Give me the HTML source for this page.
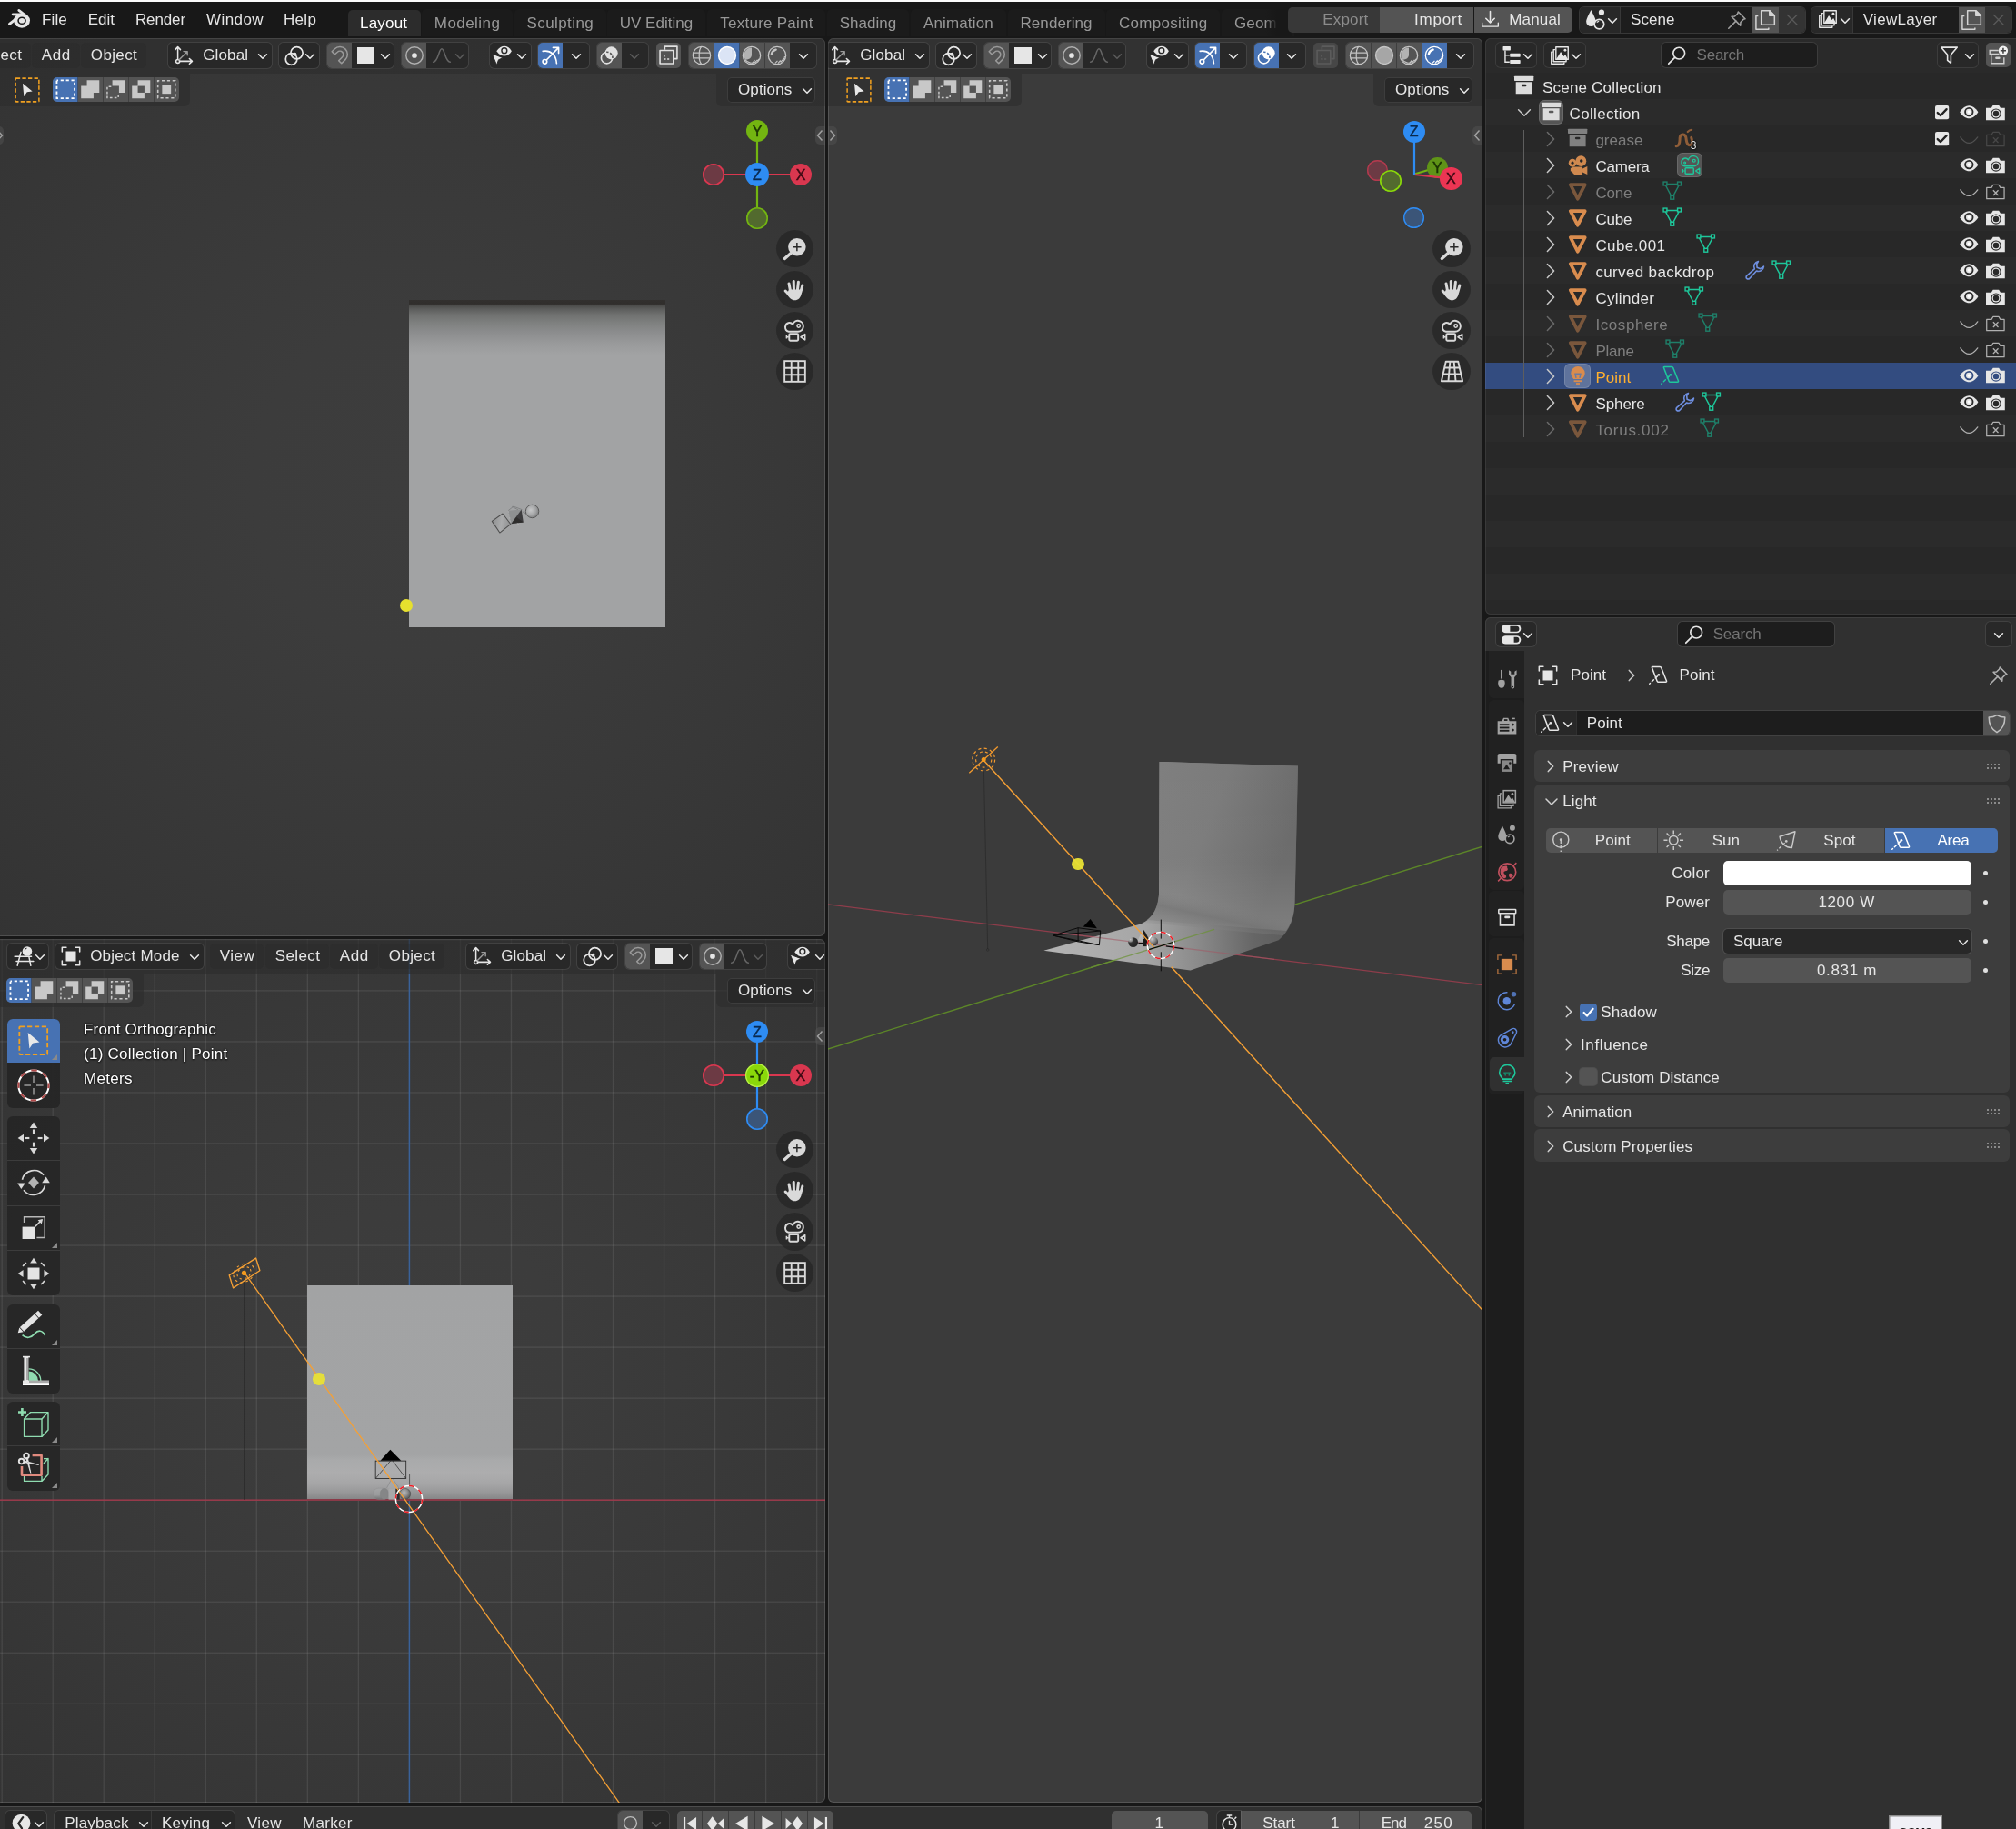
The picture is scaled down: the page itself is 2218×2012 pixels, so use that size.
<!DOCTYPE html>
<html><head><meta charset="utf-8"><title>Blender</title>
<style>
html,body{margin:0;padding:0;background:#181818;}
#root{position:relative;width:2218px;height:2012px;overflow:hidden;background:#181818;font-family:"Liberation Sans",sans-serif;}
#root div,#root svg{position:absolute;}
#root svg{overflow:visible;}
.t{white-space:nowrap;line-height:24px;height:24px;}
#root{will-change:transform;}
</style></head><body><div id="root">
<div style="left:0px;top:0px;width:2218px;height:2px;background:#fbfbfb;"></div>
<div style="left:0px;top:2px;width:2218px;height:40px;background:#181818;"></div>
<div style="left:-8px;top:42px;width:916px;height:988px;background:radial-gradient(ellipse 75% 75% at 50% 50%, #3d3d3d 0%, #3c3c3c 25%, #383838 60%, #343434 90%, #323232 100%);border-radius:6px;box-shadow:inset 0 0 0 1px rgba(255,255,255,0.07);overflow:hidden;"></div>
<div style="left:-8px;top:1033px;width:916px;height:950px;background:radial-gradient(ellipse 75% 75% at 50% 50%, #3d3d3d 0%, #3c3c3c 25%, #383838 60%, #343434 90%, #323232 100%);border-radius:6px;box-shadow:inset 0 0 0 1px rgba(255,255,255,0.07);overflow:hidden;"></div>
<div style="left:911px;top:42px;width:720px;height:1941px;background:#3b3b3b;border-radius:6px;box-shadow:inset 0 0 0 1px rgba(255,255,255,0.07);overflow:hidden;"></div>
<div style="left:1634px;top:42px;width:601px;height:633.7px;background:#282828;border-radius:6px;box-shadow:inset 0 0 0 1px rgba(255,255,255,0.07);overflow:hidden;"></div>
<div style="left:1634px;top:679.4px;width:601px;height:1350px;background:#303030;border-radius:6px;box-shadow:inset 0 0 0 1px rgba(255,255,255,0.07);overflow:hidden;"></div>
<div style="left:-8px;top:1987px;width:1639px;height:40px;background:#303030;border-radius:6px;box-shadow:inset 0 0 0 1px rgba(255,255,255,0.07);overflow:hidden;"></div>
<svg style="left:8.75px;top:9.35px;" width="24.5" height="24.5" viewBox="0 0 20 20"><g fill="none" stroke="#e6e6e6" stroke-linecap="round">
<path d="M1.2 14.2 L9.5 7.6" stroke-width="2.4"/><path d="M4.2 5.6 L11.2 5.6" stroke-width="2.2"/><path d="M9.6 1.9 L14.8 5.9" stroke-width="2.2"/>
</g><ellipse cx="12.3" cy="11.1" rx="7.3" ry="6.6" fill="#e6e6e6"/><ellipse cx="12.3" cy="11.2" rx="3.9" ry="3.5" fill="#181818"/><ellipse cx="12.3" cy="11.2" rx="2.6" ry="2.3" fill="#e6e6e6"/></svg>
<div class="t" style="left:46.1px;top:10.00px;color:#e6e6e6;font-size:17px;letter-spacing:0.070px;">File</div>
<div class="t" style="left:96.7px;top:10.00px;color:#e6e6e6;font-size:17px;letter-spacing:0.036px;">Edit</div>
<div class="t" style="left:148.9px;top:10.00px;color:#e6e6e6;font-size:17px;letter-spacing:-0.110px;">Render</div>
<div class="t" style="left:227.1px;top:10.00px;color:#e6e6e6;font-size:17px;letter-spacing:0.388px;">Window</div>
<div class="t" style="left:312.0px;top:10.00px;color:#e6e6e6;font-size:17px;letter-spacing:0.313px;">Help</div>
<div style="left:383px;top:10.8px;width:80px;height:29px;background:#2c2c2c;border-radius:5px 5px 0 0;"></div>
<div class="t" style="left:396px;top:13.70px;color:#ffffff;font-size:17px;letter-spacing:0.193px;">Layout</div>
<div style="left:463.8px;top:9.8px;width:100.09999999999997px;height:30px;background:#1b1b1b;border-radius:5px 5px 0 0;"></div>
<div class="t" style="left:477.8px;top:13.70px;color:#989898;font-size:17px;letter-spacing:0.446px;">Modeling</div>
<div style="left:565.5px;top:9.8px;width:101.20000000000005px;height:30px;background:#1b1b1b;border-radius:5px 5px 0 0;"></div>
<div class="t" style="left:579.5px;top:13.70px;color:#989898;font-size:17px;letter-spacing:0.409px;">Sculpting</div>
<div style="left:667.7px;top:9.8px;width:108.5px;height:30px;background:#1b1b1b;border-radius:5px 5px 0 0;"></div>
<div class="t" style="left:681.7px;top:13.70px;color:#989898;font-size:17px;letter-spacing:0.020px;">UV Editing</div>
<div style="left:778.3px;top:9.8px;width:130.10000000000002px;height:30px;background:#1b1b1b;border-radius:5px 5px 0 0;"></div>
<div class="t" style="left:792.3px;top:13.70px;color:#989898;font-size:17px;letter-spacing:0.241px;">Texture Paint</div>
<div style="left:909.7px;top:9.8px;width:90.59999999999991px;height:30px;background:#1b1b1b;border-radius:5px 5px 0 0;"></div>
<div class="t" style="left:923.7px;top:13.70px;color:#989898;font-size:17px;letter-spacing:0.036px;">Shading</div>
<div style="left:1001.9px;top:9.8px;width:104.80000000000007px;height:30px;background:#1b1b1b;border-radius:5px 5px 0 0;"></div>
<div class="t" style="left:1015.9px;top:13.70px;color:#989898;font-size:17px;letter-spacing:0.151px;">Animation</div>
<div style="left:1108.5px;top:9.8px;width:107px;height:30px;background:#1b1b1b;border-radius:5px 5px 0 0;"></div>
<div class="t" style="left:1122.5px;top:13.70px;color:#989898;font-size:17px;letter-spacing:0.071px;">Rendering</div>
<div style="left:1216.9px;top:9.8px;width:125.39999999999986px;height:30px;background:#1b1b1b;border-radius:5px 5px 0 0;"></div>
<div class="t" style="left:1230.9px;top:13.70px;color:#989898;font-size:17px;letter-spacing:0.292px;">Compositing</div>
<div style="left:1343.5px;top:9.8px;width:80px;height:30px;background:#1b1b1b;border-radius:5px 0 0 0;"></div>
<div class="t" style="left:1358px;top:13.70px;color:#989898;font-size:17px;letter-spacing:0.150px;">Geometry Nodes</div>
<div style="left:1392px;top:2px;width:30px;height:40px;background:linear-gradient(90deg,rgba(24,24,24,0),#181818 45%);"></div>
<div style="left:1416.5px;top:7.5px;width:101px;height:28px;background:#383838;border-radius:5px 0 0 5px;"></div>
<div style="left:1517.5px;top:7.5px;width:103.5px;height:28px;background:#545454;"></div>
<div style="left:1622px;top:7.5px;width:108px;height:28px;background:#545454;border-radius:0 5px 5px 0;"></div>
<div class="t" style="left:1455.3px;top:10.00px;color:#8c8c8c;font-size:17px;letter-spacing:0.174px;">Export</div>
<div class="t" style="left:1556px;top:10.00px;color:#e6e6e6;font-size:17px;letter-spacing:0.826px;">Import</div>
<svg style="left:1629.0px;top:10.5px;" width="21" height="21" viewBox="0 0 20 20"><g fill="none" stroke="#e6e6e6" stroke-width="1.5" stroke-linecap="round" stroke-linejoin="round"><path d="M10 1.5 V13 M5.5 8.8 L10 13.3 L14.5 8.8"/><path d="M1.6 13.5 V17.2 H18.4 V13.5" stroke-width="1.3"/></g></svg>
<div class="t" style="left:1660.3px;top:10.00px;color:#e6e6e6;font-size:17px;letter-spacing:0.150px;">Manual</div>
<div style="left:1737.5px;top:7.5px;width:248px;height:28px;background:#1d1d1d;border-radius:5px;box-shadow:0 0 0 1px #383838;"></div>
<div style="left:1737.5px;top:7.5px;width:44.5px;height:28px;background:#282828;border-radius:5px 0 0 5px;box-shadow:1px 0 0 0 #383838;"></div>
<svg style="left:1743.5px;top:10.0px;" width="23" height="23" viewBox="0 0 20 20"><path d="M5.6 0.8 C7.8 5.2 10.2 9.4 10.2 12 A4.6 4.6 0 0 1 1 12 C1 9.4 3.6 4.6 5.6 0.8Z" fill="#e6e6e6"/>
<circle cx="15.6" cy="3.2" r="2.7" fill="#e6e6e6"/><circle cx="13.4" cy="14.4" r="4.6" fill="#282828" stroke="#e6e6e6" stroke-width="1.5"/><path d="M11.2 12.8 A2.8 2.8 0 0 1 13.2 11.6" stroke="#e6e6e6" stroke-width="1" fill="none"/></svg>
<svg style="left:1765.5px;top:14.5px;" width="16" height="16" viewBox="0 0 16 16"><path d="M3.5999999999999996 5.8 L8 10.2 L12.4 5.8" fill="none" stroke="#e6e6e6" stroke-width="1.55" stroke-linecap="round" stroke-linejoin="round"/></svg>
<div class="t" style="left:1794px;top:10.00px;color:#e6e6e6;font-size:17px;letter-spacing:0.075px;">Scene</div>
<svg style="left:1900.0px;top:11.0px;" width="22" height="22" viewBox="0 0 20 20"><g fill="none" stroke="#a0a0a0" stroke-width="1.4" stroke-linejoin="round" stroke-linecap="round"><path d="M11.2 1.8 L18.2 8.8 L16.4 9.4 L13.6 12.2 L13.4 15.6 L4.6 6.6 L7.8 6.4 L10.6 3.6 Z"/><path d="M9 11 L1.6 18.4"/></g></svg>
<div style="left:1927.5px;top:7.5px;width:29px;height:28px;background:#545454;"></div>
<svg style="left:1930.0px;top:9.5px;" width="24" height="24" viewBox="0 0 20 20"><g fill="none" stroke="#d4d4d4" stroke-width="1.25" stroke-linejoin="round"><path d="M6.4 1.4 H14.2 L18.6 5.8 V14.4 H6.4 Z"/><path d="M14 1.6 V6 H18.4 Z" fill="#d4d4d4"/><path d="M3.6 6.2 H1.6 V18.6 H13.2 V17"/></g></svg>
<div style="left:1956.5px;top:7.5px;width:29px;height:28px;background:#333333;border-radius:0 5px 5px 0;"></div>
<svg style="left:1962.55px;top:13.25px;" width="17.5" height="17.5" viewBox="0 0 20 20"><path d="M4 4 L16 16 M16 4 L4 16" stroke="#595959" stroke-width="1.6" stroke-linecap="round" fill="none"/></svg>
<div style="left:1993.3px;top:7.5px;width:219.5px;height:28px;background:#1d1d1d;border-radius:5px;box-shadow:0 0 0 1px #383838;"></div>
<div style="left:1993.3px;top:7.5px;width:45px;height:28px;background:#282828;border-radius:5px 0 0 5px;box-shadow:1px 0 0 0 #383838;"></div>
<svg style="left:2000.0px;top:10.0px;" width="22" height="22" viewBox="0 0 20 20"><g fill="none" stroke="#e6e6e6" stroke-width="1.3" stroke-linejoin="round"><path d="M3.4 6.5 H1.6 V18.4 H14.4 V16.8"/><path d="M5.4 4.2 H3.8 V16.2 H16.4 V14.6"/>
<rect x="6.2" y="1.6" width="12.2" height="12.4" fill="#282828"/></g><path d="M6.6 13.6 L11 6.4 L14 11 L15.6 9.2 L18 13.6 Z" fill="#e6e6e6"/><circle cx="15.4" cy="4.8" r="1.3" fill="#e6e6e6"/></svg>
<svg style="left:2021.5px;top:14.5px;" width="16" height="16" viewBox="0 0 16 16"><path d="M3.5999999999999996 5.8 L8 10.2 L12.4 5.8" fill="none" stroke="#e6e6e6" stroke-width="1.55" stroke-linecap="round" stroke-linejoin="round"/></svg>
<div class="t" style="left:2049.8px;top:10.00px;color:#e6e6e6;font-size:17px;letter-spacing:0.280px;">ViewLayer</div>
<div style="left:2154.5px;top:7.5px;width:29px;height:28px;background:#545454;"></div>
<svg style="left:2157.0px;top:9.5px;" width="24" height="24" viewBox="0 0 20 20"><g fill="none" stroke="#d4d4d4" stroke-width="1.25" stroke-linejoin="round"><path d="M6.4 1.4 H14.2 L18.6 5.8 V14.4 H6.4 Z"/><path d="M14 1.6 V6 H18.4 Z" fill="#d4d4d4"/><path d="M3.6 6.2 H1.6 V18.6 H13.2 V17"/></g></svg>
<div style="left:2183.5px;top:7.5px;width:29.3px;height:28px;background:#333333;border-radius:0 5px 5px 0;"></div>
<svg style="left:2189.55px;top:13.25px;" width="17.5" height="17.5" viewBox="0 0 20 20"><path d="M4 4 L16 16 M16 4 L4 16" stroke="#595959" stroke-width="1.6" stroke-linecap="round" fill="none"/></svg>
<div style="left:-8px;top:42px;width:916px;height:988px;overflow:hidden;border-radius:6px;"><div style="left:8px;top:-42px;width:0;height:0;">
<div style="left:450.2px;top:329.6px;width:281.8px;height:360.2px;background:linear-gradient(180deg,#32302e 0,#302e2c 4.4px,#484846 5.4px,#5c5d5c 10px,#6e6f6e 15.5px,#7e807f 25px,#8b8c8d 35px,#999a9b 48px,#a2a3a4 61px,#a2a3a4 100%);"></div>
<svg style="left:530px;top:545px;" width="80" height="50" viewBox="0 0 2016 1260"><defs><linearGradient id="cylg" x1="300" y1="720" x2="790" y2="800" gradientUnits="userSpaceOnUse"><stop offset="0" stop-color="#8f9091"/><stop offset="0.5" stop-color="#abacad"/><stop offset="1" stop-color="#909192"/></linearGradient>
<radialGradient id="sphg" cx="1360" cy="410" r="230" gradientUnits="userSpaceOnUse"><stop offset="0" stop-color="#c6c7c8"/><stop offset="0.6" stop-color="#a4a5a6"/><stop offset="1" stop-color="#7e7f80"/></radialGradient></defs>
<path d="M285 715 L580 505 L800 795 L500 1035 Z" fill="url(#cylg)" stroke="#4c4c4c" stroke-width="26" stroke-linejoin="round"/>
<path d="M840 310 L1010 400 M735 420 L880 305 L1120 395" fill="none" stroke="#747576" stroke-width="18"/>
<path d="M735 425 L1100 392 L810 785 Z" fill="#8e9091"/><path d="M735 425 L810 785" stroke="#b4b5b6" stroke-width="16" stroke-dasharray="50 40"/>
<path d="M1100 392 L1155 745 L812 785 Z" fill="#3d3c3e"/><path d="M960 600 L1155 745 L830 772 Z" fill="#2e2d2c"/>
<path d="M980 770 L1060 830" stroke="#b4b5b6" stroke-width="22"/>
<path d="M1130 450 L1235 505" stroke="#6c6d6e" stroke-width="18"/>
<circle cx="1400" cy="440" r="182" fill="url(#sphg)" stroke="#505050" stroke-width="22"/></svg>
<div style="left:439.7px;top:659px;width:14px;height:14px;background:#e6e02e;border-radius:50%;"></div>
<svg style="left:829px;top:140px;" width="8" height="56.1" viewBox="0 0 8 56.1"><path d="M4.00 52.10 L4.00 4.00" stroke="#73b511" stroke-width="2.2" fill="none" /></svg>
<svg style="left:829px;top:188.1px;" width="8" height="55.8" viewBox="0 0 8 55.8"><path d="M4.00 4.00 L4.00 51.80" stroke="#73b511" stroke-width="2.2" fill="none" /></svg>
<svg style="left:781px;top:188.1px;" width="104" height="8.0" viewBox="0 0 104 8.0"><path d="M4.00 4.00 L100.00 4.00" stroke="#d9374f" stroke-width="2.2" fill="none" /></svg>
<div style="left:773px;top:180.1px;width:24px;height:24px;background:#6c3a44;border-radius:50%;box-shadow:inset 0 0 0 1.6px #d9374f;"></div>
<div style="left:821px;top:227.9px;width:24px;height:24px;background:#526a2e;border-radius:50%;box-shadow:inset 0 0 0 1.6px #73b511;"></div>
<div style="left:821px;top:132px;width:24px;height:24px;background:#73b511;border-radius:50%;"></div>
<div class="t" style="left:818.00px;top:132.50px;width:30px;text-align:center;color:#1b3303;font-size:16px;-webkit-text-stroke:0.45px #1b3303;">Y</div>
<div style="left:869.1px;top:180.1px;width:24px;height:24px;background:#d9374f;border-radius:50%;"></div>
<div class="t" style="left:866.10px;top:180.60px;width:30px;text-align:center;color:#3c0a14;font-size:16px;-webkit-text-stroke:0.45px #3c0a14;">X</div>
<div style="left:820px;top:179.1px;width:26px;height:26px;background:#2e8cf3;border-radius:50%;"></div>
<div class="t" style="left:818.00px;top:180.60px;width:30px;text-align:center;color:#0a2a4f;font-size:16px;-webkit-text-stroke:0.45px #0a2a4f;">Z</div>
<div style="left:853.5px;top:253.1px;width:41.2px;height:41.2px;background:rgba(38,38,38,0.75);border-radius:50%;"></div>
<svg style="left:861.1px;top:260.7px;" width="26" height="26" viewBox="0 0 20 20"><circle cx="12.2" cy="8.2" r="7.5" fill="#d9d9d9"/><path d="M6.8 13.6 L1.8 18" stroke="#d9d9d9" stroke-width="2.6" stroke-linecap="round"/><path d="M8.6 8.2 H15.8 M12.2 4.6 V11.8" stroke="#2a2a2a" stroke-width="1.15"/></svg>
<div style="left:853.5px;top:298.09999999999997px;width:41.2px;height:41.2px;background:rgba(38,38,38,0.75);border-radius:50%;"></div>
<svg style="left:861.1px;top:305.7px;" width="26" height="26" viewBox="0 0 20 20"><g stroke="#d9d9d9" stroke-width="2.3" stroke-linecap="round" fill="none"><path d="M6.6 11 L5.4 4.6"/><path d="M9.6 10 L9.4 2.6"/><path d="M12.6 10.4 L13.4 3.2"/><path d="M15.2 12 L16.8 6.2"/><path d="M6 14.4 L2.4 10.8"/></g>
<path d="M5.4 9.6 L15.8 9.6 L16 13 C15.4 16.6 13 18.6 10.4 18.6 C7.6 18.6 5.6 16.8 3.6 13.2 Z" fill="#d9d9d9"/></svg>
<div style="left:853.5px;top:343.29999999999995px;width:41.2px;height:41.2px;background:rgba(38,38,38,0.75);border-radius:50%;"></div>
<svg style="left:861.1px;top:350.9px;" width="26" height="26" viewBox="0 0 20 20"><g fill="none" stroke="#d9d9d9" stroke-width="1.5" stroke-linejoin="round"><path d="M2.4 6.4 A3.4 3.4 0 0 1 8.6 4.6 A4.6 4.6 0 1 1 13 10.6 H5.2 A3.4 3.4 0 0 1 2.4 6.4 Z"/><circle cx="13.6" cy="5.8" r="1.3" stroke-width="1.2"/><rect x="5.6" y="12.4" width="7.6" height="5.8" rx="0.8"/><path d="M19 12.8 L15.4 15.2 L19 17.6 Z" stroke-width="1.2"/><path d="M3.4 13.6 V16.6 M3.4 15.2 H5.2" stroke-width="1.2"/></g></svg>
<div style="left:853.5px;top:388.2px;width:41.2px;height:41.2px;background:rgba(38,38,38,0.75);border-radius:50%;"></div>
<svg style="left:860.6px;top:395.3px;" width="27" height="27" viewBox="0 0 20 20"><g fill="none" stroke="#d9d9d9" stroke-width="1.4"><rect x="1.6" y="1.6" width="16.8" height="16.8"/><path d="M7.2 1.6 V18.4 M12.8 1.6 V18.4 M1.6 7.2 H18.4 M1.6 12.8 H18.4"/></g></svg>
<div style="left:896.5px;top:139.3px;width:20px;height:19.6px;background:rgba(80,80,80,0.55);border-radius:5px 0 0 5px;"></div>
<svg style="left:897px;top:141px;" width="10" height="16" viewBox="0 0 10 16"><path d="M7.5 2.5 L2.5 8 L7.5 13.5" fill="none" stroke="#a0a0a0" stroke-width="1.5"/></svg>
<div style="left:-6px;top:139.3px;width:10px;height:19.6px;background:rgba(80,80,80,0.55);border-radius:0 5px 5px 0;"></div>
<svg style="left:-5px;top:141px;" width="10" height="16" viewBox="0 0 10 16"><path d="M2.5 2.5 L7.5 8 L2.5 13.5" fill="none" stroke="#a0a0a0" stroke-width="1.5"/></svg>
</div></div>
<div style="left:-8px;top:1033px;width:916px;height:950px;overflow:hidden;border-radius:6px;"><div style="left:8px;top:-1033px;width:0;height:0;">
<svg style="left:0px;top:0px;" width="910" height="2000" viewBox="0 0 910 2000"><rect x="-54.55" y="1030" width="1.36" height="960" fill="rgba(255,255,255,0.088)"/><rect x="1.48" y="1030" width="1.36" height="960" fill="rgba(255,255,255,0.088)"/><rect x="57.51" y="1030" width="1.36" height="960" fill="rgba(255,255,255,0.088)"/><rect x="113.54" y="1030" width="1.36" height="960" fill="rgba(255,255,255,0.088)"/><rect x="169.57" y="1030" width="1.36" height="960" fill="rgba(255,255,255,0.088)"/><rect x="225.60" y="1030" width="1.36" height="960" fill="rgba(255,255,255,0.088)"/><rect x="281.63" y="1030" width="1.36" height="960" fill="rgba(255,255,255,0.088)"/><rect x="337.66" y="1030" width="1.36" height="960" fill="rgba(255,255,255,0.088)"/><rect x="393.69" y="1030" width="1.36" height="960" fill="rgba(255,255,255,0.088)"/><rect x="505.75" y="1030" width="1.36" height="960" fill="rgba(255,255,255,0.088)"/><rect x="561.78" y="1030" width="1.36" height="960" fill="rgba(255,255,255,0.088)"/><rect x="617.81" y="1030" width="1.36" height="960" fill="rgba(255,255,255,0.088)"/><rect x="673.84" y="1030" width="1.36" height="960" fill="rgba(255,255,255,0.088)"/><rect x="729.87" y="1030" width="1.36" height="960" fill="rgba(255,255,255,0.088)"/><rect x="785.90" y="1030" width="1.36" height="960" fill="rgba(255,255,255,0.088)"/><rect x="841.93" y="1030" width="1.36" height="960" fill="rgba(255,255,255,0.088)"/><rect x="897.96" y="1030" width="1.36" height="960" fill="rgba(255,255,255,0.088)"/><rect x="953.99" y="1030" width="1.36" height="960" fill="rgba(255,255,255,0.088)"/><rect x="0" y="1985.70" width="910" height="1.36" fill="rgba(255,255,255,0.088)"/><rect x="0" y="1929.67" width="910" height="1.36" fill="rgba(255,255,255,0.088)"/><rect x="0" y="1873.64" width="910" height="1.36" fill="rgba(255,255,255,0.088)"/><rect x="0" y="1817.61" width="910" height="1.36" fill="rgba(255,255,255,0.088)"/><rect x="0" y="1761.58" width="910" height="1.36" fill="rgba(255,255,255,0.088)"/><rect x="0" y="1705.55" width="910" height="1.36" fill="rgba(255,255,255,0.088)"/><rect x="0" y="1593.49" width="910" height="1.36" fill="rgba(255,255,255,0.088)"/><rect x="0" y="1537.46" width="910" height="1.36" fill="rgba(255,255,255,0.088)"/><rect x="0" y="1481.43" width="910" height="1.36" fill="rgba(255,255,255,0.088)"/><rect x="0" y="1425.40" width="910" height="1.36" fill="rgba(255,255,255,0.088)"/><rect x="0" y="1369.37" width="910" height="1.36" fill="rgba(255,255,255,0.088)"/><rect x="0" y="1313.34" width="910" height="1.36" fill="rgba(255,255,255,0.088)"/><rect x="0" y="1257.31" width="910" height="1.36" fill="rgba(255,255,255,0.088)"/><rect x="0" y="1201.28" width="910" height="1.36" fill="rgba(255,255,255,0.088)"/><rect x="0" y="1145.25" width="910" height="1.36" fill="rgba(255,255,255,0.088)"/><rect x="0" y="1089.22" width="910" height="1.36" fill="rgba(255,255,255,0.088)"/><rect x="0" y="1033.19" width="910" height="1.36" fill="rgba(255,255,255,0.088)"/><rect x="0" y="1649.45" width="910" height="1.5" fill="#9c3b4c"/><rect x="449.65" y="1030" width="1.5" height="960" fill="#3a6299"/></svg>
<div style="left:337.6px;top:1414px;width:226px;height:235.6px;background:linear-gradient(180deg,#a2a3a4 0,#a3a4a5 186px,#a9aaab 192px,#adadae 206px,#a6a6a7 218px,#979798 228px,#858586 235.6px);"></div>
<div style="left:337.6px;top:1649.4px;width:226px;height:1.6px;background:#8a3a48;"></div>
<div style="left:268.3px;top:1410px;width:1px;height:240px;background:rgba(26,26,26,0.4);"></div>
<svg style="left:400px;top:1585px;" width="80" height="85" viewBox="0 0 1721 1829"><defs><radialGradient id="sph2" cx="960" cy="1225" r="150" gradientUnits="userSpaceOnUse"><stop offset="0" stop-color="#b8b9ba"/><stop offset="0.55" stop-color="#8e8f90"/><stop offset="1" stop-color="#5e5f60"/></radialGradient>
<linearGradient id="cyl2" x1="0" y1="1120" x2="0" y2="1390" gradientUnits="userSpaceOnUse"><stop offset="0" stop-color="#a4a5a6"/><stop offset="0.6" stop-color="#9a9b9c"/><stop offset="1" stop-color="#707172"/></linearGradient></defs>
<rect x="222" y="1122" width="370" height="268" rx="134" fill="url(#cyl2)" stroke="#8a8b8c" stroke-width="8"/><ellipse cx="490" cy="1256" rx="100" ry="132" fill="#858687" stroke="#7a7b7c" stroke-width="6"/>
<path d="M660 905 L548 1122 H848 Z" fill="#a9aaab" opacity="0.6"/><path d="M660 905 L548 1122 M700 905 L845 1135" stroke="#808182" stroke-width="12" fill="none"/>
<rect x="592" y="1128" width="170" height="262" fill="#a7a8a9"/><rect x="760" y="1135" width="95" height="255" fill="#2b2b2c"/>
<circle cx="985" cy="1255" r="128" fill="url(#sph2)"/><path d="M870 1300 A128 128 0 0 0 1100 1300 L1100 1390 H870 Z" fill="#4a4a4b" opacity="0.35"/><circle cx="985" cy="1255" r="128" fill="none" stroke="#3c3c3d" stroke-width="12" opacity="0.8"/>
<g fill="none" stroke="#1c1c1c" stroke-width="17"><rect x="283" y="476" width="722" height="416"/><path d="M290 885 L636 476 M690 476 L1000 885" stroke-width="14"/></g><path d="M632 212 L398 466 H888 Z" fill="#000"/>
<path d="M1088 775 V1060" stroke="#2c2c2c" stroke-width="14"/></svg>
<svg style="left:264.8px;top:1396px;" width="428.1" height="602.32" viewBox="0 0 428.1 602.32"><path d="M4.00 4.00 L424.10 598.32" stroke="#f5a035" stroke-width="1.3" fill="none" /></svg>
<svg style="left:235px;top:1370px;" width="70" height="60" viewBox="0 0 70 60"><g fill="none" stroke="#f5a035"><path d="M46.53 14.06 L50.87 27.78 L21.53 46.88 L17.19 32.81 Z" stroke-width="1.35" stroke-linejoin="round"/><ellipse cx="33.5" cy="30.4" rx="12.2" ry="9.6" stroke-width="1.1" stroke-dasharray="2.6 3.4" transform="rotate(-32 33.5 30.4)"/><ellipse cx="33.5" cy="30.4" rx="8" ry="6" stroke-width="1.1" stroke-dasharray="2.4 3.2" transform="rotate(-32 33.5 30.4)"/></g><circle cx="33.5" cy="30.4" r="2.6" fill="#f39a1e"/></svg>
<div style="left:344.2px;top:1510.2px;width:13.6px;height:13.6px;background:rgba(232,226,52,0.93);border-radius:50%;"></div>
<svg style="left:430.4px;top:1629.4px;" width="40" height="40" viewBox="0 0 40 40"><circle cx="20" cy="20" r="14.6" fill="none" stroke="#ffffff" stroke-width="1.5"/><circle cx="20" cy="20" r="14.6" fill="none" stroke="#ee1c24" stroke-width="1.5" stroke-dasharray="5.733 5.733" transform="rotate(-90 20 20)"/></svg>
<div class="t" style="left:92px;top:1121.30px;color:#ffffff;font-size:17px;letter-spacing:0.185px;text-shadow:0 0 2px rgba(0,0,0,0.9),0 1px 2px rgba(0,0,0,0.7);">Front Orthographic</div>
<div class="t" style="left:92px;top:1148.20px;color:#ffffff;font-size:17px;letter-spacing:0.264px;text-shadow:0 0 2px rgba(0,0,0,0.9),0 1px 2px rgba(0,0,0,0.7);">(1) Collection | Point</div>
<div class="t" style="left:92px;top:1175.00px;color:#ffffff;font-size:17px;letter-spacing:0.310px;text-shadow:0 0 2px rgba(0,0,0,0.9),0 1px 2px rgba(0,0,0,0.7);">Meters</div>
<svg style="left:828.8px;top:1131px;" width="8.0" height="104" viewBox="0 0 8.0 104"><path d="M4.00 4.00 L4.00 100.00" stroke="#2e8cf3" stroke-width="2.2" fill="none" /></svg>
<svg style="left:781px;top:1179px;" width="104" height="8" viewBox="0 0 104 8"><path d="M4.00 4.00 L100.00 4.00" stroke="#d9374f" stroke-width="2.2" fill="none" /></svg>
<div style="left:772.8px;top:1171px;width:24px;height:24px;background:#6c3a44;border-radius:50%;box-shadow:inset 0 0 0 1.6px #d9374f;"></div>
<div style="left:820.8px;top:1219px;width:24px;height:24px;background:#3b5578;border-radius:50%;box-shadow:inset 0 0 0 1.6px #2e8cf3;"></div>
<div style="left:820.8px;top:1123px;width:24px;height:24px;background:#2e8cf3;border-radius:50%;"></div>
<div class="t" style="left:817.80px;top:1123.50px;width:30px;text-align:center;color:#0a2a4f;font-size:16px;-webkit-text-stroke:0.45px #0a2a4f;">Z</div>
<div style="left:868.9px;top:1171px;width:24px;height:24px;background:#d9374f;border-radius:50%;"></div>
<div class="t" style="left:865.90px;top:1171.50px;width:30px;text-align:center;color:#3c0a14;font-size:16px;-webkit-text-stroke:0.45px #3c0a14;">X</div>
<div style="left:819.8px;top:1170px;width:26px;height:26px;background:#8ad80a;border-radius:50%;box-shadow:inset 0 0 0 1.2px #b9ef4a;"></div>
<div class="t" style="left:817.80px;top:1171.50px;width:30px;text-align:center;color:#1e3a02;font-size:16px;-webkit-text-stroke:0.45px #1e3a02;">-Y</div>
<div style="left:853.5px;top:1244.1000000000001px;width:41.2px;height:41.2px;background:rgba(38,38,38,0.75);border-radius:50%;"></div>
<svg style="left:861.1px;top:1251.7px;" width="26" height="26" viewBox="0 0 20 20"><circle cx="12.2" cy="8.2" r="7.5" fill="#d9d9d9"/><path d="M6.8 13.6 L1.8 18" stroke="#d9d9d9" stroke-width="2.6" stroke-linecap="round"/><path d="M8.6 8.2 H15.8 M12.2 4.6 V11.8" stroke="#2a2a2a" stroke-width="1.15"/></svg>
<div style="left:853.5px;top:1289.1000000000001px;width:41.2px;height:41.2px;background:rgba(38,38,38,0.75);border-radius:50%;"></div>
<svg style="left:861.1px;top:1296.7px;" width="26" height="26" viewBox="0 0 20 20"><g stroke="#d9d9d9" stroke-width="2.3" stroke-linecap="round" fill="none"><path d="M6.6 11 L5.4 4.6"/><path d="M9.6 10 L9.4 2.6"/><path d="M12.6 10.4 L13.4 3.2"/><path d="M15.2 12 L16.8 6.2"/><path d="M6 14.4 L2.4 10.8"/></g>
<path d="M5.4 9.6 L15.8 9.6 L16 13 C15.4 16.6 13 18.6 10.4 18.6 C7.6 18.6 5.6 16.8 3.6 13.2 Z" fill="#d9d9d9"/></svg>
<div style="left:853.5px;top:1334.4px;width:41.2px;height:41.2px;background:rgba(38,38,38,0.75);border-radius:50%;"></div>
<svg style="left:861.1px;top:1342.0px;" width="26" height="26" viewBox="0 0 20 20"><g fill="none" stroke="#d9d9d9" stroke-width="1.5" stroke-linejoin="round"><path d="M2.4 6.4 A3.4 3.4 0 0 1 8.6 4.6 A4.6 4.6 0 1 1 13 10.6 H5.2 A3.4 3.4 0 0 1 2.4 6.4 Z"/><circle cx="13.6" cy="5.8" r="1.3" stroke-width="1.2"/><rect x="5.6" y="12.4" width="7.6" height="5.8" rx="0.8"/><path d="M19 12.8 L15.4 15.2 L19 17.6 Z" stroke-width="1.2"/><path d="M3.4 13.6 V16.6 M3.4 15.2 H5.2" stroke-width="1.2"/></g></svg>
<div style="left:853.5px;top:1379.4px;width:41.2px;height:41.2px;background:rgba(38,38,38,0.75);border-radius:50%;"></div>
<svg style="left:860.6px;top:1386.5px;" width="27" height="27" viewBox="0 0 20 20"><g fill="none" stroke="#d9d9d9" stroke-width="1.4"><rect x="1.6" y="1.6" width="16.8" height="16.8"/><path d="M7.2 1.6 V18.4 M12.8 1.6 V18.4 M1.6 7.2 H18.4 M1.6 12.8 H18.4"/></g></svg>
<div style="left:896.5px;top:1130.3px;width:12px;height:19.6px;background:rgba(80,80,80,0.55);border-radius:5px 0 0 5px;"></div>
<svg style="left:897px;top:1132px;" width="10" height="16" viewBox="0 0 10 16"><path d="M7.5 2.5 L2.5 8 L7.5 13.5" fill="none" stroke="#a0a0a0" stroke-width="1.5"/></svg>
</div></div>
<div style="left:-8px;top:1033px;width:916px;height:950px;overflow:hidden;border-radius:6px;"><div style="left:8px;top:-1033px;width:0;height:0;">
<div style="left:8.1px;top:1120.8px;width:58px;height:98.3px;background:rgba(38,38,38,0.95);border-radius:6px;"></div>
<div style="left:8.1px;top:1120.8px;width:58px;height:48.3px;background:#4772b3;border-radius:6px 6px 0 0;"></div>
<svg style="left:20.25px;top:1128.25px;" width="33.5" height="33.5" viewBox="0 0 20 20"><rect x="0.8" y="0.8" width="18.4" height="18.4" fill="none" stroke="#f0a020" stroke-width="1.1" stroke-dasharray="3.1 1.6" rx="0.5"/>
<path d="M6.4 4.8 L14 11 L9.8 11.6 L7.4 15.2 Z" fill="#e8e8e8"/></svg>
<svg style="left:56.599999999999994px;top:1159.6px;" width="6" height="6" viewBox="0 0 6 6"><path d="M6 0 V6 H0 Z" fill="#8a8a8a"/></svg>
<svg style="left:20px;top:1177px;" width="34" height="34" viewBox="0 0 34 34"><circle cx="17" cy="17" r="16.6" fill="none" stroke="#ffffff" stroke-width="2"/><circle cx="17" cy="17" r="16.6" fill="none" stroke="#b04848" stroke-width="2" stroke-dasharray="6.52 6.52" stroke-dashoffset="3.26"/>
<path d="M17 6.4 V14 M17 20 V27.6 M6.4 17 H14 M20 17 H27.6" stroke="#9a9a9a" stroke-width="1.5"/></svg>
<div style="left:8.1px;top:1228.1px;width:58px;height:197.4px;background:rgba(38,38,38,0.95);border-radius:6px;"></div>
<div style="left:8.1px;top:1276.2px;width:58px;height:1px;background:rgba(70,70,70,0.7);"></div>
<div style="left:8.1px;top:1325.5px;width:58px;height:1px;background:rgba(70,70,70,0.7);"></div>
<div style="left:8.1px;top:1375.2px;width:58px;height:1px;background:rgba(70,70,70,0.7);"></div>
<svg style="left:20px;top:1235.2px;" width="34" height="34" viewBox="0 0 34 34"><g transform="translate(17 17) scale(1.06) translate(-17 -17)"><g fill="#d9d9d9"><path d="M17 0.6 L21 6.6 H13 Z"/><path d="M17 33.4 L21 27.4 H13 Z"/><path d="M0.6 17 L6.6 13 V21 Z"/><path d="M33.4 17 L27.4 13 V21 Z"/><rect x="16" y="8" width="2" height="4.6"/><rect x="16" y="21.4" width="2" height="4.6"/><rect x="8" y="16" width="4.6" height="2"/><rect x="21.4" y="16" width="4.6" height="2"/></g></g></svg>
<svg style="left:20px;top:1284.4px;" width="34" height="34" viewBox="0 0 34 34"><g transform="translate(17 17) scale(1.1) translate(-17 -17)"><g fill="none" stroke="#d9d9d9" stroke-width="1.5"><path d="M5.6 14 A12.2 12.2 0 0 1 27 9.4"/><path d="M28.4 20 A12.2 12.2 0 0 1 7 24.6"/></g><path d="M17 11 L22.4 17 L17 23 L11.6 17 Z" fill="#b4b4b4"/><path d="M0.8 17.4 H8.6 L4.6 23.4 Z" fill="#d9d9d9"/><path d="M33.2 17.2 H25.4 L29.4 11.2 Z" fill="#d9d9d9"/></g></svg>
<svg style="left:20px;top:1334px;" width="34" height="34" viewBox="0 0 34 34"><path d="M6.6 11 V4.8 H29.2 V27.4 H20.4" fill="none" stroke="#b8b8b8" stroke-width="1.5"/><rect x="4.6" y="15.6" width="13.4" height="13.4" fill="#e4e4e4"/><path d="M18.8 15.2 L26 8" stroke="#d9d9d9" stroke-width="1.6"/><path d="M27 7 L21.6 8.2 L25.8 12.4 Z" fill="#d9d9d9"/></svg>
<svg style="left:56.599999999999994px;top:1366.5px;" width="6" height="6" viewBox="0 0 6 6"><path d="M6 0 V6 H0 Z" fill="#8a8a8a"/></svg>
<svg style="left:20px;top:1383.6px;" width="34" height="34" viewBox="0 0 34 34"><g transform="translate(17 17) scale(1.08) translate(-17 -17)"><g fill="none" stroke="#d9d9d9" stroke-width="1.4"><path d="M9.6 6 A13.6 13.6 0 0 0 6 9.6 M24.4 6 A13.6 13.6 0 0 1 28 9.6 M28 24.4 A13.6 13.6 0 0 1 24.4 28 M9.6 28 A13.6 13.6 0 0 1 6 24.4"/></g><rect x="11" y="11" width="12" height="12" fill="#e4e4e4"/>
<g fill="#d9d9d9"><path d="M17 1 L20.6 6.4 H13.4 Z"/><path d="M17 33 L20.6 27.6 H13.4 Z"/><path d="M1 17 L6.4 13.4 V20.6 Z"/><path d="M33 17 L27.6 13.4 V20.6 Z"/></g></g></svg>
<div style="left:8.1px;top:1434.8px;width:58px;height:98px;background:rgba(38,38,38,0.95);border-radius:6px;"></div>
<div style="left:8.1px;top:1482.9px;width:58px;height:1px;background:rgba(70,70,70,0.7);"></div>
<svg style="left:20px;top:1442px;" width="34" height="34" viewBox="0 0 34 34"><path d="M4.6 26.6 C9 31 14.4 29.6 18 25.4 C21.6 21.2 26.6 20.6 29.4 27" fill="none" stroke="#8fdcb0" stroke-width="1.7"/>
<g transform="rotate(-42 17 17)"><rect x="3.2" y="9.6" width="21.6" height="6.4" fill="#e4e4e4" transform="translate(2 -2)"/><rect x="27.6" y="7.6" width="4.6" height="6.4" fill="#e4e4e4"/><path d="M4.4 7.6 L-0.6 10.8 L4.4 14 Z" fill="#e4e4e4"/></g></svg>
<svg style="left:56.599999999999994px;top:1473.9px;" width="6" height="6" viewBox="0 0 6 6"><path d="M6 0 V6 H0 Z" fill="#8a8a8a"/></svg>
<svg style="left:20px;top:1491px;" width="34" height="34" viewBox="0 0 34 34"><path d="M11.6 28 V17.6 A10.4 10.4 0 0 1 22 28 Z" fill="#8fdcb0"/><path d="M11.6 14.8 A13.2 13.2 0 0 1 24.8 28" fill="none" stroke="#8fdcb0" stroke-width="1.3"/>
<rect x="6.4" y="1.4" width="5" height="30.6" fill="#e8e8e8"/><rect x="5" y="0.8" width="8" height="1.6" fill="#e8e8e8"/><rect x="5" y="27.6" width="29" height="5" fill="#e8e8e8"/><rect x="5" y="31.2" width="29" height="1.8" fill="#ffffff"/>
<path d="M9 4 H11.4 M9 6 H11.4 M9 8 H11.4 M9 10 H11.4 M9 12 H11.4 M9 14 H11.4 M9 16 H11.4 M9 18 H11.4 M9 20 H11.4 M9 22 H11.4 M9 24 H11.4 M9 26 H11.4" stroke="#333" stroke-width="0.7"/>
<path d="M13 27.6 V30 M15 27.6 V30 M17 27.6 V30 M19 27.6 V30 M21 27.6 V30 M23 27.6 V30 M25 27.6 V30 M27 27.6 V30 M29 27.6 V30 M31 27.6 V30 M33 27.6 V30" stroke="#333" stroke-width="0.7"/></svg>
<div style="left:8.1px;top:1542px;width:58px;height:98.4px;background:rgba(38,38,38,0.95);border-radius:6px;"></div>
<div style="left:8.1px;top:1589.8px;width:58px;height:1px;background:rgba(70,70,70,0.7);"></div>
<svg style="left:20px;top:1549px;" width="34" height="34" viewBox="0 0 34 34"><g fill="none" stroke="#8fdcb0" stroke-width="1.4" stroke-linejoin="round"><rect x="6.6" y="12" width="19.4" height="19.4"/><path d="M6.6 12 L13.6 4.6 H33 L26 12 M33 4.6 V24 L26 31.4"/></g><path d="M4.4 0 V9 M0 4.5 H9" stroke="#8fdcb0" stroke-width="2.6"/></svg>
<svg style="left:56.599999999999994px;top:1580.8px;" width="6" height="6" viewBox="0 0 6 6"><path d="M6 0 V6 H0 Z" fill="#8a8a8a"/></svg>
<svg style="left:20px;top:1598px;" width="34" height="34" viewBox="0 0 34 34"><g fill="none" stroke="#8fdcb0" stroke-width="1.4" stroke-linejoin="round"><path d="M6.6 26 V31.4 H26 V26 M28 12 L33 6.6 V24 L26 31.4 M28 6.6 H33"/></g>
<path d="M15.6 3 H25.6 V24.6 H4 V15" fill="none" stroke="#e08a7e" stroke-width="2.6" stroke-linejoin="round"/>
<g fill="none" stroke="#e4e4e4" stroke-width="1.9"><circle cx="9" cy="3.4" r="2.8"/><circle cx="3.6" cy="9.6" r="2.8"/></g><path d="M6 10.6 L22.6 13.4 L7 9 Z M10.4 5.6 L13.8 22.4 L8.8 6.4 Z" fill="#e4e4e4" stroke="#e4e4e4" stroke-width="0.8"/></svg>
<svg style="left:56.599999999999994px;top:1630.9px;" width="6" height="6" viewBox="0 0 6 6"><path d="M6 0 V6 H0 Z" fill="#8a8a8a"/></svg>
</div></div>
<div style="left:911px;top:42px;width:720px;height:1941px;overflow:hidden;border-radius:6px;"><div style="left:-911px;top:-42px;width:0;height:0;">
<svg style="left:0px;top:0px;" width="1700" height="2000" viewBox="0 0 1700 2000"><defs>
<linearGradient id="wallg" x1="1276" y1="840" x2="1428" y2="900" gradientUnits="userSpaceOnUse"><stop offset="0" stop-color="#7f7f7f"/><stop offset="0.45" stop-color="#7b7b7b"/><stop offset="1" stop-color="#6a6a6a"/></linearGradient>
<linearGradient id="wallv" x1="0" y1="838" x2="0" y2="1040" gradientUnits="userSpaceOnUse"><stop offset="0" stop-color="#ffffff" stop-opacity="0"/><stop offset="0.55" stop-color="#ffffff" stop-opacity="0.02"/><stop offset="0.8" stop-color="#ffffff" stop-opacity="0.10"/><stop offset="1" stop-color="#ffffff" stop-opacity="0.16"/></linearGradient>
<linearGradient id="floorg" x1="1150" y1="1046" x2="1420" y2="1030" gradientUnits="userSpaceOnUse"><stop offset="0" stop-color="#b4b4b4"/><stop offset="0.4" stop-color="#a6a6a6"/><stop offset="0.62" stop-color="#8a8a8a"/><stop offset="0.85" stop-color="#666666"/><stop offset="1" stop-color="#5c5c5c"/></linearGradient>
<linearGradient id="curveg" x1="1300" y1="985" x2="1290" y2="1030" gradientUnits="userSpaceOnUse"><stop offset="0" stop-color="#7c7c7c" stop-opacity="0"/><stop offset="0.35" stop-color="#707070" stop-opacity="0.55"/><stop offset="0.75" stop-color="#8a8a8a" stop-opacity="0.4"/><stop offset="1" stop-color="#a0a0a0" stop-opacity="0"/></linearGradient>
</defs><path d="M905 994.1 L1640 1084.8" stroke="#8e3d4b" stroke-width="1.25" fill="none"/><path d="M905 1155.8 L1640 928.4" stroke="#5c8628" stroke-width="1.35" fill="none"/><path d="M1275.6 838 L1428 842.4 L1424.6 988.7 C1424.4 1008 1421 1022 1406.7 1034.2 L1309.7 1067.6 L1148.3 1045.7 L1255 1016.5 C1268 1011 1275 1000 1275.2 980 Z" fill="url(#floorg)"/><path d="M1275.6 838 L1428 842.4 L1424.6 988.7 C1424.4 1004 1422 1014 1415 1024 L1262 1012 C1272 1004 1275 994 1275.2 980 Z" fill="url(#wallg)"/><path d="M1275.6 838 L1428 842.4 L1424.6 988.7 C1424.4 1004 1422 1014 1415 1024 L1262 1012 C1272 1004 1275 994 1275.2 980 Z" fill="url(#wallv)"/><path d="M1275.2 975 L1424.7 981 C1424.4 1004 1422 1016 1412 1029 L1258 1015 C1270 1008 1275 996 1275.2 975 Z" fill="url(#curveg)"/><path d="M1170 1026.7 L1402 1055.3" stroke="#a05a66" stroke-width="1.2" fill="none" opacity="0.6"/><path d="M1200 1064.4 L1277 1040.6 L1336 1022.4" stroke="#6c9138" stroke-width="1.3" fill="none" opacity="0.75"/><path d="M1082.4 848 L1086.7 1044" stroke="#1e1e1e" stroke-width="1" fill="none" opacity="0.45"/><circle cx="1086.7" cy="1045" r="1.3" fill="none" stroke="#1e1e1e" stroke-width="0.7" opacity="0.5"/><g fill="none" stroke="#0a0a0a" stroke-width="1"><path d="M1158.5 1029.1 L1186.1 1020.7 L1210.7 1024 L1209.4 1039.6 L1186.1 1035.9 Z M1186.1 1020.7 V1035.9 M1158.5 1029.1 L1210.7 1024 M1158.5 1029.1 L1209.4 1039.6"/></g><path d="M1199.6 1011 L1191.7 1019.5 L1206.9 1021.2 Z" fill="#000"/><defs><radialGradient id="rs1" cx="1243.6" cy="1033.4" r="8" gradientUnits="userSpaceOnUse"><stop offset="0" stop-color="#c4c4c4"/><stop offset="0.3" stop-color="#8a8a8a"/><stop offset="0.48" stop-color="#343434"/><stop offset="1" stop-color="#262626"/></radialGradient><radialGradient id="rs2" cx="1267.4" cy="1033" r="7.5" gradientUnits="userSpaceOnUse"><stop offset="0" stop-color="#c8c8c8"/><stop offset="0.5" stop-color="#8c8c8c"/><stop offset="1" stop-color="#3a3a3a"/></radialGradient></defs><circle cx="1246.7" cy="1036.6" r="5.4" fill="url(#rs1)"/><path d="M1257.4 1021.9 L1251.6 1035.3 L1259.2 1035.9 Z" fill="#b9b9b9"/><path d="M1257.4 1021.9 L1260.4 1026.1 L1264.5 1034.4 L1259.2 1035.9 Z" fill="#1c1c1c"/><rect x="1257" y="1033" width="6.7" height="8.1" fill="#1a1a1a"/><path d="M1252.4 1037.5 H1257" stroke="#0c0c0c" stroke-width="1.1"/><circle cx="1269.5" cy="1035.7" r="4.6" fill="url(#rs2)"/><path d="M1081.7 835.7 L1269.9 1042.4" stroke="#f5a035" stroke-width="1.4" fill="none"/><path d="M1288.7 1063.8 L1640 1451.2" stroke="#f5a035" stroke-width="1.4" fill="none"/><g stroke="#0a0a0a" stroke-width="1" fill="none"><path d="M1277.3 1011.6 V1032.6 M1277.3 1047.3 V1068.3"/><path d="M1264.1 1044.6 L1292.7 1035.7" stroke-width="1.2"/><path d="M1282.9 1040.9 L1302.5 1043.8" stroke-width="1.2"/></g><g fill="none" stroke="#f39a2e"><path d="M1066.3 850.2 L1097.8 821.4" stroke-width="1.3"/><circle cx="1082.2" cy="835.5" r="12.4" stroke-width="1.2" stroke-dasharray="3.2 3.3"/><circle cx="1082.2" cy="835.5" r="8.6" stroke-width="1.2" stroke-dasharray="3 3"/></g><circle cx="1082.2" cy="835.5" r="2.5" fill="#f39a1e"/></svg>
<div style="left:1179.0px;top:943.7px;width:13.6px;height:13.6px;background:rgba(232,226,52,0.95);border-radius:50%;"></div>
<svg style="left:1257.3px;top:1020.4000000000001px;" width="40" height="40" viewBox="0 0 40 40"><circle cx="20" cy="20" r="14.6" fill="none" stroke="#ffffff" stroke-width="1.5"/><circle cx="20" cy="20" r="14.6" fill="none" stroke="#ee1c24" stroke-width="1.5" stroke-dasharray="5.733 5.733" transform="rotate(-90 20 20)"/></svg>
<div style="left:1503.7px;top:175.9px;width:23.2px;height:23.2px;background:#6c3a44;border-radius:50%;box-shadow:inset 0 0 0 1.4px #b33a4e;"></div>
<svg style="left:1551.6px;top:180.2px;" width="33.8" height="15.5" viewBox="0 0 33.8 15.5"><path d="M4.00 11.50 L29.80 4.00" stroke="#73b511" stroke-width="2.2" fill="none" /></svg>
<div style="left:1569.8px;top:172.6px;width:23.2px;height:23.2px;background:#5f9417;border-radius:50%;"></div>
<div class="t" style="left:1566.40px;top:172.70px;width:30px;text-align:center;color:#1b3303;font-size:16px;-webkit-text-stroke:0.45px #1b3303;">Y</div>
<svg style="left:1551.6px;top:187.7px;" width="48.8" height="12.7" viewBox="0 0 48.8 12.7"><path d="M4.00 4.00 L44.80 8.70" stroke="#d9374f" stroke-width="2.2" fill="none" /></svg>
<svg style="left:1551.6px;top:140.7px;" width="8.0" height="55.0" viewBox="0 0 8.0 55.0"><path d="M4.00 51.00 L4.00 4.00" stroke="#2e8cf3" stroke-width="2.2" fill="none" /></svg>
<div style="left:1518.3px;top:186.9px;width:24px;height:24px;background:#526a2e;border-radius:50%;box-shadow:inset 0 0 0 1.6px #8ad80a;"></div>
<div style="left:1544.0px;top:227.6px;width:23.2px;height:23.2px;background:#3b5578;border-radius:50%;box-shadow:inset 0 0 0 1.4px #2e8cf3;"></div>
<div style="left:1584.2px;top:184.2px;width:24.4px;height:24.4px;background:#ec3553;border-radius:50%;"></div>
<div class="t" style="left:1581.40px;top:184.90px;width:30px;text-align:center;color:#3c0a14;font-size:16px;-webkit-text-stroke:0.45px #3c0a14;">X</div>
<div style="left:1543.6px;top:132.7px;width:24px;height:24px;background:#2e8cf3;border-radius:50%;"></div>
<div class="t" style="left:1540.60px;top:133.20px;width:30px;text-align:center;color:#0a2a4f;font-size:16px;-webkit-text-stroke:0.45px #0a2a4f;">Z</div>
<div style="left:1576.4px;top:253.1px;width:41.2px;height:41.2px;background:rgba(38,38,38,0.75);border-radius:50%;"></div>
<svg style="left:1584.0px;top:260.7px;" width="26" height="26" viewBox="0 0 20 20"><circle cx="12.2" cy="8.2" r="7.5" fill="#d9d9d9"/><path d="M6.8 13.6 L1.8 18" stroke="#d9d9d9" stroke-width="2.6" stroke-linecap="round"/><path d="M8.6 8.2 H15.8 M12.2 4.6 V11.8" stroke="#2a2a2a" stroke-width="1.15"/></svg>
<div style="left:1576.4px;top:298.09999999999997px;width:41.2px;height:41.2px;background:rgba(38,38,38,0.75);border-radius:50%;"></div>
<svg style="left:1584.0px;top:305.7px;" width="26" height="26" viewBox="0 0 20 20"><g stroke="#d9d9d9" stroke-width="2.3" stroke-linecap="round" fill="none"><path d="M6.6 11 L5.4 4.6"/><path d="M9.6 10 L9.4 2.6"/><path d="M12.6 10.4 L13.4 3.2"/><path d="M15.2 12 L16.8 6.2"/><path d="M6 14.4 L2.4 10.8"/></g>
<path d="M5.4 9.6 L15.8 9.6 L16 13 C15.4 16.6 13 18.6 10.4 18.6 C7.6 18.6 5.6 16.8 3.6 13.2 Z" fill="#d9d9d9"/></svg>
<div style="left:1576.4px;top:343.29999999999995px;width:41.2px;height:41.2px;background:rgba(38,38,38,0.75);border-radius:50%;"></div>
<svg style="left:1584.0px;top:350.9px;" width="26" height="26" viewBox="0 0 20 20"><g fill="none" stroke="#d9d9d9" stroke-width="1.5" stroke-linejoin="round"><path d="M2.4 6.4 A3.4 3.4 0 0 1 8.6 4.6 A4.6 4.6 0 1 1 13 10.6 H5.2 A3.4 3.4 0 0 1 2.4 6.4 Z"/><circle cx="13.6" cy="5.8" r="1.3" stroke-width="1.2"/><rect x="5.6" y="12.4" width="7.6" height="5.8" rx="0.8"/><path d="M19 12.8 L15.4 15.2 L19 17.6 Z" stroke-width="1.2"/><path d="M3.4 13.6 V16.6 M3.4 15.2 H5.2" stroke-width="1.2"/></g></svg>
<div style="left:1576.4px;top:388.2px;width:41.2px;height:41.2px;background:rgba(38,38,38,0.75);border-radius:50%;"></div>
<svg style="left:1583.5px;top:395.3px;" width="27" height="27" viewBox="0 0 20 20"><g fill="none" stroke="#d9d9d9" stroke-width="1.4" stroke-linejoin="round"><path d="M5 2 H15 L18.6 18 H1.4 Z"/><path d="M8.4 2 L7 18 M11.6 2 L13 18 M3.9 7 H16.1 M2.7 12.2 H17.3"/></g></svg>
<div style="left:1619.5px;top:139.3px;width:12px;height:19.6px;background:rgba(80,80,80,0.55);border-radius:5px 0 0 5px;"></div>
<svg style="left:1620px;top:141px;" width="10" height="16" viewBox="0 0 10 16"><path d="M7.5 2.5 L2.5 8 L7.5 13.5" fill="none" stroke="#a0a0a0" stroke-width="1.5"/></svg>
<div style="left:908px;top:139.3px;width:13px;height:19.6px;background:rgba(80,80,80,0.55);border-radius:0 5px 5px 0;"></div>
<svg style="left:910.5px;top:141px;" width="10" height="16" viewBox="0 0 10 16"><path d="M2.5 2.5 L7.5 8 L2.5 13.5" fill="none" stroke="#a0a0a0" stroke-width="1.5"/></svg>
</div></div>
<div style="left:-8px;top:42px;width:916px;height:988px;overflow:hidden;border-radius:6px;"><div style="left:8px;top:-42px;width:0;height:0;">
<div style="left:-20px;top:42px;width:1300px;height:38.5px;background:rgba(46,46,46,0.66);"></div>
<div style="left:-320.2px;top:47px;width:45px;height:27.5px;background:#282828;border-radius:5px;box-shadow:0 0 0 1px rgba(255,255,255,0.085);"></div>
<svg style="left:-313.0px;top:49.2px;" width="23" height="23" viewBox="0 0 20 20"><g fill="none" stroke="#e6e6e6" stroke-width="1.3" stroke-linecap="round"><path d="M1 10.6 H17 M2.6 15.2 H19"/><path d="M7 6.4 L3.6 19.4 M14.6 10.6 L16.4 19.4"/></g><circle cx="13" cy="5.6" r="4.6" fill="#e6e6e6"/><path d="M10.6 4.6 A2.6 2.6 0 0 1 12.6 2.6" stroke="#282828" stroke-width="1" fill="none"/></svg>
<svg style="left:-292.4px;top:54.2px;" width="16" height="16" viewBox="0 0 16 16"><path d="M3.5999999999999996 5.8 L8 10.2 L12.4 5.8" fill="none" stroke="#e6e6e6" stroke-width="1.55" stroke-linecap="round" stroke-linejoin="round"/></svg>
<div style="left:-267.4px;top:47px;width:163px;height:27.5px;background:#282828;border-radius:5px;box-shadow:0 0 0 1px rgba(255,255,255,0.085);"></div>
<svg style="left:-260.8px;top:49.7px;" width="22" height="22" viewBox="0 0 20 20"><rect x="5" y="5" width="10" height="10" fill="#e6e6e6"/><g fill="none" stroke="#e6e6e6" stroke-width="1.4" stroke-linecap="round" stroke-linejoin="round"><path d="M1.2 5.4 V1.2 H5.4 M14.6 1.2 H18.8 V5.4 M18.8 14.6 V18.8 H14.6 M5.4 18.8 H1.2 V14.6"/></g></svg>
<div class="t" style="left:-228.8px;top:48.90px;color:#e6e6e6;font-size:17px;letter-spacing:0.193px;">Object Mode</div>
<svg style="left:-122.1px;top:54.2px;" width="16" height="16" viewBox="0 0 16 16"><path d="M3.5999999999999996 5.8 L8 10.2 L12.4 5.8" fill="none" stroke="#e6e6e6" stroke-width="1.55" stroke-linecap="round" stroke-linejoin="round"/></svg>
<div style="left:-96.8px;top:47px;width:59.0px;height:27.5px;background:rgba(40,40,40,0.35);border-radius:5px;"></div>
<div class="t" style="left:-86.3px;top:48.90px;color:#e6e6e6;font-size:17px;letter-spacing:0.487px;">View</div>
<div style="left:-35.7px;top:47px;width:70.09999999999997px;height:27.5px;background:rgba(40,40,40,0.35);border-radius:5px;"></div>
<div class="t" style="left:-25.2px;top:48.90px;color:#e6e6e6;font-size:17px;letter-spacing:0.371px;">Select</div>
<div style="left:35.2px;top:47px;width:52.5px;height:27.5px;background:rgba(40,40,40,0.35);border-radius:5px;"></div>
<div class="t" style="left:45.7px;top:48.90px;color:#e6e6e6;font-size:17px;letter-spacing:0.627px;">Add</div>
<div style="left:89.3px;top:47px;width:72.0px;height:27.5px;background:rgba(40,40,40,0.35);border-radius:5px;"></div>
<div class="t" style="left:99.8px;top:48.90px;color:#e6e6e6;font-size:17px;letter-spacing:0.374px;">Object</div>
<div style="left:184.5px;top:47px;width:114px;height:27.5px;background:#282828;border-radius:5px;box-shadow:0 0 0 1px rgba(255,255,255,0.085);"></div>
<svg style="left:191.0px;top:49.7px;" width="22" height="22" viewBox="0 0 20 20"><g fill="none" stroke="#e6e6e6" stroke-width="1.4" stroke-linecap="round" stroke-linejoin="round">
<path d="M4.2 14 V1.6 M1.6 4.2 L4.2 1.4 L6.8 4.2"/><path d="M6 15.8 H18.4 M15.8 13.2 L18.6 15.8 L15.8 18.4"/><circle cx="4.2" cy="15.8" r="1.8"/></g>
<g fill="none" stroke="#9a9a9a" stroke-width="1.3" stroke-linecap="round" stroke-linejoin="round"><path d="M5.6 14.4 L13.6 6.2 M10 6 H13.8 V9.8"/></g></svg>
<div class="t" style="left:223.2px;top:48.90px;color:#e6e6e6;font-size:17px;letter-spacing:0.153px;">Global</div>
<svg style="left:281.2px;top:54.2px;" width="16" height="16" viewBox="0 0 16 16"><path d="M3.5999999999999996 5.8 L8 10.2 L12.4 5.8" fill="none" stroke="#e6e6e6" stroke-width="1.55" stroke-linecap="round" stroke-linejoin="round"/></svg>
<div style="left:306.7px;top:47px;width:44.5px;height:27.5px;background:#282828;border-radius:5px;box-shadow:0 0 0 1px rgba(255,255,255,0.085);"></div>
<svg style="left:312.25px;top:50.05px;" width="22.5" height="22.5" viewBox="0 0 20 20"><g fill="none" stroke="#e6e6e6" stroke-width="1.55"><circle cx="12.9" cy="7.3" r="5.9"/><circle cx="7.6" cy="13.3" r="5.6"/></g><circle cx="11" cy="8.6" r="1.8" fill="#e6e6e6"/></svg>
<svg style="left:333px;top:54.2px;" width="16" height="16" viewBox="0 0 16 16"><path d="M3.5999999999999996 5.8 L8 10.2 L12.4 5.8" fill="none" stroke="#e6e6e6" stroke-width="1.55" stroke-linecap="round" stroke-linejoin="round"/></svg>
<div style="left:360px;top:47px;width:73.2px;height:27.5px;background:#282828;border-radius:5px;box-shadow:0 0 0 1px rgba(255,255,255,0.085);"></div>
<div style="left:360px;top:47px;width:27.4px;height:27.5px;background:#545454;border-radius:5px 0 0 5px;"></div>
<svg style="left:362.7px;top:49.7px;" width="22" height="22" viewBox="0 0 20 20"><g fill="none" stroke="#9a9a9a" stroke-width="1.4" stroke-linejoin="round"><path d="M2 6.2 L4.6 3.6 A7.4 7.4 0 0 1 15.4 14.2 L11.6 18 L8.8 15.2 L12.4 11.6 A3.4 3.4 0 0 0 7.6 6.6 L4.8 9 Z"/></g></svg>
<div style="left:393.4px;top:51.5px;width:18.2px;height:18.4px;background:#e6e6e6;"></div>
<svg style="left:416.2px;top:54.2px;" width="16" height="16" viewBox="0 0 16 16"><path d="M3.5999999999999996 5.8 L8 10.2 L12.4 5.8" fill="none" stroke="#e6e6e6" stroke-width="1.55" stroke-linecap="round" stroke-linejoin="round"/></svg>
<div style="left:442px;top:47px;width:73.2px;height:27.5px;background:#282828;border-radius:5px;box-shadow:0 0 0 1px rgba(255,255,255,0.085);"></div>
<div style="left:442px;top:47px;width:27.4px;height:27.5px;background:#545454;border-radius:5px 0 0 5px;"></div>
<svg style="left:444.7px;top:49.7px;" width="22" height="22" viewBox="0 0 20 20"><circle cx="10" cy="10" r="8.4" fill="none" stroke="#b0b0b0" stroke-width="1.3"/><circle cx="10" cy="10" r="2.6" fill="#e6e6e6"/></svg>
<svg style="left:475.0px;top:49.7px;" width="22" height="22" viewBox="0 0 20 20"><path d="M1.5 16.5 C6.5 16.5 7 3.5 10 3.5 C13 3.5 13.5 16.5 18.5 16.5" fill="none" stroke="#666666" stroke-width="1.4" stroke-linecap="round"/></svg>
<svg style="left:497.5px;top:54.2px;" width="16" height="16" viewBox="0 0 16 16"><path d="M3.5999999999999996 5.8 L8 10.2 L12.4 5.8" fill="none" stroke="#5a5a5a" stroke-width="1.55" stroke-linecap="round" stroke-linejoin="round"/></svg>
<div style="left:538.8px;top:47px;width:44.8px;height:27.5px;background:#282828;border-radius:5px;box-shadow:0 0 0 1px rgba(255,255,255,0.085);"></div>
<svg style="left:541.3px;top:49.7px;" width="22" height="22" viewBox="0 0 20 20"><path d="M4.8 5.6 C7.2 2 10.2 0.6 12.6 0.6 C15.2 0.6 18 2.2 19.9 5.6 C18 9 15.2 10.4 12.6 10.4 C10.2 10.4 7.2 9.2 4.8 5.6Z" fill="#e6e6e6"/>
<circle cx="12.6" cy="5.2" r="3.3" fill="#282828"/><circle cx="12.6" cy="5.2" r="2" fill="#e6e6e6"/>
<path d="M0.2 8.2 L11.2 12.4 L6.8 14.4 L5 19.6 Z" fill="#e6e6e6" stroke="#282828" stroke-width="0.9"/></svg>
<svg style="left:566.2px;top:54.2px;" width="16" height="16" viewBox="0 0 16 16"><path d="M3.5999999999999996 5.8 L8 10.2 L12.4 5.8" fill="none" stroke="#e6e6e6" stroke-width="1.55" stroke-linecap="round" stroke-linejoin="round"/></svg>
<div style="left:592px;top:47px;width:56.3px;height:27.5px;background:#282828;border-radius:5px;box-shadow:0 0 0 1px rgba(255,255,255,0.085);"></div>
<div style="left:592px;top:47px;width:27px;height:27.5px;background:#4772b3;border-radius:5px 0 0 5px;"></div>
<svg style="left:594.5px;top:49.7px;" width="22" height="22" viewBox="0 0 20 20"><g fill="none" stroke="#ffffff" stroke-width="1.5" stroke-linecap="round" stroke-linejoin="round"><path d="M2 5.8 C10 4.4 15.4 9.6 15.8 18"/><path d="M5.4 14.8 L17.6 2.4 M12.2 2.2 H17.8 V7.8"/><circle cx="4" cy="16.2" r="2.1" fill="#4772b3"/></g></svg>
<svg style="left:625.6px;top:54.2px;" width="16" height="16" viewBox="0 0 16 16"><path d="M3.5999999999999996 5.8 L8 10.2 L12.4 5.8" fill="none" stroke="#e6e6e6" stroke-width="1.55" stroke-linecap="round" stroke-linejoin="round"/></svg>
<div style="left:656.7px;top:47px;width:56.1px;height:27.5px;background:#282828;border-radius:5px;box-shadow:0 0 0 1px rgba(255,255,255,0.085);"></div>
<div style="left:656.7px;top:47px;width:27.4px;height:27.5px;background:#545454;border-radius:5px 0 0 5px;"></div>
<svg style="left:659.4px;top:49.7px;" width="22" height="22" viewBox="0 0 20 20"><circle cx="12.4" cy="7.6" r="6.4" fill="#e0e0e0"/><circle cx="7.8" cy="12.4" r="5.6" fill="none" stroke="#e0e0e0" stroke-width="1.5"/><path d="M7.4 6.6 A5.8 5.8 0 0 1 13.6 12.8" fill="none" stroke="#545454" stroke-width="1.5" stroke-dasharray="2.2 1.6"/></svg>
<svg style="left:690.3px;top:54.2px;" width="16" height="16" viewBox="0 0 16 16"><path d="M3.5999999999999996 5.8 L8 10.2 L12.4 5.8" fill="none" stroke="#5a5a5a" stroke-width="1.55" stroke-linecap="round" stroke-linejoin="round"/></svg>
<div style="left:722px;top:47px;width:27.4px;height:27.5px;background:#545454;border-radius:5px;"></div>
<svg style="left:724.2px;top:49.2px;" width="23" height="23" viewBox="0 0 20 20"><g fill="none" stroke="#e0e0e0" stroke-width="1.4" stroke-linejoin="round"><path d="M6.4 5 V1.8 H18.2 V13.6 H15"/><rect x="1.8" y="5.6" width="12.8" height="12.6" fill="#545454"/><path d="M6 9.6 V14 H10.6" stroke-dasharray="2.2 1.4" stroke-width="1.3"/></g></svg>
<div style="left:757.8px;top:47px;width:140.5px;height:27.5px;background:#282828;border-radius:5px;box-shadow:0 0 0 1px rgba(255,255,255,0.085);"></div>
<div style="left:757.8px;top:47px;width:111.5px;height:27.5px;background:#545454;border-radius:5px 0 0 5px;"></div>
<div style="left:785.67px;top:47px;width:27.87px;height:27.5px;background:#4772b3;"></div>
<div style="left:785.17px;top:47px;width:1px;height:27.5px;background:rgba(40,40,40,0.5);"></div>
<div style="left:813.04px;top:47px;width:1px;height:27.5px;background:rgba(40,40,40,0.5);"></div>
<div style="left:840.91px;top:47px;width:1px;height:27.5px;background:rgba(40,40,40,0.5);"></div>
<svg style="left:760.73px;top:49.7px;" width="22" height="22" viewBox="0 0 20 20"><g fill="none" stroke="#c4c4c4" stroke-width="1.15"><circle cx="10" cy="10" r="8.8"/><path d="M10 1.2 C6.6 4 6.6 16 10 18.8"/><path d="M1.6 7.4 H18.4 M1.6 12.6 H18.4"/></g></svg>
<svg style="left:788.61px;top:49.7px;" width="22" height="22" viewBox="0 0 20 20"><circle cx="10" cy="10" r="8.6" fill="#dbe4f5" stroke="#ffffff" stroke-width="1.3"/></svg>
<svg style="left:816.47px;top:49.7px;" width="22" height="22" viewBox="0 0 20 20"><circle cx="10" cy="10" r="8.8" fill="none" stroke="#c4c4c4" stroke-width="1.2"/><path d="M10 2.2 A7.8 7.8 0 0 0 3.4 14.2 C6.6 14.6 9.4 13 10 10 Z" fill="#c4c4c4" opacity="0.85"/>
<path d="M3.4 14.2 C6 17.6 11 18.6 14.6 16" fill="none" stroke="#c4c4c4" stroke-width="1"/><path d="M10.4 17.8 L13.2 14.8 M13.2 17.2 L15.8 14.4 M15.6 15.8 L17.4 13.6" stroke="#c4c4c4" stroke-width="1.1" fill="none"/></svg>
<svg style="left:844.35px;top:49.7px;" width="22" height="22" viewBox="0 0 20 20"><circle cx="10" cy="10" r="8.8" fill="none" stroke="#c4c4c4" stroke-width="1.2"/><path d="M4.4 8.6 A6 6 0 0 1 8.8 4.2" fill="none" stroke="#c4c4c4" stroke-width="2.1" stroke-linecap="round"/>
<path d="M8.2 17.6 L10.4 15.4 M10.8 17.8 L13.4 15 M13.4 16.8 L16 14 M15.6 14.8 L17.6 12.4 M17 12.4 L18 11" stroke="#c4c4c4" stroke-width="1.1" fill="none"/></svg>
<svg style="left:875.6px;top:54.2px;" width="16" height="16" viewBox="0 0 16 16"><path d="M3.5999999999999996 5.8 L8 10.2 L12.4 5.8" fill="none" stroke="#e6e6e6" stroke-width="1.55" stroke-linecap="round" stroke-linejoin="round"/></svg>
<div style="left:-10px;top:80.5px;width:219px;height:36.5px;background:rgba(46,46,46,0.66);border-radius:0 0 6px 0;"></div>
<svg style="left:16.2px;top:84.8px;" width="28" height="28" viewBox="0 0 20 20"><rect x="0.8" y="0.8" width="18.4" height="18.4" fill="none" stroke="#f0a020" stroke-width="1.1" stroke-dasharray="3.1 1.6" rx="0.5"/>
<path d="M6.4 4.8 L14 11 L9.8 11.6 L7.4 15.2 Z" fill="#e8e8e8"/></svg>
<div style="left:58px;top:85.0px;width:139px;height:27px;background:#545454;border-radius:5px;"></div>
<div style="left:58px;top:85.0px;width:27.8px;height:27px;background:#4772b3;border-radius:5px 0 0 5px;"></div>
<svg style="left:59.65px;top:86.25px;" width="24.5" height="24.5" viewBox="0 0 20 20"><rect x="2" y="2" width="16" height="16" fill="none" stroke="#ffffff" stroke-width="1.5" stroke-dasharray="2.6 2.2" stroke-dashoffset="1.3"/></svg>
<div style="left:85.3px;top:85.0px;width:1px;height:27px;background:rgba(50,50,50,0.55);"></div>
<svg style="left:87.45px;top:86.25px;" width="24.5" height="24.5" viewBox="0 0 20 20"><path d="M7 1.8 H18.2 V13 H13 V18.2 H1.8 V7 H7 Z" fill="#c8c8c8"/></svg>
<div style="left:113.1px;top:85.0px;width:1px;height:27px;background:rgba(50,50,50,0.55);"></div>
<svg style="left:115.25px;top:86.25px;" width="24.5" height="24.5" viewBox="0 0 20 20"><path d="M7 1.8 H18.2 V13 H13 V7 H7 Z" fill="#c8c8c8"/><path d="M6 7.6 H2.4 V17.6 H12.4 V14" fill="none" stroke="#c8c8c8" stroke-width="1.2" stroke-dasharray="2.2 1.8"/></svg>
<div style="left:140.9px;top:85.0px;width:1px;height:27px;background:rgba(50,50,50,0.55);"></div>
<svg style="left:143.05px;top:86.25px;" width="24.5" height="24.5" viewBox="0 0 20 20"><path d="M7 1.8 H18.2 V13 H13 V18.2 H1.8 V7 H7 Z" fill="#c8c8c8"/><rect x="7" y="7" width="6" height="6" fill="#545454"/></svg>
<div style="left:168.7px;top:85.0px;width:1px;height:27px;background:rgba(50,50,50,0.55);"></div>
<svg style="left:170.85px;top:86.25px;" width="24.5" height="24.5" viewBox="0 0 20 20"><rect x="6" y="6" width="8" height="8" fill="#c8c8c8"/><rect x="2.2" y="2.2" width="15.6" height="15.6" fill="none" stroke="#c8c8c8" stroke-width="1.3" stroke-dasharray="2.6 2.2" stroke-dashoffset="1.3"/></svg>
<div style="left:788px;top:80.5px;width:130px;height:36.5px;background:rgba(46,46,46,0.66);border-radius:0 0 0 6px;"></div>
<div style="left:800.3px;top:85.2px;width:97px;height:27.8px;background:#282828;border-radius:5px;box-shadow:inset 0 0 0 1px rgba(255,255,255,0.1);"></div>
<div class="t" style="left:812px;top:87.40px;color:#e6e6e6;font-size:17px;letter-spacing:0.103px;">Options</div>
<svg style="left:880.2px;top:92.0px;" width="16" height="16" viewBox="0 0 16 16"><path d="M3.5999999999999996 5.8 L8 10.2 L12.4 5.8" fill="none" stroke="#e6e6e6" stroke-width="1.55" stroke-linecap="round" stroke-linejoin="round"/></svg>
</div></div>
<div style="left:911px;top:42px;width:720px;height:1941px;overflow:hidden;border-radius:6px;"><div style="left:-911px;top:-42px;width:0;height:0;">
<div style="left:375px;top:42px;width:1300px;height:38.5px;background:rgba(46,46,46,0.66);"></div>
<div style="left:402.8px;top:47px;width:45px;height:27.5px;background:#282828;border-radius:5px;box-shadow:0 0 0 1px rgba(255,255,255,0.085);"></div>
<svg style="left:410.0px;top:49.2px;" width="23" height="23" viewBox="0 0 20 20"><g fill="none" stroke="#e6e6e6" stroke-width="1.3" stroke-linecap="round"><path d="M1 10.6 H17 M2.6 15.2 H19"/><path d="M7 6.4 L3.6 19.4 M14.6 10.6 L16.4 19.4"/></g><circle cx="13" cy="5.6" r="4.6" fill="#e6e6e6"/><path d="M10.6 4.6 A2.6 2.6 0 0 1 12.6 2.6" stroke="#282828" stroke-width="1" fill="none"/></svg>
<svg style="left:430.6px;top:54.2px;" width="16" height="16" viewBox="0 0 16 16"><path d="M3.5999999999999996 5.8 L8 10.2 L12.4 5.8" fill="none" stroke="#e6e6e6" stroke-width="1.55" stroke-linecap="round" stroke-linejoin="round"/></svg>
<div style="left:455.6px;top:47px;width:163px;height:27.5px;background:#282828;border-radius:5px;box-shadow:0 0 0 1px rgba(255,255,255,0.085);"></div>
<svg style="left:462.2px;top:49.7px;" width="22" height="22" viewBox="0 0 20 20"><rect x="5" y="5" width="10" height="10" fill="#e6e6e6"/><g fill="none" stroke="#e6e6e6" stroke-width="1.4" stroke-linecap="round" stroke-linejoin="round"><path d="M1.2 5.4 V1.2 H5.4 M14.6 1.2 H18.8 V5.4 M18.8 14.6 V18.8 H14.6 M5.4 18.8 H1.2 V14.6"/></g></svg>
<div class="t" style="left:494.2px;top:48.90px;color:#e6e6e6;font-size:17px;letter-spacing:0.193px;">Object Mode</div>
<svg style="left:600.9px;top:54.2px;" width="16" height="16" viewBox="0 0 16 16"><path d="M3.5999999999999996 5.8 L8 10.2 L12.4 5.8" fill="none" stroke="#e6e6e6" stroke-width="1.55" stroke-linecap="round" stroke-linejoin="round"/></svg>
<div style="left:626.2px;top:47px;width:59.0px;height:27.5px;background:rgba(40,40,40,0.35);border-radius:5px;"></div>
<div class="t" style="left:636.7px;top:48.90px;color:#e6e6e6;font-size:17px;letter-spacing:0.487px;">View</div>
<div style="left:687.3px;top:47px;width:70.09999999999997px;height:27.5px;background:rgba(40,40,40,0.35);border-radius:5px;"></div>
<div class="t" style="left:697.8px;top:48.90px;color:#e6e6e6;font-size:17px;letter-spacing:0.371px;">Select</div>
<div style="left:758.2px;top:47px;width:52.5px;height:27.5px;background:rgba(40,40,40,0.35);border-radius:5px;"></div>
<div class="t" style="left:768.7px;top:48.90px;color:#e6e6e6;font-size:17px;letter-spacing:0.627px;">Add</div>
<div style="left:812.3px;top:47px;width:72.0px;height:27.5px;background:rgba(40,40,40,0.35);border-radius:5px;"></div>
<div class="t" style="left:822.8px;top:48.90px;color:#e6e6e6;font-size:17px;letter-spacing:0.374px;">Object</div>
<div style="left:907.5px;top:47px;width:114px;height:27.5px;background:#282828;border-radius:5px;box-shadow:0 0 0 1px rgba(255,255,255,0.085);"></div>
<svg style="left:914.0px;top:49.7px;" width="22" height="22" viewBox="0 0 20 20"><g fill="none" stroke="#e6e6e6" stroke-width="1.4" stroke-linecap="round" stroke-linejoin="round">
<path d="M4.2 14 V1.6 M1.6 4.2 L4.2 1.4 L6.8 4.2"/><path d="M6 15.8 H18.4 M15.8 13.2 L18.6 15.8 L15.8 18.4"/><circle cx="4.2" cy="15.8" r="1.8"/></g>
<g fill="none" stroke="#9a9a9a" stroke-width="1.3" stroke-linecap="round" stroke-linejoin="round"><path d="M5.6 14.4 L13.6 6.2 M10 6 H13.8 V9.8"/></g></svg>
<div class="t" style="left:946.2px;top:48.90px;color:#e6e6e6;font-size:17px;letter-spacing:0.153px;">Global</div>
<svg style="left:1004.2px;top:54.2px;" width="16" height="16" viewBox="0 0 16 16"><path d="M3.5999999999999996 5.8 L8 10.2 L12.4 5.8" fill="none" stroke="#e6e6e6" stroke-width="1.55" stroke-linecap="round" stroke-linejoin="round"/></svg>
<div style="left:1029.7px;top:47px;width:44.5px;height:27.5px;background:#282828;border-radius:5px;box-shadow:0 0 0 1px rgba(255,255,255,0.085);"></div>
<svg style="left:1035.25px;top:50.05px;" width="22.5" height="22.5" viewBox="0 0 20 20"><g fill="none" stroke="#e6e6e6" stroke-width="1.55"><circle cx="12.9" cy="7.3" r="5.9"/><circle cx="7.6" cy="13.3" r="5.6"/></g><circle cx="11" cy="8.6" r="1.8" fill="#e6e6e6"/></svg>
<svg style="left:1056px;top:54.2px;" width="16" height="16" viewBox="0 0 16 16"><path d="M3.5999999999999996 5.8 L8 10.2 L12.4 5.8" fill="none" stroke="#e6e6e6" stroke-width="1.55" stroke-linecap="round" stroke-linejoin="round"/></svg>
<div style="left:1083px;top:47px;width:73.2px;height:27.5px;background:#282828;border-radius:5px;box-shadow:0 0 0 1px rgba(255,255,255,0.085);"></div>
<div style="left:1083px;top:47px;width:27.4px;height:27.5px;background:#545454;border-radius:5px 0 0 5px;"></div>
<svg style="left:1085.7px;top:49.7px;" width="22" height="22" viewBox="0 0 20 20"><g fill="none" stroke="#9a9a9a" stroke-width="1.4" stroke-linejoin="round"><path d="M2 6.2 L4.6 3.6 A7.4 7.4 0 0 1 15.4 14.2 L11.6 18 L8.8 15.2 L12.4 11.6 A3.4 3.4 0 0 0 7.6 6.6 L4.8 9 Z"/></g></svg>
<div style="left:1116.4px;top:51.5px;width:18.2px;height:18.4px;background:#e6e6e6;"></div>
<svg style="left:1139.2px;top:54.2px;" width="16" height="16" viewBox="0 0 16 16"><path d="M3.5999999999999996 5.8 L8 10.2 L12.4 5.8" fill="none" stroke="#e6e6e6" stroke-width="1.55" stroke-linecap="round" stroke-linejoin="round"/></svg>
<div style="left:1165px;top:47px;width:73.2px;height:27.5px;background:#282828;border-radius:5px;box-shadow:0 0 0 1px rgba(255,255,255,0.085);"></div>
<div style="left:1165px;top:47px;width:27.4px;height:27.5px;background:#545454;border-radius:5px 0 0 5px;"></div>
<svg style="left:1167.7px;top:49.7px;" width="22" height="22" viewBox="0 0 20 20"><circle cx="10" cy="10" r="8.4" fill="none" stroke="#b0b0b0" stroke-width="1.3"/><circle cx="10" cy="10" r="2.6" fill="#e6e6e6"/></svg>
<svg style="left:1198.0px;top:49.7px;" width="22" height="22" viewBox="0 0 20 20"><path d="M1.5 16.5 C6.5 16.5 7 3.5 10 3.5 C13 3.5 13.5 16.5 18.5 16.5" fill="none" stroke="#666666" stroke-width="1.4" stroke-linecap="round"/></svg>
<svg style="left:1220.5px;top:54.2px;" width="16" height="16" viewBox="0 0 16 16"><path d="M3.5999999999999996 5.8 L8 10.2 L12.4 5.8" fill="none" stroke="#5a5a5a" stroke-width="1.55" stroke-linecap="round" stroke-linejoin="round"/></svg>
<div style="left:1261.8px;top:47px;width:44.8px;height:27.5px;background:#282828;border-radius:5px;box-shadow:0 0 0 1px rgba(255,255,255,0.085);"></div>
<svg style="left:1264.3px;top:49.7px;" width="22" height="22" viewBox="0 0 20 20"><path d="M4.8 5.6 C7.2 2 10.2 0.6 12.6 0.6 C15.2 0.6 18 2.2 19.9 5.6 C18 9 15.2 10.4 12.6 10.4 C10.2 10.4 7.2 9.2 4.8 5.6Z" fill="#e6e6e6"/>
<circle cx="12.6" cy="5.2" r="3.3" fill="#282828"/><circle cx="12.6" cy="5.2" r="2" fill="#e6e6e6"/>
<path d="M0.2 8.2 L11.2 12.4 L6.8 14.4 L5 19.6 Z" fill="#e6e6e6" stroke="#282828" stroke-width="0.9"/></svg>
<svg style="left:1289.2px;top:54.2px;" width="16" height="16" viewBox="0 0 16 16"><path d="M3.5999999999999996 5.8 L8 10.2 L12.4 5.8" fill="none" stroke="#e6e6e6" stroke-width="1.55" stroke-linecap="round" stroke-linejoin="round"/></svg>
<div style="left:1315px;top:47px;width:56.3px;height:27.5px;background:#282828;border-radius:5px;box-shadow:0 0 0 1px rgba(255,255,255,0.085);"></div>
<div style="left:1315px;top:47px;width:27px;height:27.5px;background:#4772b3;border-radius:5px 0 0 5px;"></div>
<svg style="left:1317.5px;top:49.7px;" width="22" height="22" viewBox="0 0 20 20"><g fill="none" stroke="#ffffff" stroke-width="1.5" stroke-linecap="round" stroke-linejoin="round"><path d="M2 5.8 C10 4.4 15.4 9.6 15.8 18"/><path d="M5.4 14.8 L17.6 2.4 M12.2 2.2 H17.8 V7.8"/><circle cx="4" cy="16.2" r="2.1" fill="#4772b3"/></g></svg>
<svg style="left:1348.6px;top:54.2px;" width="16" height="16" viewBox="0 0 16 16"><path d="M3.5999999999999996 5.8 L8 10.2 L12.4 5.8" fill="none" stroke="#e6e6e6" stroke-width="1.55" stroke-linecap="round" stroke-linejoin="round"/></svg>
<div style="left:1379.7px;top:47px;width:56.1px;height:27.5px;background:#282828;border-radius:5px;box-shadow:0 0 0 1px rgba(255,255,255,0.085);"></div>
<div style="left:1379.7px;top:47px;width:27.4px;height:27.5px;background:#4772b3;border-radius:5px 0 0 5px;"></div>
<svg style="left:1382.4px;top:49.7px;" width="22" height="22" viewBox="0 0 20 20"><circle cx="12.4" cy="7.6" r="6.4" fill="#ffffff"/><circle cx="7.8" cy="12.4" r="5.6" fill="none" stroke="#ffffff" stroke-width="1.5"/><path d="M7.4 6.6 A5.8 5.8 0 0 1 13.6 12.8" fill="none" stroke="#4772b3" stroke-width="1.5" stroke-dasharray="2.2 1.6"/></svg>
<svg style="left:1413.3px;top:54.2px;" width="16" height="16" viewBox="0 0 16 16"><path d="M3.5999999999999996 5.8 L8 10.2 L12.4 5.8" fill="none" stroke="#e6e6e6" stroke-width="1.55" stroke-linecap="round" stroke-linejoin="round"/></svg>
<div style="left:1445px;top:47px;width:27.4px;height:27.5px;background:#474747;border-radius:5px;"></div>
<svg style="left:1447.2px;top:49.2px;" width="23" height="23" viewBox="0 0 20 20"><g fill="none" stroke="#5c5c5c" stroke-width="1.4" stroke-linejoin="round"><path d="M6.4 5 V1.8 H18.2 V13.6 H15"/><rect x="1.8" y="5.6" width="12.8" height="12.6" fill="#474747"/><path d="M6 9.6 V14 H10.6" stroke-dasharray="2.2 1.4" stroke-width="1.3"/></g></svg>
<div style="left:1480.8px;top:47px;width:140.5px;height:27.5px;background:#282828;border-radius:5px;box-shadow:0 0 0 1px rgba(255,255,255,0.085);"></div>
<div style="left:1480.8px;top:47px;width:111.5px;height:27.5px;background:#545454;border-radius:5px 0 0 5px;"></div>
<div style="left:1564.41px;top:47px;width:27.87px;height:27.5px;background:#4772b3;"></div>
<div style="left:1508.17px;top:47px;width:1px;height:27.5px;background:rgba(40,40,40,0.5);"></div>
<div style="left:1536.04px;top:47px;width:1px;height:27.5px;background:rgba(40,40,40,0.5);"></div>
<div style="left:1563.91px;top:47px;width:1px;height:27.5px;background:rgba(40,40,40,0.5);"></div>
<svg style="left:1483.73px;top:49.7px;" width="22" height="22" viewBox="0 0 20 20"><g fill="none" stroke="#c4c4c4" stroke-width="1.15"><circle cx="10" cy="10" r="8.8"/><path d="M10 1.2 C6.6 4 6.6 16 10 18.8"/><path d="M1.6 7.4 H18.4 M1.6 12.6 H18.4"/></g></svg>
<svg style="left:1511.61px;top:49.7px;" width="22" height="22" viewBox="0 0 20 20"><circle cx="10" cy="10" r="8.6" fill="#a6a6a6" stroke="#c4c4c4" stroke-width="1.3"/></svg>
<svg style="left:1539.47px;top:49.7px;" width="22" height="22" viewBox="0 0 20 20"><circle cx="10" cy="10" r="8.8" fill="none" stroke="#c4c4c4" stroke-width="1.2"/><path d="M10 2.2 A7.8 7.8 0 0 0 3.4 14.2 C6.6 14.6 9.4 13 10 10 Z" fill="#c4c4c4" opacity="0.85"/>
<path d="M3.4 14.2 C6 17.6 11 18.6 14.6 16" fill="none" stroke="#c4c4c4" stroke-width="1"/><path d="M10.4 17.8 L13.2 14.8 M13.2 17.2 L15.8 14.4 M15.6 15.8 L17.4 13.6" stroke="#c4c4c4" stroke-width="1.1" fill="none"/></svg>
<svg style="left:1567.35px;top:49.7px;" width="22" height="22" viewBox="0 0 20 20"><circle cx="10" cy="10" r="8.8" fill="none" stroke="#ffffff" stroke-width="1.2"/><path d="M4.4 8.6 A6 6 0 0 1 8.8 4.2" fill="none" stroke="#ffffff" stroke-width="2.1" stroke-linecap="round"/>
<path d="M8.2 17.6 L10.4 15.4 M10.8 17.8 L13.4 15 M13.4 16.8 L16 14 M15.6 14.8 L17.6 12.4 M17 12.4 L18 11" stroke="#ffffff" stroke-width="1.1" fill="none"/></svg>
<svg style="left:1598.6px;top:54.2px;" width="16" height="16" viewBox="0 0 16 16"><path d="M3.5999999999999996 5.8 L8 10.2 L12.4 5.8" fill="none" stroke="#e6e6e6" stroke-width="1.55" stroke-linecap="round" stroke-linejoin="round"/></svg>
<div style="left:901px;top:80.5px;width:223px;height:36.5px;background:rgba(46,46,46,0.66);border-radius:0 0 6px 0;"></div>
<svg style="left:931.3px;top:84.8px;" width="28" height="28" viewBox="0 0 20 20"><rect x="0.8" y="0.8" width="18.4" height="18.4" fill="none" stroke="#f0a020" stroke-width="1.1" stroke-dasharray="3.1 1.6" rx="0.5"/>
<path d="M6.4 4.8 L14 11 L9.8 11.6 L7.4 15.2 Z" fill="#e8e8e8"/></svg>
<div style="left:973px;top:85.0px;width:139px;height:27px;background:#545454;border-radius:5px;"></div>
<div style="left:973px;top:85.0px;width:27.8px;height:27px;background:#4772b3;border-radius:5px 0 0 5px;"></div>
<svg style="left:974.65px;top:86.25px;" width="24.5" height="24.5" viewBox="0 0 20 20"><rect x="2" y="2" width="16" height="16" fill="none" stroke="#ffffff" stroke-width="1.5" stroke-dasharray="2.6 2.2" stroke-dashoffset="1.3"/></svg>
<div style="left:1000.3px;top:85.0px;width:1px;height:27px;background:rgba(50,50,50,0.55);"></div>
<svg style="left:1002.45px;top:86.25px;" width="24.5" height="24.5" viewBox="0 0 20 20"><path d="M7 1.8 H18.2 V13 H13 V18.2 H1.8 V7 H7 Z" fill="#c8c8c8"/></svg>
<div style="left:1028.1px;top:85.0px;width:1px;height:27px;background:rgba(50,50,50,0.55);"></div>
<svg style="left:1030.25px;top:86.25px;" width="24.5" height="24.5" viewBox="0 0 20 20"><path d="M7 1.8 H18.2 V13 H13 V7 H7 Z" fill="#c8c8c8"/><path d="M6 7.6 H2.4 V17.6 H12.4 V14" fill="none" stroke="#c8c8c8" stroke-width="1.2" stroke-dasharray="2.2 1.8"/></svg>
<div style="left:1055.9px;top:85.0px;width:1px;height:27px;background:rgba(50,50,50,0.55);"></div>
<svg style="left:1058.05px;top:86.25px;" width="24.5" height="24.5" viewBox="0 0 20 20"><path d="M7 1.8 H18.2 V13 H13 V18.2 H1.8 V7 H7 Z" fill="#c8c8c8"/><rect x="7" y="7" width="6" height="6" fill="#545454"/></svg>
<div style="left:1083.7px;top:85.0px;width:1px;height:27px;background:rgba(50,50,50,0.55);"></div>
<svg style="left:1085.85px;top:86.25px;" width="24.5" height="24.5" viewBox="0 0 20 20"><rect x="6" y="6" width="8" height="8" fill="#c8c8c8"/><rect x="2.2" y="2.2" width="15.6" height="15.6" fill="none" stroke="#c8c8c8" stroke-width="1.3" stroke-dasharray="2.6 2.2" stroke-dashoffset="1.3"/></svg>
<div style="left:1511px;top:80.5px;width:130px;height:36.5px;background:rgba(46,46,46,0.66);border-radius:0 0 0 6px;"></div>
<div style="left:1523.3px;top:85.2px;width:97px;height:27.8px;background:#282828;border-radius:5px;box-shadow:inset 0 0 0 1px rgba(255,255,255,0.1);"></div>
<div class="t" style="left:1535px;top:87.40px;color:#e6e6e6;font-size:17px;letter-spacing:0.103px;">Options</div>
<svg style="left:1603.2px;top:92.0px;" width="16" height="16" viewBox="0 0 16 16"><path d="M3.5999999999999996 5.8 L8 10.2 L12.4 5.8" fill="none" stroke="#e6e6e6" stroke-width="1.55" stroke-linecap="round" stroke-linejoin="round"/></svg>
</div></div>
<div style="left:-8px;top:1033px;width:916px;height:950px;overflow:hidden;border-radius:6px;"><div style="left:8px;top:-1033px;width:0;height:0;">
<div style="left:-20px;top:1033px;width:1300px;height:38.5px;background:rgba(46,46,46,0.66);"></div>
<div style="left:7.8px;top:1038px;width:45px;height:27.5px;background:#282828;border-radius:5px;box-shadow:0 0 0 1px rgba(255,255,255,0.085);"></div>
<svg style="left:15.0px;top:1040.2px;" width="23" height="23" viewBox="0 0 20 20"><g fill="none" stroke="#e6e6e6" stroke-width="1.3" stroke-linecap="round"><path d="M1 10.6 H17 M2.6 15.2 H19"/><path d="M7 6.4 L3.6 19.4 M14.6 10.6 L16.4 19.4"/></g><circle cx="13" cy="5.6" r="4.6" fill="#e6e6e6"/><path d="M10.6 4.6 A2.6 2.6 0 0 1 12.6 2.6" stroke="#282828" stroke-width="1" fill="none"/></svg>
<svg style="left:35.6px;top:1045.2px;" width="16" height="16" viewBox="0 0 16 16"><path d="M3.5999999999999996 5.8 L8 10.2 L12.4 5.8" fill="none" stroke="#e6e6e6" stroke-width="1.55" stroke-linecap="round" stroke-linejoin="round"/></svg>
<div style="left:60.6px;top:1038px;width:163px;height:27.5px;background:#282828;border-radius:5px;box-shadow:0 0 0 1px rgba(255,255,255,0.085);"></div>
<svg style="left:67.2px;top:1040.7px;" width="22" height="22" viewBox="0 0 20 20"><rect x="5" y="5" width="10" height="10" fill="#e6e6e6"/><g fill="none" stroke="#e6e6e6" stroke-width="1.4" stroke-linecap="round" stroke-linejoin="round"><path d="M1.2 5.4 V1.2 H5.4 M14.6 1.2 H18.8 V5.4 M18.8 14.6 V18.8 H14.6 M5.4 18.8 H1.2 V14.6"/></g></svg>
<div class="t" style="left:99.2px;top:1039.90px;color:#e6e6e6;font-size:17px;letter-spacing:0.193px;">Object Mode</div>
<svg style="left:205.9px;top:1045.2px;" width="16" height="16" viewBox="0 0 16 16"><path d="M3.5999999999999996 5.8 L8 10.2 L12.4 5.8" fill="none" stroke="#e6e6e6" stroke-width="1.55" stroke-linecap="round" stroke-linejoin="round"/></svg>
<div style="left:231.2px;top:1038px;width:59.0px;height:27.5px;background:rgba(40,40,40,0.35);border-radius:5px;"></div>
<div class="t" style="left:241.7px;top:1039.90px;color:#e6e6e6;font-size:17px;letter-spacing:0.487px;">View</div>
<div style="left:292.3px;top:1038px;width:70.09999999999997px;height:27.5px;background:rgba(40,40,40,0.35);border-radius:5px;"></div>
<div class="t" style="left:302.8px;top:1039.90px;color:#e6e6e6;font-size:17px;letter-spacing:0.371px;">Select</div>
<div style="left:363.2px;top:1038px;width:52.5px;height:27.5px;background:rgba(40,40,40,0.35);border-radius:5px;"></div>
<div class="t" style="left:373.7px;top:1039.90px;color:#e6e6e6;font-size:17px;letter-spacing:0.627px;">Add</div>
<div style="left:417.3px;top:1038px;width:72.0px;height:27.5px;background:rgba(40,40,40,0.35);border-radius:5px;"></div>
<div class="t" style="left:427.8px;top:1039.90px;color:#e6e6e6;font-size:17px;letter-spacing:0.374px;">Object</div>
<div style="left:512.5px;top:1038px;width:114px;height:27.5px;background:#282828;border-radius:5px;box-shadow:0 0 0 1px rgba(255,255,255,0.085);"></div>
<svg style="left:519.0px;top:1040.7px;" width="22" height="22" viewBox="0 0 20 20"><g fill="none" stroke="#e6e6e6" stroke-width="1.4" stroke-linecap="round" stroke-linejoin="round">
<path d="M4.2 14 V1.6 M1.6 4.2 L4.2 1.4 L6.8 4.2"/><path d="M6 15.8 H18.4 M15.8 13.2 L18.6 15.8 L15.8 18.4"/><circle cx="4.2" cy="15.8" r="1.8"/></g>
<g fill="none" stroke="#9a9a9a" stroke-width="1.3" stroke-linecap="round" stroke-linejoin="round"><path d="M5.6 14.4 L13.6 6.2 M10 6 H13.8 V9.8"/></g></svg>
<div class="t" style="left:551.2px;top:1039.90px;color:#e6e6e6;font-size:17px;letter-spacing:0.153px;">Global</div>
<svg style="left:609.2px;top:1045.2px;" width="16" height="16" viewBox="0 0 16 16"><path d="M3.5999999999999996 5.8 L8 10.2 L12.4 5.8" fill="none" stroke="#e6e6e6" stroke-width="1.55" stroke-linecap="round" stroke-linejoin="round"/></svg>
<div style="left:634.7px;top:1038px;width:44.5px;height:27.5px;background:#282828;border-radius:5px;box-shadow:0 0 0 1px rgba(255,255,255,0.085);"></div>
<svg style="left:640.25px;top:1041.05px;" width="22.5" height="22.5" viewBox="0 0 20 20"><g fill="none" stroke="#e6e6e6" stroke-width="1.55"><circle cx="12.9" cy="7.3" r="5.9"/><circle cx="7.6" cy="13.3" r="5.6"/></g><circle cx="11" cy="8.6" r="1.8" fill="#e6e6e6"/></svg>
<svg style="left:661px;top:1045.2px;" width="16" height="16" viewBox="0 0 16 16"><path d="M3.5999999999999996 5.8 L8 10.2 L12.4 5.8" fill="none" stroke="#e6e6e6" stroke-width="1.55" stroke-linecap="round" stroke-linejoin="round"/></svg>
<div style="left:688px;top:1038px;width:73.2px;height:27.5px;background:#282828;border-radius:5px;box-shadow:0 0 0 1px rgba(255,255,255,0.085);"></div>
<div style="left:688px;top:1038px;width:27.4px;height:27.5px;background:#545454;border-radius:5px 0 0 5px;"></div>
<svg style="left:690.7px;top:1040.7px;" width="22" height="22" viewBox="0 0 20 20"><g fill="none" stroke="#9a9a9a" stroke-width="1.4" stroke-linejoin="round"><path d="M2 6.2 L4.6 3.6 A7.4 7.4 0 0 1 15.4 14.2 L11.6 18 L8.8 15.2 L12.4 11.6 A3.4 3.4 0 0 0 7.6 6.6 L4.8 9 Z"/></g></svg>
<div style="left:721.4px;top:1042.5px;width:18.2px;height:18.4px;background:#e6e6e6;"></div>
<svg style="left:744.2px;top:1045.2px;" width="16" height="16" viewBox="0 0 16 16"><path d="M3.5999999999999996 5.8 L8 10.2 L12.4 5.8" fill="none" stroke="#e6e6e6" stroke-width="1.55" stroke-linecap="round" stroke-linejoin="round"/></svg>
<div style="left:770px;top:1038px;width:73.2px;height:27.5px;background:#282828;border-radius:5px;box-shadow:0 0 0 1px rgba(255,255,255,0.085);"></div>
<div style="left:770px;top:1038px;width:27.4px;height:27.5px;background:#545454;border-radius:5px 0 0 5px;"></div>
<svg style="left:772.7px;top:1040.7px;" width="22" height="22" viewBox="0 0 20 20"><circle cx="10" cy="10" r="8.4" fill="none" stroke="#b0b0b0" stroke-width="1.3"/><circle cx="10" cy="10" r="2.6" fill="#e6e6e6"/></svg>
<svg style="left:803.0px;top:1040.7px;" width="22" height="22" viewBox="0 0 20 20"><path d="M1.5 16.5 C6.5 16.5 7 3.5 10 3.5 C13 3.5 13.5 16.5 18.5 16.5" fill="none" stroke="#666666" stroke-width="1.4" stroke-linecap="round"/></svg>
<svg style="left:825.5px;top:1045.2px;" width="16" height="16" viewBox="0 0 16 16"><path d="M3.5999999999999996 5.8 L8 10.2 L12.4 5.8" fill="none" stroke="#5a5a5a" stroke-width="1.55" stroke-linecap="round" stroke-linejoin="round"/></svg>
<div style="left:866.8px;top:1038px;width:44.8px;height:27.5px;background:#282828;border-radius:5px;box-shadow:0 0 0 1px rgba(255,255,255,0.085);"></div>
<svg style="left:869.3px;top:1040.7px;" width="22" height="22" viewBox="0 0 20 20"><path d="M4.8 5.6 C7.2 2 10.2 0.6 12.6 0.6 C15.2 0.6 18 2.2 19.9 5.6 C18 9 15.2 10.4 12.6 10.4 C10.2 10.4 7.2 9.2 4.8 5.6Z" fill="#e6e6e6"/>
<circle cx="12.6" cy="5.2" r="3.3" fill="#282828"/><circle cx="12.6" cy="5.2" r="2" fill="#e6e6e6"/>
<path d="M0.2 8.2 L11.2 12.4 L6.8 14.4 L5 19.6 Z" fill="#e6e6e6" stroke="#282828" stroke-width="0.9"/></svg>
<svg style="left:894.2px;top:1045.2px;" width="16" height="16" viewBox="0 0 16 16"><path d="M3.5999999999999996 5.8 L8 10.2 L12.4 5.8" fill="none" stroke="#e6e6e6" stroke-width="1.55" stroke-linecap="round" stroke-linejoin="round"/></svg>
<div style="left:920px;top:1038px;width:56.3px;height:27.5px;background:#282828;border-radius:5px;box-shadow:0 0 0 1px rgba(255,255,255,0.085);"></div>
<div style="left:920px;top:1038px;width:27px;height:27.5px;background:#4772b3;border-radius:5px 0 0 5px;"></div>
<svg style="left:922.5px;top:1040.7px;" width="22" height="22" viewBox="0 0 20 20"><g fill="none" stroke="#ffffff" stroke-width="1.5" stroke-linecap="round" stroke-linejoin="round"><path d="M2 5.8 C10 4.4 15.4 9.6 15.8 18"/><path d="M5.4 14.8 L17.6 2.4 M12.2 2.2 H17.8 V7.8"/><circle cx="4" cy="16.2" r="2.1" fill="#4772b3"/></g></svg>
<svg style="left:953.6px;top:1045.2px;" width="16" height="16" viewBox="0 0 16 16"><path d="M3.5999999999999996 5.8 L8 10.2 L12.4 5.8" fill="none" stroke="#e6e6e6" stroke-width="1.55" stroke-linecap="round" stroke-linejoin="round"/></svg>
<div style="left:984.7px;top:1038px;width:56.1px;height:27.5px;background:#282828;border-radius:5px;box-shadow:0 0 0 1px rgba(255,255,255,0.085);"></div>
<div style="left:984.7px;top:1038px;width:27.4px;height:27.5px;background:#545454;border-radius:5px 0 0 5px;"></div>
<svg style="left:987.4px;top:1040.7px;" width="22" height="22" viewBox="0 0 20 20"><circle cx="12.4" cy="7.6" r="6.4" fill="#e0e0e0"/><circle cx="7.8" cy="12.4" r="5.6" fill="none" stroke="#e0e0e0" stroke-width="1.5"/><path d="M7.4 6.6 A5.8 5.8 0 0 1 13.6 12.8" fill="none" stroke="#545454" stroke-width="1.5" stroke-dasharray="2.2 1.6"/></svg>
<svg style="left:1018.3px;top:1045.2px;" width="16" height="16" viewBox="0 0 16 16"><path d="M3.5999999999999996 5.8 L8 10.2 L12.4 5.8" fill="none" stroke="#5a5a5a" stroke-width="1.55" stroke-linecap="round" stroke-linejoin="round"/></svg>
<div style="left:1050px;top:1038px;width:27.4px;height:27.5px;background:#545454;border-radius:5px;"></div>
<svg style="left:1052.2px;top:1040.2px;" width="23" height="23" viewBox="0 0 20 20"><g fill="none" stroke="#e0e0e0" stroke-width="1.4" stroke-linejoin="round"><path d="M6.4 5 V1.8 H18.2 V13.6 H15"/><rect x="1.8" y="5.6" width="12.8" height="12.6" fill="#545454"/><path d="M6 9.6 V14 H10.6" stroke-dasharray="2.2 1.4" stroke-width="1.3"/></g></svg>
<div style="left:1085.8px;top:1038px;width:140.5px;height:27.5px;background:#282828;border-radius:5px;box-shadow:0 0 0 1px rgba(255,255,255,0.085);"></div>
<div style="left:1085.8px;top:1038px;width:111.5px;height:27.5px;background:#545454;border-radius:5px 0 0 5px;"></div>
<div style="left:1113.67px;top:1038px;width:27.87px;height:27.5px;background:#4772b3;"></div>
<div style="left:1113.17px;top:1038px;width:1px;height:27.5px;background:rgba(40,40,40,0.5);"></div>
<div style="left:1141.04px;top:1038px;width:1px;height:27.5px;background:rgba(40,40,40,0.5);"></div>
<div style="left:1168.91px;top:1038px;width:1px;height:27.5px;background:rgba(40,40,40,0.5);"></div>
<svg style="left:1088.73px;top:1040.7px;" width="22" height="22" viewBox="0 0 20 20"><g fill="none" stroke="#c4c4c4" stroke-width="1.15"><circle cx="10" cy="10" r="8.8"/><path d="M10 1.2 C6.6 4 6.6 16 10 18.8"/><path d="M1.6 7.4 H18.4 M1.6 12.6 H18.4"/></g></svg>
<svg style="left:1116.61px;top:1040.7px;" width="22" height="22" viewBox="0 0 20 20"><circle cx="10" cy="10" r="8.6" fill="#dbe4f5" stroke="#ffffff" stroke-width="1.3"/></svg>
<svg style="left:1144.47px;top:1040.7px;" width="22" height="22" viewBox="0 0 20 20"><circle cx="10" cy="10" r="8.8" fill="none" stroke="#c4c4c4" stroke-width="1.2"/><path d="M10 2.2 A7.8 7.8 0 0 0 3.4 14.2 C6.6 14.6 9.4 13 10 10 Z" fill="#c4c4c4" opacity="0.85"/>
<path d="M3.4 14.2 C6 17.6 11 18.6 14.6 16" fill="none" stroke="#c4c4c4" stroke-width="1"/><path d="M10.4 17.8 L13.2 14.8 M13.2 17.2 L15.8 14.4 M15.6 15.8 L17.4 13.6" stroke="#c4c4c4" stroke-width="1.1" fill="none"/></svg>
<svg style="left:1172.35px;top:1040.7px;" width="22" height="22" viewBox="0 0 20 20"><circle cx="10" cy="10" r="8.8" fill="none" stroke="#c4c4c4" stroke-width="1.2"/><path d="M4.4 8.6 A6 6 0 0 1 8.8 4.2" fill="none" stroke="#c4c4c4" stroke-width="2.1" stroke-linecap="round"/>
<path d="M8.2 17.6 L10.4 15.4 M10.8 17.8 L13.4 15 M13.4 16.8 L16 14 M15.6 14.8 L17.6 12.4 M17 12.4 L18 11" stroke="#c4c4c4" stroke-width="1.1" fill="none"/></svg>
<svg style="left:1203.6px;top:1045.2px;" width="16" height="16" viewBox="0 0 16 16"><path d="M3.5999999999999996 5.8 L8 10.2 L12.4 5.8" fill="none" stroke="#e6e6e6" stroke-width="1.55" stroke-linecap="round" stroke-linejoin="round"/></svg>
<div style="left:-10px;top:1071.5px;width:168px;height:36.5px;background:rgba(46,46,46,0.66);border-radius:0 0 6px 0;"></div>
<div style="left:7px;top:1076.0px;width:139px;height:27px;background:#545454;border-radius:5px;"></div>
<div style="left:7px;top:1076.0px;width:27.8px;height:27px;background:#4772b3;border-radius:5px 0 0 5px;"></div>
<svg style="left:8.65px;top:1077.25px;" width="24.5" height="24.5" viewBox="0 0 20 20"><rect x="2" y="2" width="16" height="16" fill="none" stroke="#ffffff" stroke-width="1.5" stroke-dasharray="2.6 2.2" stroke-dashoffset="1.3"/></svg>
<div style="left:34.3px;top:1076.0px;width:1px;height:27px;background:rgba(50,50,50,0.55);"></div>
<svg style="left:36.45px;top:1077.25px;" width="24.5" height="24.5" viewBox="0 0 20 20"><path d="M7 1.8 H18.2 V13 H13 V18.2 H1.8 V7 H7 Z" fill="#c8c8c8"/></svg>
<div style="left:62.1px;top:1076.0px;width:1px;height:27px;background:rgba(50,50,50,0.55);"></div>
<svg style="left:64.25px;top:1077.25px;" width="24.5" height="24.5" viewBox="0 0 20 20"><path d="M7 1.8 H18.2 V13 H13 V7 H7 Z" fill="#c8c8c8"/><path d="M6 7.6 H2.4 V17.6 H12.4 V14" fill="none" stroke="#c8c8c8" stroke-width="1.2" stroke-dasharray="2.2 1.8"/></svg>
<div style="left:89.9px;top:1076.0px;width:1px;height:27px;background:rgba(50,50,50,0.55);"></div>
<svg style="left:92.05px;top:1077.25px;" width="24.5" height="24.5" viewBox="0 0 20 20"><path d="M7 1.8 H18.2 V13 H13 V18.2 H1.8 V7 H7 Z" fill="#c8c8c8"/><rect x="7" y="7" width="6" height="6" fill="#545454"/></svg>
<div style="left:117.7px;top:1076.0px;width:1px;height:27px;background:rgba(50,50,50,0.55);"></div>
<svg style="left:119.85px;top:1077.25px;" width="24.5" height="24.5" viewBox="0 0 20 20"><rect x="6" y="6" width="8" height="8" fill="#c8c8c8"/><rect x="2.2" y="2.2" width="15.6" height="15.6" fill="none" stroke="#c8c8c8" stroke-width="1.3" stroke-dasharray="2.6 2.2" stroke-dashoffset="1.3"/></svg>
<div style="left:788px;top:1071.5px;width:130px;height:36.5px;background:rgba(46,46,46,0.66);border-radius:0 0 0 6px;"></div>
<div style="left:800.3px;top:1076.2px;width:97px;height:27.8px;background:#282828;border-radius:5px;box-shadow:inset 0 0 0 1px rgba(255,255,255,0.1);"></div>
<div class="t" style="left:812px;top:1078.40px;color:#e6e6e6;font-size:17px;letter-spacing:0.103px;">Options</div>
<svg style="left:880.2px;top:1083.0px;" width="16" height="16" viewBox="0 0 16 16"><path d="M3.5999999999999996 5.8 L8 10.2 L12.4 5.8" fill="none" stroke="#e6e6e6" stroke-width="1.55" stroke-linecap="round" stroke-linejoin="round"/></svg>
</div></div>
<div style="left:1634px;top:42px;width:601px;height:633.7px;overflow:hidden;border-radius:6px;"><div style="left:-1634px;top:-42px;width:0;height:0;">
<div style="left:1634px;top:42px;width:600px;height:38px;background:#2a2a2a;"></div>
<div style="left:1645.8px;top:46.6px;width:44.5px;height:27.6px;background:#282828;border-radius:5px;box-shadow:0 0 0 1px rgba(255,255,255,0.085);"></div>
<svg style="left:1651.9px;top:50.4px;" width="22" height="22" viewBox="0 0 20 20"><g fill="#e6e6e6"><rect x="1.4" y="1" width="7.6" height="4" rx="0.6"/><rect x="8.4" y="8" width="10.4" height="3.6" rx="0.6"/><rect x="8.4" y="14.6" width="10.4" height="3.6" rx="0.6"/></g><path d="M3.6 5 V16.6 H8 M3.6 9.8 H8" fill="none" stroke="#e6e6e6" stroke-width="1.3"/></svg>
<svg style="left:1673.4px;top:53.699999999999996px;" width="16" height="16" viewBox="0 0 16 16"><path d="M3.5999999999999996 5.8 L8 10.2 L12.4 5.8" fill="none" stroke="#e6e6e6" stroke-width="1.55" stroke-linecap="round" stroke-linejoin="round"/></svg>
<div style="left:1698.6px;top:46.6px;width:45px;height:27.6px;background:#282828;border-radius:5px;box-shadow:0 0 0 1px rgba(255,255,255,0.085);"></div>
<svg style="left:1705.0px;top:50.2px;" width="22" height="22" viewBox="0 0 20 20"><g fill="none" stroke="#e6e6e6" stroke-width="1.3" stroke-linejoin="round"><path d="M3.4 6.5 H1.6 V18.4 H14.4 V16.8"/><path d="M5.4 4.2 H3.8 V16.2 H16.4 V14.6"/>
<rect x="6.2" y="1.6" width="12.2" height="12.4" fill="#282828"/></g><path d="M6.6 13.6 L11 6.4 L14 11 L15.6 9.2 L18 13.6 Z" fill="#e6e6e6"/><circle cx="15.4" cy="4.8" r="1.3" fill="#e6e6e6"/></svg>
<svg style="left:1726.4px;top:53.699999999999996px;" width="16" height="16" viewBox="0 0 16 16"><path d="M3.5999999999999996 5.8 L8 10.2 L12.4 5.8" fill="none" stroke="#e6e6e6" stroke-width="1.55" stroke-linecap="round" stroke-linejoin="round"/></svg>
<div style="left:1827.7px;top:46.6px;width:171.5px;height:27.6px;background:#1d1d1d;border-radius:5px;box-shadow:0 0 0 1px rgba(255,255,255,0.085);"></div>
<svg style="left:1834.4px;top:50.0px;" width="22" height="22" viewBox="0 0 20 20"><circle cx="12" cy="7.8" r="5.8" fill="none" stroke="#e6e6e6" stroke-width="1.5"/><path d="M8 12 L1.6 18.4" stroke="#e6e6e6" stroke-width="1.6" stroke-linecap="round"/></svg>
<div class="t" style="left:1866.6px;top:49.10px;color:#757575;font-size:17px;letter-spacing:-0.252px;">Search</div>
<div style="left:2131.7px;top:46.6px;width:44.5px;height:27.6px;background:#282828;border-radius:5px;box-shadow:0 0 0 1px rgba(255,255,255,0.085);"></div>
<svg style="left:2134.1px;top:49.9px;" width="21" height="21" viewBox="0 0 20 20"><path d="M1.6 2 H18.4 L11.8 9.8 V18.4 L8.2 15.6 V9.8 Z" fill="none" stroke="#e6e6e6" stroke-width="1.5" stroke-linejoin="round"/></svg>
<svg style="left:2159.3px;top:53.699999999999996px;" width="16" height="16" viewBox="0 0 16 16"><path d="M3.5999999999999996 5.8 L8 10.2 L12.4 5.8" fill="none" stroke="#e6e6e6" stroke-width="1.55" stroke-linecap="round" stroke-linejoin="round"/></svg>
<div style="left:2184.5px;top:46.6px;width:27.4px;height:27.6px;background:#545454;border-radius:5px;"></div>
<svg style="left:2187.2px;top:49.8px;" width="22" height="22" viewBox="0 0 20 20"><g fill="none" stroke="#cfcfcf" stroke-width="1.3"><path d="M10.6 5 H2 V8.6 H11.4"/><path d="M3.4 8.6 V18 H16.2 V12"/></g><rect x="7.4" y="11.4" width="5" height="2.2" rx="1.1" fill="#cfcfcf"/><circle cx="15.4" cy="5.2" r="4.7" fill="#f0f0f0"/><path d="M12.6 5.2 H18.2 M15.4 2.4 V8" stroke="#404040" stroke-width="1.4"/></svg>
<div style="left:1634px;top:80px;width:600px;height:29px;background:#282828;"></div>
<div style="left:1634px;top:109px;width:600px;height:29px;background:#2b2b2b;"></div>
<div style="left:1634px;top:138px;width:600px;height:29px;background:#282828;"></div>
<div style="left:1634px;top:167px;width:600px;height:29px;background:#2b2b2b;"></div>
<div style="left:1634px;top:196px;width:600px;height:29px;background:#282828;"></div>
<div style="left:1634px;top:225px;width:600px;height:29px;background:#2b2b2b;"></div>
<div style="left:1634px;top:254px;width:600px;height:29px;background:#282828;"></div>
<div style="left:1634px;top:283px;width:600px;height:29px;background:#2b2b2b;"></div>
<div style="left:1634px;top:312px;width:600px;height:29px;background:#282828;"></div>
<div style="left:1634px;top:341px;width:600px;height:29px;background:#2b2b2b;"></div>
<div style="left:1634px;top:370px;width:600px;height:29px;background:#282828;"></div>
<div style="left:1634px;top:399px;width:600px;height:29px;background:#2b2b2b;"></div>
<div style="left:1634px;top:428px;width:600px;height:29px;background:#282828;"></div>
<div style="left:1634px;top:457px;width:600px;height:29px;background:#2b2b2b;"></div>
<div style="left:1634px;top:486px;width:600px;height:29px;background:#282828;"></div>
<div style="left:1634px;top:515px;width:600px;height:29px;background:#2b2b2b;"></div>
<div style="left:1634px;top:544px;width:600px;height:29px;background:#282828;"></div>
<div style="left:1634px;top:573px;width:600px;height:29px;background:#2b2b2b;"></div>
<div style="left:1634px;top:602px;width:600px;height:29px;background:#282828;"></div>
<div style="left:1634px;top:631px;width:600px;height:29px;background:#2b2b2b;"></div>
<div style="left:1634px;top:660px;width:600px;height:29px;background:#282828;"></div>
<div style="left:1634px;top:398.9px;width:600px;height:29px;background:#334c80;"></div>
<div style="left:1676.4px;top:143px;width:1px;height:338px;background:#5e5e5e;"></div>
<svg style="left:1666.25px;top:82.85px;" width="21.3" height="21.3" viewBox="0 0 20 20"><rect x="0" y="0.6" width="20" height="5" fill="#dcdcdc" rx="0.6"/><rect x="1.6" y="6.8" width="16.8" height="12.2" fill="#dcdcdc"/><rect x="7.4" y="9.2" width="5.2" height="2.2" rx="1.1" fill="#282828"/></svg>
<div class="t" style="left:1697px;top:85.10px;color:#e6e6e6;font-size:17px;letter-spacing:0.196px;">Scene Collection</div>
<svg style="left:1669.3px;top:116.0px;" width="16" height="16" viewBox="0 0 16 16"><path d="M1.5999999999999996 4.8 L8 11.2 L14.4 4.8" fill="none" stroke="#c8c8c8" stroke-width="1.5" stroke-linecap="round" stroke-linejoin="round"/></svg>
<div style="left:1692.7px;top:110.0px;width:27.6px;height:27px;background:rgba(255,255,255,0.2);border-radius:6px;box-shadow:inset 0 0 0 1px rgba(255,255,255,0.12);"></div>
<svg style="left:1695.65px;top:112.25px;" width="21.3" height="21.3" viewBox="0 0 20 20"><rect x="0" y="0.6" width="20" height="5" fill="#dcdcdc" rx="0.6"/><rect x="1.6" y="6.8" width="16.8" height="12.2" fill="#dcdcdc"/><rect x="7.4" y="9.2" width="5.2" height="2.2" rx="1.1" fill="#5a5a5a"/></svg>
<div class="t" style="left:1726.6px;top:114.10px;color:#e6e6e6;font-size:17px;letter-spacing:0.328px;">Collection</div>
<svg style="left:1698.4px;top:142.7px;" width="16" height="20" viewBox="0 0 16 20"><path d="M4.4 2.5999999999999996 L11.6 10 L4.4 17.4" fill="none" stroke="#6a6a6a" stroke-width="1.5" stroke-linecap="round" stroke-linejoin="round"/></svg>
<svg style="left:1724.65px;top:141.05px;" width="21.3" height="21.3" viewBox="0 0 20 20"><rect x="0" y="0.6" width="20" height="5" fill="#808080" rx="0.6"/><rect x="1.6" y="6.8" width="16.8" height="12.2" fill="#808080"/><rect x="7.4" y="9.2" width="5.2" height="2.2" rx="1.1" fill="#282828"/></svg>
<div class="t" style="left:1755.4px;top:143.10px;color:#7e7e7e;font-size:17px;letter-spacing:0.005px;">grease</div>
<svg style="left:1841.8px;top:141.0px;" width="22" height="22" viewBox="0 0 20 20"><path d="M2 18 C6 17.6 5.4 12.6 5.6 9.6 C5.8 5.6 10.6 5.2 11.6 9 C12.4 12.4 11.8 16.8 15.4 17 C18 17 18.4 12.6 17 9.4" fill="none" stroke="#8f5d38" stroke-width="2.7" stroke-linecap="round"/><path d="M13.4 3.6 C14.4 2.6 15.8 1.8 17.4 1.6" fill="none" stroke="#8f5d38" stroke-width="2" stroke-linecap="round"/></svg>
<div class="t" style="left:1859.8000000000002px;top:147.50px;color:#e6e6e6;font-size:12px;letter-spacing:0.150px;text-shadow:0 0 2px #000,0 0 2px #000;">3</div>
<svg style="left:2156.0px;top:142.2px;" width="20.6" height="20.6" viewBox="0 0 20 20"><path d="M0.8 8.6 C4.6 13.8 7.4 15 10 15 C12.6 15 15.4 13.8 19.2 8.6" fill="none" stroke="#505050" stroke-width="1.2" stroke-linecap="round"/></svg>
<svg style="left:2185.0px;top:142.5px;" width="20.8" height="20.8" viewBox="0 0 20 20"><path d="M0.7 5.2 H5.8 L7.6 2.2 H13.4 L15.2 5.2 H19.3 V17 H0.7 Z" fill="none" stroke="#474747" stroke-width="1.2" stroke-linejoin="round"/><path d="M7.6 8 L13 13.4 M13 8 L7.6 13.4" stroke="#474747" stroke-width="1.3" fill="none"/></svg>
<svg style="left:1698.4px;top:171.7px;" width="16" height="20" viewBox="0 0 16 20"><path d="M4.4 2.5999999999999996 L11.6 10 L4.4 17.4" fill="none" stroke="#c8c8c8" stroke-width="1.5" stroke-linecap="round" stroke-linejoin="round"/></svg>
<svg style="left:1725.0px;top:170.5px;" width="22" height="22" viewBox="0 0 20 20"><circle cx="4.6" cy="7.4" r="3.9" fill="#d0894f"/><circle cx="13" cy="5.6" r="5.4" fill="#d0894f"/><circle cx="4.6" cy="7.4" r="1.4" fill="#282828"/><circle cx="13.4" cy="5.4" r="1.6" fill="#282828"/>
<path d="M4.6 11.4 H14.6 V13.2 L19.4 10.8 V19 L14.6 16.8 V19.4 H6.6 L4.6 17.2 V16 H2.6 V12.6 H4.6 Z" fill="#d0894f"/></svg>
<div class="t" style="left:1755.4px;top:172.10px;color:#e6e6e6;font-size:17px;letter-spacing:-0.211px;">Camera</div>
<div style="left:1844.9px;top:168.1px;width:28.4px;height:26.6px;background:rgba(255,255,255,0.2);border-radius:6px;box-shadow:inset 0 0 0 1px rgba(255,255,255,0.12);"></div>
<svg style="left:1847.95px;top:170.25px;" width="22.5" height="22.5" viewBox="0 0 20 20"><g fill="none" stroke="#1ec79b" stroke-width="1.3" stroke-linejoin="round"><path d="M1.8 7.2 A3.6 3.6 0 0 1 8.4 5.2 A5 5 0 1 1 13.2 11.4 H5 A3.6 3.6 0 0 1 1.8 7.2 Z"/><circle cx="14" cy="6" r="1.3" stroke-width="1.1"/><circle cx="5" cy="8" r="0.9" stroke-width="1"/><rect x="5.4" y="13.2" width="8.2" height="5.6" rx="0.8"/><path d="M19.4 13.4 L15.6 16 L19.4 18.6 Z" stroke-width="1.1"/><path d="M3 14.2 V17.6 M3 16 H5.2" stroke-width="1.1"/></g></svg>
<svg style="left:2156.0px;top:171.2px;" width="20.6" height="20.6" viewBox="0 0 20 20"><path d="M0.2 10 C3 5.4 6.6 3.2 10 3.2 C13.4 3.2 17 5.4 19.8 10 C17 14.6 13.4 16.8 10 16.8 C6.6 16.8 3 14.6 0.2 10Z" fill="#e6e6e6"/><circle cx="10" cy="9.8" r="5" fill="#2b2b2b"/><circle cx="10" cy="9.8" r="3.2" fill="#e6e6e6"/><circle cx="10" cy="9.8" r="1.5" fill="#ffffff"/></svg>
<svg style="left:2185.0px;top:171.5px;" width="20.8" height="20.8" viewBox="0 0 20 20"><path d="M0 4.6 H5.6 L7.4 1.6 H13.6 L15.4 4.6 H20 V17.6 H0 Z" fill="#e6e6e6"/><circle cx="10.6" cy="10.6" r="5.4" fill="#2b2b2b"/><circle cx="10.6" cy="10.6" r="4.3" fill="#e6e6e6"/><circle cx="10.6" cy="10.6" r="3.1" fill="#2b2b2b"/></svg>
<svg style="left:1698.4px;top:200.7px;" width="16" height="20" viewBox="0 0 16 20"><path d="M4.4 2.5999999999999996 L11.6 10 L4.4 17.4" fill="none" stroke="#6a6a6a" stroke-width="1.5" stroke-linecap="round" stroke-linejoin="round"/></svg>
<svg style="left:1725.25px;top:199.95px;" width="21.5" height="21.5" viewBox="0 0 20 20"><path d="M2.6 3 H17.4 L10 17.4 Z" fill="none" stroke="#7a573c" stroke-width="3.5" stroke-linejoin="round"/></svg>
<div class="t" style="left:1755.4px;top:201.10px;color:#7e7e7e;font-size:17px;letter-spacing:-0.179px;">Cone</div>
<svg style="left:1829.15px;top:198.95px;" width="21.5" height="21.5" viewBox="0 0 20 20"><g fill="none" stroke="#1f7f69" stroke-width="1.3"><path d="M4 3.2 H16 M16.8 4.6 L11 15.4 M9 15.4 L3.2 4.6"/><rect x="1" y="1" width="3.6" height="3.6"/><rect x="15.4" y="1" width="3.6" height="3.6"/><rect x="8.2" y="15.2" width="3.6" height="3.6"/></g></svg>
<svg style="left:2156.0px;top:200.2px;" width="20.6" height="20.6" viewBox="0 0 20 20"><path d="M0.8 8.6 C4.6 13.8 7.4 15 10 15 C12.6 15 15.4 13.8 19.2 8.6" fill="none" stroke="#b0b0b0" stroke-width="1.2" stroke-linecap="round"/></svg>
<svg style="left:2185.0px;top:200.5px;" width="20.8" height="20.8" viewBox="0 0 20 20"><path d="M0.7 5.2 H5.8 L7.6 2.2 H13.4 L15.2 5.2 H19.3 V17 H0.7 Z" fill="none" stroke="#b0b0b0" stroke-width="1.2" stroke-linejoin="round"/><path d="M7.6 8 L13 13.4 M13 8 L7.6 13.4" stroke="#b0b0b0" stroke-width="1.3" fill="none"/></svg>
<svg style="left:1698.4px;top:229.7px;" width="16" height="20" viewBox="0 0 16 20"><path d="M4.4 2.5999999999999996 L11.6 10 L4.4 17.4" fill="none" stroke="#c8c8c8" stroke-width="1.5" stroke-linecap="round" stroke-linejoin="round"/></svg>
<svg style="left:1725.25px;top:228.95px;" width="21.5" height="21.5" viewBox="0 0 20 20"><path d="M2.6 3 H17.4 L10 17.4 Z" fill="none" stroke="#d98c4e" stroke-width="3.5" stroke-linejoin="round"/></svg>
<div class="t" style="left:1755.4px;top:230.10px;color:#e6e6e6;font-size:17px;letter-spacing:-0.179px;">Cube</div>
<svg style="left:1829.15px;top:227.95px;" width="21.5" height="21.5" viewBox="0 0 20 20"><g fill="none" stroke="#1ec79b" stroke-width="1.3"><path d="M4 3.2 H16 M16.8 4.6 L11 15.4 M9 15.4 L3.2 4.6"/><rect x="1" y="1" width="3.6" height="3.6"/><rect x="15.4" y="1" width="3.6" height="3.6"/><rect x="8.2" y="15.2" width="3.6" height="3.6"/></g></svg>
<svg style="left:2156.0px;top:229.2px;" width="20.6" height="20.6" viewBox="0 0 20 20"><path d="M0.2 10 C3 5.4 6.6 3.2 10 3.2 C13.4 3.2 17 5.4 19.8 10 C17 14.6 13.4 16.8 10 16.8 C6.6 16.8 3 14.6 0.2 10Z" fill="#e6e6e6"/><circle cx="10" cy="9.8" r="5" fill="#2b2b2b"/><circle cx="10" cy="9.8" r="3.2" fill="#e6e6e6"/><circle cx="10" cy="9.8" r="1.5" fill="#ffffff"/></svg>
<svg style="left:2185.0px;top:229.5px;" width="20.8" height="20.8" viewBox="0 0 20 20"><path d="M0 4.6 H5.6 L7.4 1.6 H13.6 L15.4 4.6 H20 V17.6 H0 Z" fill="#e6e6e6"/><circle cx="10.6" cy="10.6" r="5.4" fill="#2b2b2b"/><circle cx="10.6" cy="10.6" r="4.3" fill="#e6e6e6"/><circle cx="10.6" cy="10.6" r="3.1" fill="#2b2b2b"/></svg>
<svg style="left:1698.4px;top:258.7px;" width="16" height="20" viewBox="0 0 16 20"><path d="M4.4 2.5999999999999996 L11.6 10 L4.4 17.4" fill="none" stroke="#c8c8c8" stroke-width="1.5" stroke-linecap="round" stroke-linejoin="round"/></svg>
<svg style="left:1725.25px;top:257.95px;" width="21.5" height="21.5" viewBox="0 0 20 20"><path d="M2.6 3 H17.4 L10 17.4 Z" fill="none" stroke="#d98c4e" stroke-width="3.5" stroke-linejoin="round"/></svg>
<div class="t" style="left:1755.4px;top:259.10px;color:#e6e6e6;font-size:17px;letter-spacing:0.412px;">Cube.001</div>
<svg style="left:1865.65px;top:256.95px;" width="21.5" height="21.5" viewBox="0 0 20 20"><g fill="none" stroke="#1ec79b" stroke-width="1.3"><path d="M4 3.2 H16 M16.8 4.6 L11 15.4 M9 15.4 L3.2 4.6"/><rect x="1" y="1" width="3.6" height="3.6"/><rect x="15.4" y="1" width="3.6" height="3.6"/><rect x="8.2" y="15.2" width="3.6" height="3.6"/></g></svg>
<svg style="left:2156.0px;top:258.2px;" width="20.6" height="20.6" viewBox="0 0 20 20"><path d="M0.2 10 C3 5.4 6.6 3.2 10 3.2 C13.4 3.2 17 5.4 19.8 10 C17 14.6 13.4 16.8 10 16.8 C6.6 16.8 3 14.6 0.2 10Z" fill="#e6e6e6"/><circle cx="10" cy="9.8" r="5" fill="#282828"/><circle cx="10" cy="9.8" r="3.2" fill="#e6e6e6"/><circle cx="10" cy="9.8" r="1.5" fill="#ffffff"/></svg>
<svg style="left:2185.0px;top:258.5px;" width="20.8" height="20.8" viewBox="0 0 20 20"><path d="M0 4.6 H5.6 L7.4 1.6 H13.6 L15.4 4.6 H20 V17.6 H0 Z" fill="#e6e6e6"/><circle cx="10.6" cy="10.6" r="5.4" fill="#282828"/><circle cx="10.6" cy="10.6" r="4.3" fill="#e6e6e6"/><circle cx="10.6" cy="10.6" r="3.1" fill="#282828"/></svg>
<svg style="left:1698.4px;top:287.7px;" width="16" height="20" viewBox="0 0 16 20"><path d="M4.4 2.5999999999999996 L11.6 10 L4.4 17.4" fill="none" stroke="#c8c8c8" stroke-width="1.5" stroke-linecap="round" stroke-linejoin="round"/></svg>
<svg style="left:1725.25px;top:286.95px;" width="21.5" height="21.5" viewBox="0 0 20 20"><path d="M2.6 3 H17.4 L10 17.4 Z" fill="none" stroke="#d98c4e" stroke-width="3.5" stroke-linejoin="round"/></svg>
<div class="t" style="left:1755.4px;top:288.10px;color:#e6e6e6;font-size:17px;letter-spacing:0.352px;">curved backdrop</div>
<svg style="left:1919.65px;top:286.35px;" width="21.5" height="21.5" viewBox="0 0 20 20"><path d="M13.4 1.4 A5.4 5.4 0 0 0 9.6 9.2 L1.6 16.2 A1.9 1.9 0 0 0 4.4 19 L11.6 11.2 A5.4 5.4 0 0 0 19 6.6 L15.6 9 L12.2 7.6 L11.8 4.2 Z" fill="none" stroke="#6f8fe0" stroke-width="1.5" stroke-linejoin="round"/></svg>
<svg style="left:1948.65px;top:285.95px;" width="21.5" height="21.5" viewBox="0 0 20 20"><g fill="none" stroke="#1ec79b" stroke-width="1.3"><path d="M4 3.2 H16 M16.8 4.6 L11 15.4 M9 15.4 L3.2 4.6"/><rect x="1" y="1" width="3.6" height="3.6"/><rect x="15.4" y="1" width="3.6" height="3.6"/><rect x="8.2" y="15.2" width="3.6" height="3.6"/></g></svg>
<svg style="left:2156.0px;top:287.2px;" width="20.6" height="20.6" viewBox="0 0 20 20"><path d="M0.2 10 C3 5.4 6.6 3.2 10 3.2 C13.4 3.2 17 5.4 19.8 10 C17 14.6 13.4 16.8 10 16.8 C6.6 16.8 3 14.6 0.2 10Z" fill="#e6e6e6"/><circle cx="10" cy="9.8" r="5" fill="#2b2b2b"/><circle cx="10" cy="9.8" r="3.2" fill="#e6e6e6"/><circle cx="10" cy="9.8" r="1.5" fill="#ffffff"/></svg>
<svg style="left:2185.0px;top:287.5px;" width="20.8" height="20.8" viewBox="0 0 20 20"><path d="M0 4.6 H5.6 L7.4 1.6 H13.6 L15.4 4.6 H20 V17.6 H0 Z" fill="#e6e6e6"/><circle cx="10.6" cy="10.6" r="5.4" fill="#2b2b2b"/><circle cx="10.6" cy="10.6" r="4.3" fill="#e6e6e6"/><circle cx="10.6" cy="10.6" r="3.1" fill="#2b2b2b"/></svg>
<svg style="left:1698.4px;top:316.7px;" width="16" height="20" viewBox="0 0 16 20"><path d="M4.4 2.5999999999999996 L11.6 10 L4.4 17.4" fill="none" stroke="#c8c8c8" stroke-width="1.5" stroke-linecap="round" stroke-linejoin="round"/></svg>
<svg style="left:1725.25px;top:315.95px;" width="21.5" height="21.5" viewBox="0 0 20 20"><path d="M2.6 3 H17.4 L10 17.4 Z" fill="none" stroke="#d98c4e" stroke-width="3.5" stroke-linejoin="round"/></svg>
<div class="t" style="left:1755.4px;top:317.10px;color:#e6e6e6;font-size:17px;letter-spacing:0.293px;">Cylinder</div>
<svg style="left:1853.45px;top:314.95px;" width="21.5" height="21.5" viewBox="0 0 20 20"><g fill="none" stroke="#1ec79b" stroke-width="1.3"><path d="M4 3.2 H16 M16.8 4.6 L11 15.4 M9 15.4 L3.2 4.6"/><rect x="1" y="1" width="3.6" height="3.6"/><rect x="15.4" y="1" width="3.6" height="3.6"/><rect x="8.2" y="15.2" width="3.6" height="3.6"/></g></svg>
<svg style="left:2156.0px;top:316.2px;" width="20.6" height="20.6" viewBox="0 0 20 20"><path d="M0.2 10 C3 5.4 6.6 3.2 10 3.2 C13.4 3.2 17 5.4 19.8 10 C17 14.6 13.4 16.8 10 16.8 C6.6 16.8 3 14.6 0.2 10Z" fill="#e6e6e6"/><circle cx="10" cy="9.8" r="5" fill="#282828"/><circle cx="10" cy="9.8" r="3.2" fill="#e6e6e6"/><circle cx="10" cy="9.8" r="1.5" fill="#ffffff"/></svg>
<svg style="left:2185.0px;top:316.5px;" width="20.8" height="20.8" viewBox="0 0 20 20"><path d="M0 4.6 H5.6 L7.4 1.6 H13.6 L15.4 4.6 H20 V17.6 H0 Z" fill="#e6e6e6"/><circle cx="10.6" cy="10.6" r="5.4" fill="#282828"/><circle cx="10.6" cy="10.6" r="4.3" fill="#e6e6e6"/><circle cx="10.6" cy="10.6" r="3.1" fill="#282828"/></svg>
<svg style="left:1698.4px;top:345.7px;" width="16" height="20" viewBox="0 0 16 20"><path d="M4.4 2.5999999999999996 L11.6 10 L4.4 17.4" fill="none" stroke="#6a6a6a" stroke-width="1.5" stroke-linecap="round" stroke-linejoin="round"/></svg>
<svg style="left:1725.25px;top:344.95px;" width="21.5" height="21.5" viewBox="0 0 20 20"><path d="M2.6 3 H17.4 L10 17.4 Z" fill="none" stroke="#7a573c" stroke-width="3.5" stroke-linejoin="round"/></svg>
<div class="t" style="left:1755.4px;top:346.10px;color:#7e7e7e;font-size:17px;letter-spacing:0.581px;">Icosphere</div>
<svg style="left:1868.35px;top:343.95px;" width="21.5" height="21.5" viewBox="0 0 20 20"><g fill="none" stroke="#1f7f69" stroke-width="1.3"><path d="M4 3.2 H16 M16.8 4.6 L11 15.4 M9 15.4 L3.2 4.6"/><rect x="1" y="1" width="3.6" height="3.6"/><rect x="15.4" y="1" width="3.6" height="3.6"/><rect x="8.2" y="15.2" width="3.6" height="3.6"/></g></svg>
<svg style="left:2156.0px;top:345.2px;" width="20.6" height="20.6" viewBox="0 0 20 20"><path d="M0.8 8.6 C4.6 13.8 7.4 15 10 15 C12.6 15 15.4 13.8 19.2 8.6" fill="none" stroke="#b0b0b0" stroke-width="1.2" stroke-linecap="round"/></svg>
<svg style="left:2185.0px;top:345.5px;" width="20.8" height="20.8" viewBox="0 0 20 20"><path d="M0.7 5.2 H5.8 L7.6 2.2 H13.4 L15.2 5.2 H19.3 V17 H0.7 Z" fill="none" stroke="#b0b0b0" stroke-width="1.2" stroke-linejoin="round"/><path d="M7.6 8 L13 13.4 M13 8 L7.6 13.4" stroke="#b0b0b0" stroke-width="1.3" fill="none"/></svg>
<svg style="left:1698.4px;top:374.7px;" width="16" height="20" viewBox="0 0 16 20"><path d="M4.4 2.5999999999999996 L11.6 10 L4.4 17.4" fill="none" stroke="#6a6a6a" stroke-width="1.5" stroke-linecap="round" stroke-linejoin="round"/></svg>
<svg style="left:1725.25px;top:373.95px;" width="21.5" height="21.5" viewBox="0 0 20 20"><path d="M2.6 3 H17.4 L10 17.4 Z" fill="none" stroke="#7a573c" stroke-width="3.5" stroke-linejoin="round"/></svg>
<div class="t" style="left:1755.4px;top:375.10px;color:#7e7e7e;font-size:17px;letter-spacing:-0.244px;">Plane</div>
<svg style="left:1831.55px;top:372.95px;" width="21.5" height="21.5" viewBox="0 0 20 20"><g fill="none" stroke="#1f7f69" stroke-width="1.3"><path d="M4 3.2 H16 M16.8 4.6 L11 15.4 M9 15.4 L3.2 4.6"/><rect x="1" y="1" width="3.6" height="3.6"/><rect x="15.4" y="1" width="3.6" height="3.6"/><rect x="8.2" y="15.2" width="3.6" height="3.6"/></g></svg>
<svg style="left:2156.0px;top:374.2px;" width="20.6" height="20.6" viewBox="0 0 20 20"><path d="M0.8 8.6 C4.6 13.8 7.4 15 10 15 C12.6 15 15.4 13.8 19.2 8.6" fill="none" stroke="#b0b0b0" stroke-width="1.2" stroke-linecap="round"/></svg>
<svg style="left:2185.0px;top:374.5px;" width="20.8" height="20.8" viewBox="0 0 20 20"><path d="M0.7 5.2 H5.8 L7.6 2.2 H13.4 L15.2 5.2 H19.3 V17 H0.7 Z" fill="none" stroke="#b0b0b0" stroke-width="1.2" stroke-linejoin="round"/><path d="M7.6 8 L13 13.4 M13 8 L7.6 13.4" stroke="#b0b0b0" stroke-width="1.3" fill="none"/></svg>
<svg style="left:1698.4px;top:403.5px;" width="16" height="20" viewBox="0 0 16 20"><path d="M4.4 2.5999999999999996 L11.6 10 L4.4 17.4" fill="none" stroke="#c8c8c8" stroke-width="1.5" stroke-linecap="round" stroke-linejoin="round"/></svg>
<div style="left:1721.2px;top:399.90000000000003px;width:28.6px;height:26.8px;background:rgba(255,255,255,0.22);border-radius:6px;box-shadow:inset 0 0 0 1px rgba(255,255,255,0.13);"></div>
<svg style="left:1725.0px;top:402.3px;" width="22" height="22" viewBox="0 0 20 20"><path d="M10 0.8 A7 7 0 0 1 17 7.8 C17 10.6 15.4 12 14.4 13.6 H5.6 C4.6 12 3 10.6 3 7.8 A7 7 0 0 1 10 0.8 Z" fill="#d98c4e"/><path d="M7.2 8 L8.2 12.6 M12.8 8 L11.8 12.6 M6.6 8.4 H13.4" stroke="#6b7ba0" stroke-width="1.3" fill="none"/><rect x="6" y="14.8" width="8" height="1.7" fill="#d98c4e"/><rect x="8.2" y="17.4" width="3.6" height="1.6" fill="#d98c4e"/></svg>
<div class="t" style="left:1755.4px;top:403.90px;color:#ffb02e;font-size:17px;letter-spacing:0.013px;">Point</div>
<svg style="left:1826.2px;top:402.3px;" width="22" height="22" viewBox="0 0 20 20"><g fill="none" stroke="#1ec79b" stroke-width="1.35" stroke-linejoin="round" stroke-linecap="round"><path d="M4.2 2.6 Q3.4 1.4 4.8 1.4 H12 Q13 1.4 13.4 2.4 L18.6 15.4 Q19 16.6 17.8 16.6 H10.6 Q9.6 16.6 9.2 15.6 Z"/><path d="M9.4 10.8 L1.6 18.4" stroke-dasharray="2.6 2.4"/></g><circle cx="10.8" cy="9.4" r="1.25" fill="#1ec79b"/></svg>
<svg style="left:2156.0px;top:403.0px;" width="20.6" height="20.6" viewBox="0 0 20 20"><path d="M0.2 10 C3 5.4 6.6 3.2 10 3.2 C13.4 3.2 17 5.4 19.8 10 C17 14.6 13.4 16.8 10 16.8 C6.6 16.8 3 14.6 0.2 10Z" fill="#e6e6e6"/><circle cx="10" cy="9.8" r="5" fill="#334c80"/><circle cx="10" cy="9.8" r="3.2" fill="#e6e6e6"/><circle cx="10" cy="9.8" r="1.5" fill="#ffffff"/></svg>
<svg style="left:2185.0px;top:403.3px;" width="20.8" height="20.8" viewBox="0 0 20 20"><path d="M0 4.6 H5.6 L7.4 1.6 H13.6 L15.4 4.6 H20 V17.6 H0 Z" fill="#e6e6e6"/><circle cx="10.6" cy="10.6" r="5.4" fill="#334c80"/><circle cx="10.6" cy="10.6" r="4.3" fill="#e6e6e6"/><circle cx="10.6" cy="10.6" r="3.1" fill="#334c80"/></svg>
<svg style="left:1698.4px;top:432.7px;" width="16" height="20" viewBox="0 0 16 20"><path d="M4.4 2.5999999999999996 L11.6 10 L4.4 17.4" fill="none" stroke="#c8c8c8" stroke-width="1.5" stroke-linecap="round" stroke-linejoin="round"/></svg>
<svg style="left:1725.25px;top:431.95px;" width="21.5" height="21.5" viewBox="0 0 20 20"><path d="M2.6 3 H17.4 L10 17.4 Z" fill="none" stroke="#d98c4e" stroke-width="3.5" stroke-linejoin="round"/></svg>
<div class="t" style="left:1755.4px;top:433.10px;color:#e6e6e6;font-size:17px;letter-spacing:-0.083px;">Sphere</div>
<svg style="left:1843.45px;top:431.35px;" width="21.5" height="21.5" viewBox="0 0 20 20"><path d="M13.4 1.4 A5.4 5.4 0 0 0 9.6 9.2 L1.6 16.2 A1.9 1.9 0 0 0 4.4 19 L11.6 11.2 A5.4 5.4 0 0 0 19 6.6 L15.6 9 L12.2 7.6 L11.8 4.2 Z" fill="none" stroke="#6f8fe0" stroke-width="1.5" stroke-linejoin="round"/></svg>
<svg style="left:1872.45px;top:430.95px;" width="21.5" height="21.5" viewBox="0 0 20 20"><g fill="none" stroke="#1ec79b" stroke-width="1.3"><path d="M4 3.2 H16 M16.8 4.6 L11 15.4 M9 15.4 L3.2 4.6"/><rect x="1" y="1" width="3.6" height="3.6"/><rect x="15.4" y="1" width="3.6" height="3.6"/><rect x="8.2" y="15.2" width="3.6" height="3.6"/></g></svg>
<svg style="left:2156.0px;top:432.2px;" width="20.6" height="20.6" viewBox="0 0 20 20"><path d="M0.2 10 C3 5.4 6.6 3.2 10 3.2 C13.4 3.2 17 5.4 19.8 10 C17 14.6 13.4 16.8 10 16.8 C6.6 16.8 3 14.6 0.2 10Z" fill="#e6e6e6"/><circle cx="10" cy="9.8" r="5" fill="#282828"/><circle cx="10" cy="9.8" r="3.2" fill="#e6e6e6"/><circle cx="10" cy="9.8" r="1.5" fill="#ffffff"/></svg>
<svg style="left:2185.0px;top:432.5px;" width="20.8" height="20.8" viewBox="0 0 20 20"><path d="M0 4.6 H5.6 L7.4 1.6 H13.6 L15.4 4.6 H20 V17.6 H0 Z" fill="#e6e6e6"/><circle cx="10.6" cy="10.6" r="5.4" fill="#282828"/><circle cx="10.6" cy="10.6" r="4.3" fill="#e6e6e6"/><circle cx="10.6" cy="10.6" r="3.1" fill="#282828"/></svg>
<svg style="left:1698.4px;top:461.7px;" width="16" height="20" viewBox="0 0 16 20"><path d="M4.4 2.5999999999999996 L11.6 10 L4.4 17.4" fill="none" stroke="#6a6a6a" stroke-width="1.5" stroke-linecap="round" stroke-linejoin="round"/></svg>
<svg style="left:1725.25px;top:460.95px;" width="21.5" height="21.5" viewBox="0 0 20 20"><path d="M2.6 3 H17.4 L10 17.4 Z" fill="none" stroke="#7a573c" stroke-width="3.5" stroke-linejoin="round"/></svg>
<div class="t" style="left:1755.4px;top:462.10px;color:#7e7e7e;font-size:17px;letter-spacing:0.731px;">Torus.002</div>
<svg style="left:1869.55px;top:459.95px;" width="21.5" height="21.5" viewBox="0 0 20 20"><g fill="none" stroke="#1f7f69" stroke-width="1.3"><path d="M4 3.2 H16 M16.8 4.6 L11 15.4 M9 15.4 L3.2 4.6"/><rect x="1" y="1" width="3.6" height="3.6"/><rect x="15.4" y="1" width="3.6" height="3.6"/><rect x="8.2" y="15.2" width="3.6" height="3.6"/></g></svg>
<svg style="left:2156.0px;top:461.2px;" width="20.6" height="20.6" viewBox="0 0 20 20"><path d="M0.8 8.6 C4.6 13.8 7.4 15 10 15 C12.6 15 15.4 13.8 19.2 8.6" fill="none" stroke="#b0b0b0" stroke-width="1.2" stroke-linecap="round"/></svg>
<svg style="left:2185.0px;top:461.5px;" width="20.8" height="20.8" viewBox="0 0 20 20"><path d="M0.7 5.2 H5.8 L7.6 2.2 H13.4 L15.2 5.2 H19.3 V17 H0.7 Z" fill="none" stroke="#b0b0b0" stroke-width="1.2" stroke-linejoin="round"/><path d="M7.6 8 L13 13.4 M13 8 L7.6 13.4" stroke="#b0b0b0" stroke-width="1.3" fill="none"/></svg>
<svg style="left:2129.4px;top:116.2px;" width="15.2" height="15.2" viewBox="0 0 20 20"><rect x="0" y="0" width="20" height="20" rx="2.6" fill="#e6e6e6"/><path d="M3.6 10.6 L8 14.6 L16.6 5.4" fill="none" stroke="#222" stroke-width="3" stroke-linecap="round" stroke-linejoin="round"/></svg>
<svg style="left:2156.0px;top:113.2px;" width="20.6" height="20.6" viewBox="0 0 20 20"><path d="M0.2 10 C3 5.4 6.6 3.2 10 3.2 C13.4 3.2 17 5.4 19.8 10 C17 14.6 13.4 16.8 10 16.8 C6.6 16.8 3 14.6 0.2 10Z" fill="#e6e6e6"/><circle cx="10" cy="9.8" r="5" fill="#2b2b2b"/><circle cx="10" cy="9.8" r="3.2" fill="#e6e6e6"/><circle cx="10" cy="9.8" r="1.5" fill="#ffffff"/></svg>
<svg style="left:2185.0px;top:113.5px;" width="20.8" height="20.8" viewBox="0 0 20 20"><path d="M0 4.6 H5.6 L7.4 1.6 H13.6 L15.4 4.6 H20 V17.6 H0 Z" fill="#e6e6e6"/><circle cx="10.6" cy="10.6" r="5.4" fill="#2b2b2b"/><circle cx="10.6" cy="10.6" r="4.3" fill="#e6e6e6"/><circle cx="10.6" cy="10.6" r="3.1" fill="#2b2b2b"/></svg>
<svg style="left:2129.4px;top:145.2px;" width="15.2" height="15.2" viewBox="0 0 20 20"><rect x="0" y="0" width="20" height="20" rx="2.6" fill="#e6e6e6"/><path d="M3.6 10.6 L8 14.6 L16.6 5.4" fill="none" stroke="#222" stroke-width="3" stroke-linecap="round" stroke-linejoin="round"/></svg>
</div></div>
<div style="left:1634px;top:679.4px;width:601px;height:1350px;overflow:hidden;border-radius:6px;"><div style="left:-1634px;top:-679.4px;width:0;height:0;">
<div style="left:1634px;top:679px;width:601px;height:37px;background:#303030;"></div>
<div style="left:1645.8px;top:684px;width:44.5px;height:27.4px;background:#282828;border-radius:5px;box-shadow:0 0 0 1px rgba(255,255,255,0.085);"></div>
<svg style="left:1652.35px;top:687.05px;" width="21.3" height="21.3" viewBox="0 0 20 20"><rect x="0" y="0" width="20" height="8.8" rx="4.4" fill="#e6e6e6"/><rect x="0" y="11.4" width="20" height="8.8" rx="4.4" fill="#e6e6e6"/><path d="M8.8 1.6 H15.4 A2.8 2.8 0 0 1 15.4 7.2 H8.8 Z" fill="#282828"/><path d="M12.8 13 H15.4 A2.8 2.8 0 0 1 15.4 18.6 H12.8 Z" fill="#282828"/></svg>
<svg style="left:1673.4px;top:691px;" width="16" height="16" viewBox="0 0 16 16"><path d="M3.5999999999999996 5.8 L8 10.2 L12.4 5.8" fill="none" stroke="#e6e6e6" stroke-width="1.55" stroke-linecap="round" stroke-linejoin="round"/></svg>
<div style="left:1845.5px;top:684px;width:172px;height:27.4px;background:#1d1d1d;border-radius:5px;box-shadow:0 0 0 1px rgba(255,255,255,0.085);"></div>
<svg style="left:1853.0px;top:687.3px;" width="22" height="22" viewBox="0 0 20 20"><circle cx="12" cy="7.8" r="5.8" fill="none" stroke="#e6e6e6" stroke-width="1.5"/><path d="M8 12 L1.6 18.4" stroke="#e6e6e6" stroke-width="1.6" stroke-linecap="round"/></svg>
<div class="t" style="left:1884.7px;top:686.40px;color:#757575;font-size:17px;letter-spacing:-0.172px;">Search</div>
<div style="left:2184.5px;top:684px;width:28px;height:27.4px;background:#282828;border-radius:5px;box-shadow:0 0 0 1px rgba(255,255,255,0.085);"></div>
<svg style="left:2190.5px;top:691px;" width="16" height="16" viewBox="0 0 16 16"><path d="M3.5999999999999996 5.8 L8 10.2 L12.4 5.8" fill="none" stroke="#e6e6e6" stroke-width="1.55" stroke-linecap="round" stroke-linejoin="round"/></svg>
<div style="left:1634px;top:716px;width:43px;height:1310px;background:#1d1d1d;"></div>
<div style="left:1638px;top:716px;width:39px;height:52px;background:#222222;border-radius:0 0 0 5px;"></div>
<div style="left:1638px;top:769.5px;width:39px;height:209px;background:#212121;border-radius:5px;"></div>
<div style="left:1638px;top:980px;width:39px;height:50px;background:#212121;border-radius:5px;"></div>
<div style="left:1638px;top:1031.5px;width:39px;height:172px;background:#212121;border-radius:5px;"></div>
<div style="left:1639.2px;top:1162.5px;width:38px;height:37.5px;background:#303030;border-radius:5px 0 0 5px;"></div>
<svg style="left:1646.75px;top:736.15px;" width="22.5" height="22.5" viewBox="0 0 20 20"><rect x="3.6" y="0.8" width="1.6" height="8.6" fill="#a2a2a2"/><path d="M1.4 11 H7.4 V15.4 A3 3 0 0 1 1.4 15.4 Z" fill="#a2a2a2" /><circle cx="4.4" cy="13.6" r="3.2" fill="#a2a2a2"/>
<path d="M11.6 1 V5.6 L13.8 8 V17.6 A1.6 1.6 0 0 0 17 17.6 V8 L19.2 5.6 V1 L17.2 2.4 V5 H13.6 V2.4 Z" fill="#a2a2a2"/><circle cx="15.4" cy="17.4" r="0.7" fill="#1d1d1d"/></svg>
<svg style="left:1647.0px;top:787.2px;" width="22" height="22" viewBox="0 0 20 20"><path d="M0.6 5.6 H5 L6.4 2.6 H11.2 L12.4 5.6 H19.4 V18.6 H0.6 Z" fill="#a2a2a2"/><rect x="15" y="2.4" width="3" height="1.4" fill="#a2a2a2"/><rect x="7.2" y="3.8" width="3.2" height="1.6" fill="#1d1d1d"/><rect x="2.6" y="8.4" width="9.6" height="1.7" fill="#1d1d1d"/><rect x="2.6" y="11.4" width="9.6" height="1.7" fill="#1d1d1d"/><rect x="2.6" y="14.4" width="9.6" height="1.7" fill="#1d1d1d"/><circle cx="15.8" cy="9.2" r="1.3" fill="#1d1d1d"/><circle cx="15.8" cy="14.6" r="1.3" fill="#1d1d1d"/></svg>
<svg style="left:1647.0px;top:827.8px;" width="22" height="22" viewBox="0 0 20 20"><path d="M0.6 3 A2 2 0 0 1 2.6 1 H17.4 A2 2 0 0 1 19.4 3 V10.6 H16.6 V6.4 H3.4 V10.6 H0.6 Z" fill="#a2a2a2"/><rect x="4.6" y="7.6" width="10.8" height="11.4" fill="#a2a2a2" opacity="0.8"/><path d="M6.4 16.6 L9.6 11.6 L12.8 16.6 Z" fill="#1d1d1d"/><circle cx="13" cy="10.4" r="1.1" fill="#1d1d1d"/></svg>
<svg style="left:1647.0px;top:867.8px;" width="22" height="22" viewBox="0 0 20 20"><g fill="none" stroke="#a2a2a2" stroke-width="1.2"><path d="M2.8 6.6 H1 V19 H14 V17.4"/><path d="M5 4.4 H3.2 V16.6 H16.4 V15"/></g><rect x="5.8" y="0.8" width="13.4" height="13.4" fill="#a2a2a2"/><rect x="7.2" y="2.2" width="10.6" height="10.6" fill="#1d1d1d"/><path d="M7.2 12.8 L11.4 5.6 L14 10 L15.4 8.4 L17.8 12.8 Z" fill="#a2a2a2"/><circle cx="15.4" cy="4.8" r="1.2" fill="#a2a2a2"/></svg>
<svg style="left:1647.0px;top:907.4px;" width="22" height="22" viewBox="0 0 20 20"><path d="M5.4 1.4 C7.4 5.4 9.6 9.6 9.6 12.2 A4.2 4.2 0 0 1 1.2 12.2 C1.2 9.6 3.6 5 5.4 1.4Z" fill="#a2a2a2"/><circle cx="15.4" cy="3.4" r="2.7" fill="#a2a2a2"/><circle cx="12.8" cy="14.4" r="4.4" fill="#1d1d1d" stroke="#a2a2a2" stroke-width="1.5"/><path d="M10.8 12.8 A2.6 2.6 0 0 1 12.8 11.8" stroke="#a2a2a2" stroke-width="1" fill="none"/></svg>
<svg style="left:1646.75px;top:948.15px;" width="22.5" height="22.5" viewBox="0 0 20 20"><circle cx="10" cy="10" r="8.4" fill="none" stroke="#c0505e" stroke-width="1.5"/><path d="M4 6 C6 4 8.6 3.6 10 4.4 C9.4 6 11 6.6 10.4 8 C9.4 9.6 6.6 8.6 6.6 10.6 C6.6 12 8.6 12.4 9 14 C9.2 15.6 8 16.6 6.4 16 C3.4 14 2.4 9.6 4 6 Z" fill="#c0505e"/><path d="M12 11.6 C14 11 16 12 15.6 13.6 C15 15.4 13.4 16.6 12.4 15.4 C11.6 14.4 11 12.4 12 11.6 Z" fill="#c0505e"/><path d="M1 19 L4.4 15.6 M15.6 4.4 L19 1" stroke="#c0505e" stroke-width="1.3"/></svg>
<svg style="left:1647.75px;top:999.15px;" width="20.5" height="20.5" viewBox="0 0 20 20"><g fill="none" stroke="#e0e0e0" stroke-width="1.5"><rect x="0.8" y="1.4" width="18.4" height="4.2" rx="0.6"/><path d="M2.4 5.8 V18.4 H17.6 V5.8"/></g><rect x="7" y="8.4" width="6" height="2.6" rx="1.3" fill="#e0e0e0"/></svg>
<svg style="left:1647.0px;top:1050.1px;" width="22" height="22" viewBox="0 0 20 20"><rect x="4.4" y="4.4" width="11.2" height="11.2" fill="#d98c4e"/><g fill="none" stroke="#a56b3c" stroke-width="1.3"><path d="M0.8 5.4 V0.8 H5.4 M14.6 0.8 H19.2 V5.4 M19.2 14.6 V19.2 H14.6 M5.4 19.2 H0.8 V14.6"/></g></svg>
<svg style="left:1647.0px;top:1089.9px;" width="22" height="22" viewBox="0 0 20 20"><path d="M17.6 13.6 A8.6 8.6 0 1 1 10.4 1.6" fill="none" stroke="#5f86d8" stroke-width="1.3"/><circle cx="9.8" cy="10.2" r="3.8" fill="#5f86d8"/><circle cx="16.8" cy="3.4" r="2.5" fill="#5072b4"/></svg>
<svg style="left:1646.75px;top:1129.65px;" width="22.5" height="22.5" viewBox="0 0 20 20"><path d="M2 15.6 A6.6 6.6 0 0 1 3.4 8 L14.6 1.6 A3.2 3.2 0 0 1 19 5.6 L13.6 16.4 A6.6 6.6 0 0 1 2 15.6 Z" fill="none" stroke="#5f86d8" stroke-width="1.3"/><circle cx="7.6" cy="12.2" r="4.2" fill="#5f86d8"/><circle cx="7.6" cy="12.2" r="1.6" fill="#1d1d1d"/><circle cx="15.4" cy="5" r="1.2" fill="#5f86d8"/></svg>
<svg style="left:1646.75px;top:1169.95px;" width="22.5" height="22.5" viewBox="0 0 20 20"><path d="M10 1.2 A7.6 7.6 0 0 1 17.6 8.8 C17.6 12 15.4 13.2 14.4 15.2 H5.6 C4.6 13.2 2.4 12 2.4 8.8 A7.6 7.6 0 0 1 10 1.2 Z" fill="none" stroke="#1ec79b" stroke-width="1.4"/><path d="M7.4 8.6 L8.4 12 M12.6 8.6 L11.6 12 M6.4 9 H13.6" stroke="#158a6c" stroke-width="1.3" fill="none"/><rect x="5.8" y="16.6" width="8.4" height="1.4" fill="#1ec79b"/><rect x="8.4" y="18.6" width="3.2" height="1.2" fill="#1ec79b"/></svg>
<svg style="left:1692.0px;top:731.6px;" width="22" height="22" viewBox="0 0 20 20"><rect x="5" y="5" width="10" height="10" fill="#e6e6e6"/><g fill="none" stroke="#e6e6e6" stroke-width="1.4" stroke-linecap="round" stroke-linejoin="round"><path d="M1.2 5.4 V1.2 H5.4 M14.6 1.2 H18.8 V5.4 M18.8 14.6 V18.8 H14.6 M5.4 18.8 H1.2 V14.6"/></g></svg>
<div class="t" style="left:1728px;top:731.40px;color:#e6e6e6;font-size:17px;letter-spacing:0.063px;">Point</div>
<svg style="left:1786.5px;top:732.6px;" width="16" height="20" viewBox="0 0 16 20"><path d="M5.3 4.4 L10.7 10 L5.3 15.6" fill="none" stroke="#c8c8c8" stroke-width="1.5" stroke-linecap="round" stroke-linejoin="round"/></svg>
<svg style="left:1812.5px;top:731.8px;" width="22" height="22" viewBox="0 0 20 20"><g fill="none" stroke="#e6e6e6" stroke-width="1.35" stroke-linejoin="round" stroke-linecap="round"><path d="M4.2 2.6 Q3.4 1.4 4.8 1.4 H12 Q13 1.4 13.4 2.4 L18.6 15.4 Q19 16.6 17.8 16.6 H10.6 Q9.6 16.6 9.2 15.6 Z"/><path d="M9.4 10.8 L1.6 18.4" stroke-dasharray="2.6 2.4"/></g><circle cx="10.8" cy="9.4" r="1.25" fill="#e6e6e6"/></svg>
<div class="t" style="left:1847.5px;top:731.40px;color:#e6e6e6;font-size:17px;letter-spacing:0.063px;">Point</div>
<svg style="left:2187.5px;top:731.6px;" width="22" height="22" viewBox="0 0 20 20"><g fill="none" stroke="#b0b0b0" stroke-width="1.4" stroke-linejoin="round" stroke-linecap="round"><path d="M11.2 1.8 L18.2 8.8 L16.4 9.4 L13.6 12.2 L13.4 15.6 L4.6 6.6 L7.8 6.4 L10.6 3.6 Z"/><path d="M9 11 L1.6 18.4"/></g></svg>
<div style="left:1689.7px;top:781.8px;width:521.2px;height:27.4px;background:#1d1d1d;border-radius:5px;box-shadow:0 0 0 1px rgba(255,255,255,0.085);"></div>
<div style="left:1689.7px;top:781.8px;width:44.5px;height:27.4px;background:#282828;border-radius:5px 0 0 5px;box-shadow:1px 0 0 0 rgba(255,255,255,0.085);"></div>
<svg style="left:1693.8px;top:784.6px;" width="22" height="22" viewBox="0 0 20 20"><g fill="none" stroke="#e6e6e6" stroke-width="1.35" stroke-linejoin="round" stroke-linecap="round"><path d="M4.2 2.6 Q3.4 1.4 4.8 1.4 H12 Q13 1.4 13.4 2.4 L18.6 15.4 Q19 16.6 17.8 16.6 H10.6 Q9.6 16.6 9.2 15.6 Z"/><path d="M9.4 10.8 L1.6 18.4" stroke-dasharray="2.6 2.4"/></g><circle cx="10.8" cy="9.4" r="1.25" fill="#e6e6e6"/></svg>
<svg style="left:1717.3px;top:789px;" width="16" height="16" viewBox="0 0 16 16"><path d="M3.5999999999999996 5.8 L8 10.2 L12.4 5.8" fill="none" stroke="#e6e6e6" stroke-width="1.55" stroke-linecap="round" stroke-linejoin="round"/></svg>
<div class="t" style="left:1745.8px;top:784.40px;color:#e6e6e6;font-size:17px;letter-spacing:0.063px;">Point</div>
<div style="left:2182.1px;top:781.8px;width:28.8px;height:27.4px;background:#545454;border-radius:0 5px 5px 0;"></div>
<svg style="left:2186.0px;top:784.6px;" width="22" height="22" viewBox="0 0 20 20"><path d="M10 1.4 C12.6 3 15.4 3.6 18 3.6 C18 10.6 15.6 15.6 10 18.8 C4.4 15.6 2 10.6 2 3.6 C4.6 3.6 7.4 3 10 1.4 Z" fill="none" stroke="#c0c0c0" stroke-width="1.4" stroke-linejoin="round"/></svg>
<div style="left:1688.2px;top:824.6px;width:522.7px;height:35.60000000000002px;background:#3d3d3d;border-radius:6px;"></div>
<svg style="left:1698.4px;top:833.0px;" width="16" height="20" viewBox="0 0 16 20"><path d="M5.3 4.4 L10.7 10 L5.3 15.6" fill="none" stroke="#d0d0d0" stroke-width="1.5" stroke-linecap="round" stroke-linejoin="round"/></svg>
<div class="t" style="left:1719.2px;top:832.20px;color:#e6e6e6;font-size:17px;letter-spacing:0.157px;">Preview</div>
<svg style="left:2185.5px;top:839.8000000000001px;" width="16" height="7" viewBox="0 0 16 7"><g fill="#8a8a8a"><rect x="0" y="0" width="2" height="2"/><rect x="4" y="0" width="2" height="2"/><rect x="8" y="0" width="2" height="2"/><rect x="12" y="0" width="2" height="2"/><rect x="0" y="4" width="2" height="2"/><rect x="4" y="4" width="2" height="2"/><rect x="8" y="4" width="2" height="2"/><rect x="12" y="4" width="2" height="2"/></g></svg>
<div style="left:1688.2px;top:862.5px;width:522.7px;height:339.0999999999999px;background:#3d3d3d;border-radius:6px;"></div>
<svg style="left:1698.9px;top:873.7px;" width="16" height="16" viewBox="0 0 16 16"><path d="M2 5.0 L8 11.0 L14 5.0" fill="none" stroke="#d0d0d0" stroke-width="1.5" stroke-linecap="round" stroke-linejoin="round"/></svg>
<div class="t" style="left:1719.2px;top:870.10px;color:#e6e6e6;font-size:17px;letter-spacing:0.135px;">Light</div>
<svg style="left:2185.5px;top:877.7px;" width="16" height="7" viewBox="0 0 16 7"><g fill="#8a8a8a"><rect x="0" y="0" width="2" height="2"/><rect x="4" y="0" width="2" height="2"/><rect x="8" y="0" width="2" height="2"/><rect x="12" y="0" width="2" height="2"/><rect x="0" y="4" width="2" height="2"/><rect x="4" y="4" width="2" height="2"/><rect x="8" y="4" width="2" height="2"/><rect x="12" y="4" width="2" height="2"/></g></svg>
<div style="left:1688.2px;top:1204.5px;width:522.7px;height:35.59999999999991px;background:#3d3d3d;border-radius:6px;"></div>
<svg style="left:1698.4px;top:1212.8999999999999px;" width="16" height="20" viewBox="0 0 16 20"><path d="M5.3 4.4 L10.7 10 L5.3 15.6" fill="none" stroke="#d0d0d0" stroke-width="1.5" stroke-linecap="round" stroke-linejoin="round"/></svg>
<div class="t" style="left:1719.2px;top:1212.10px;color:#e6e6e6;font-size:17px;letter-spacing:0.051px;">Animation</div>
<svg style="left:2185.5px;top:1219.6999999999998px;" width="16" height="7" viewBox="0 0 16 7"><g fill="#8a8a8a"><rect x="0" y="0" width="2" height="2"/><rect x="4" y="0" width="2" height="2"/><rect x="8" y="0" width="2" height="2"/><rect x="12" y="0" width="2" height="2"/><rect x="0" y="4" width="2" height="2"/><rect x="4" y="4" width="2" height="2"/><rect x="8" y="4" width="2" height="2"/><rect x="12" y="4" width="2" height="2"/></g></svg>
<div style="left:1688.2px;top:1242.2px;width:522.7px;height:35.59999999999991px;background:#3d3d3d;border-radius:6px;"></div>
<svg style="left:1698.4px;top:1250.6px;" width="16" height="20" viewBox="0 0 16 20"><path d="M5.3 4.4 L10.7 10 L5.3 15.6" fill="none" stroke="#d0d0d0" stroke-width="1.5" stroke-linecap="round" stroke-linejoin="round"/></svg>
<div class="t" style="left:1719.2px;top:1249.80px;color:#e6e6e6;font-size:17px;letter-spacing:0.127px;">Custom Properties</div>
<svg style="left:2185.5px;top:1257.3999999999999px;" width="16" height="7" viewBox="0 0 16 7"><g fill="#8a8a8a"><rect x="0" y="0" width="2" height="2"/><rect x="4" y="0" width="2" height="2"/><rect x="8" y="0" width="2" height="2"/><rect x="12" y="0" width="2" height="2"/><rect x="0" y="4" width="2" height="2"/><rect x="4" y="4" width="2" height="2"/><rect x="8" y="4" width="2" height="2"/><rect x="12" y="4" width="2" height="2"/></g></svg>
<div style="left:1700.7px;top:911px;width:497.2px;height:27px;background:#545454;border-radius:5px;"></div>
<div style="left:2073.9px;top:911px;width:124px;height:27px;background:#4772b3;border-radius:0 5px 5px 0;"></div>
<div style="left:1822.7px;top:911px;width:1px;height:27px;background:rgba(40,40,40,0.55);"></div>
<div style="left:1947.9px;top:911px;width:1px;height:27px;background:rgba(40,40,40,0.55);"></div>
<div style="left:2073.4px;top:911px;width:1px;height:27px;background:rgba(40,40,40,0.55);"></div>
<svg style="left:1706.05px;top:913.95px;" width="22.5" height="22.5" viewBox="0 0 20 20"><circle cx="10" cy="8.6" r="7.6" fill="none" stroke="#c8c8c8" stroke-width="1.3"/><circle cx="10" cy="8.6" r="1.3" fill="#c8c8c8"/><path d="M10 9.4 V20.4" stroke="#c8c8c8" stroke-width="1.2" stroke-dasharray="3 1.8" fill="none"/></svg>
<div class="t" style="left:1754.8px;top:913.40px;color:#e6e6e6;font-size:17px;letter-spacing:0.063px;">Point</div>
<svg style="left:1829.75px;top:913.35px;" width="22.5" height="22.5" viewBox="0 0 20 20"><circle cx="10" cy="10" r="4.2" fill="none" stroke="#c8c8c8" stroke-width="1.4"/><path d="M10 0.4 V4 M10 16 V19.6 M0.4 10 H4 M16 10 H19.6 M3.2 3.2 L5.8 5.8 M14.2 14.2 L16.8 16.8 M3.2 16.8 L5.8 14.2 M14.2 5.8 L16.8 3.2" stroke="#c8c8c8" stroke-width="1.3" fill="none"/></svg>
<div class="t" style="left:1883.8px;top:913.40px;color:#e6e6e6;font-size:17px;letter-spacing:-0.023px;">Sun</div>
<svg style="left:1954.35px;top:913.15px;" width="22.5" height="22.5" viewBox="0 0 20 20"><path d="M3.6 6.4 L18.6 1.6 L15.4 17.4 C10 17.6 4.4 13 3.6 6.4 Z" fill="none" stroke="#c8c8c8" stroke-width="1.3" stroke-linejoin="round"/><path d="M8.6 12.6 L1 20" stroke="#c8c8c8" stroke-width="1.2" stroke-dasharray="3 1.8" fill="none"/><circle cx="10" cy="11" r="1.2" fill="#c8c8c8"/></svg>
<div class="t" style="left:2006.3px;top:913.40px;color:#e6e6e6;font-size:17px;letter-spacing:0.077px;">Spot</div>
<svg style="left:2079.8px;top:913.8px;" width="22" height="22" viewBox="0 0 20 20"><g fill="none" stroke="#ffffff" stroke-width="1.35" stroke-linejoin="round" stroke-linecap="round"><path d="M4.2 2.6 Q3.4 1.4 4.8 1.4 H12 Q13 1.4 13.4 2.4 L18.6 15.4 Q19 16.6 17.8 16.6 H10.6 Q9.6 16.6 9.2 15.6 Z"/><path d="M9.4 10.8 L1.6 18.4" stroke-dasharray="2.6 2.4"/></g><circle cx="10.8" cy="9.4" r="1.25" fill="#ffffff"/></svg>
<div class="t" style="left:2131.5px;top:913.40px;color:#ffffff;font-size:17px;letter-spacing:-0.235px;">Area</div>
<div class="t" style="left:1839.28px;top:949.20px;color:#e6e6e6;font-size:17px;letter-spacing:0.220px;">Color</div>
<div style="left:1895.9px;top:946.9px;width:272.9px;height:26.7px;background:#ffffff;border-radius:5px;"></div>
<div style="left:2181.9px;top:958.0px;width:5.2px;height:5.2px;background:#e0e0e0;border-radius:50%;"></div>
<div class="t" style="left:1832.30px;top:980.90px;color:#e6e6e6;font-size:17px;letter-spacing:0.104px;">Power</div>
<div style="left:1895.9px;top:979.3px;width:272.9px;height:26.7px;background:#545454;border-radius:5px;"></div>
<div class="t" style="left:2000.4px;top:980.90px;color:#e6e6e6;font-size:17px;letter-spacing:0.644px;">1200 W</div>
<div style="left:2181.9px;top:990.1999999999999px;width:5.2px;height:5.2px;background:#e0e0e0;border-radius:50%;"></div>
<div class="t" style="left:1833.29px;top:1023.70px;color:#e6e6e6;font-size:17px;letter-spacing:-0.288px;">Shape</div>
<div style="left:1895.9px;top:1022.3px;width:272.9px;height:26.7px;background:#282828;border-radius:5px;box-shadow:0 0 0 1px rgba(255,255,255,0.085);"></div>
<div class="t" style="left:1907px;top:1023.70px;color:#e6e6e6;font-size:17px;letter-spacing:-0.083px;">Square</div>
<svg style="left:2151.9px;top:1029px;" width="16" height="16" viewBox="0 0 16 16"><path d="M3.5999999999999996 5.8 L8 10.2 L12.4 5.8" fill="none" stroke="#e6e6e6" stroke-width="1.55" stroke-linecap="round" stroke-linejoin="round"/></svg>
<div style="left:2181.9px;top:1033.2px;width:5.2px;height:5.2px;background:#e0e0e0;border-radius:50%;"></div>
<div class="t" style="left:1849.36px;top:1055.90px;color:#e6e6e6;font-size:17px;letter-spacing:-0.357px;">Size</div>
<div style="left:1895.9px;top:1054.3px;width:272.9px;height:26.7px;background:#545454;border-radius:5px;"></div>
<div class="t" style="left:1998.9px;top:1055.90px;color:#e6e6e6;font-size:17px;letter-spacing:0.664px;">0.831 m</div>
<div style="left:2181.9px;top:1065.2px;width:5.2px;height:5.2px;background:#e0e0e0;border-radius:50%;"></div>
<svg style="left:1718.3px;top:1102.8px;" width="16" height="20" viewBox="0 0 16 20"><path d="M5.3 4.4 L10.7 10 L5.3 15.6" fill="none" stroke="#d0d0d0" stroke-width="1.5" stroke-linecap="round" stroke-linejoin="round"/></svg>
<div style="left:1738.1px;top:1103.8px;width:19px;height:19.3px;background:#4772b3;border-radius:4px;"></div>
<svg style="left:1738.1px;top:1103.8px;" width="19" height="19.3" viewBox="0 0 19 19.3"><path d="M4.6 10 L8 13.6 L14.6 5.8" fill="none" stroke="#ffffff" stroke-width="2.2" stroke-linecap="round" stroke-linejoin="round"/></svg>
<div class="t" style="left:1761.3px;top:1102.00px;color:#e6e6e6;font-size:17px;letter-spacing:0.014px;">Shadow</div>
<svg style="left:1718.3px;top:1138.6px;" width="16" height="20" viewBox="0 0 16 20"><path d="M5.3 4.4 L10.7 10 L5.3 15.6" fill="none" stroke="#d0d0d0" stroke-width="1.5" stroke-linecap="round" stroke-linejoin="round"/></svg>
<div class="t" style="left:1739px;top:1137.80px;color:#e6e6e6;font-size:17px;letter-spacing:0.626px;">Influence</div>
<svg style="left:1718.3px;top:1174.5px;" width="16" height="20" viewBox="0 0 16 20"><path d="M5.3 4.4 L10.7 10 L5.3 15.6" fill="none" stroke="#d0d0d0" stroke-width="1.5" stroke-linecap="round" stroke-linejoin="round"/></svg>
<div style="left:1738.1px;top:1175.2px;width:19px;height:19.3px;background:#545454;border-radius:4px;box-shadow:0 0 0 1px rgba(255,255,255,0.085);"></div>
<div class="t" style="left:1761.3px;top:1173.70px;color:#e6e6e6;font-size:17px;letter-spacing:0.077px;">Custom Distance</div>
</div></div>
<div style="left:-8px;top:1987px;width:1639px;height:40px;overflow:hidden;border-radius:6px;"><div style="left:8px;top:-1987px;width:0;height:0;">
<div style="left:6.1px;top:1992px;width:45.3px;height:28px;background:#282828;border-radius:5px;box-shadow:0 0 0 1px rgba(255,255,255,0.085);"></div>
<svg style="left:13.1px;top:1994.8px;" width="21" height="21" viewBox="0 0 20 20"><circle cx="10" cy="10" r="9.4" fill="#e6e6e6"/><path d="M11.6 4 L7 10.4 L10.4 15.4" fill="none" stroke="#282828" stroke-width="2.2" stroke-linecap="round" stroke-linejoin="round"/></svg>
<svg style="left:35px;top:1998.9px;" width="16" height="16" viewBox="0 0 16 16"><path d="M3.5999999999999996 5.8 L8 10.2 L12.4 5.8" fill="none" stroke="#e6e6e6" stroke-width="1.55" stroke-linecap="round" stroke-linejoin="round"/></svg>
<div style="left:59.7px;top:1992px;width:198px;height:28px;background:#282828;border-radius:5px;box-shadow:0 0 0 1px rgba(255,255,255,0.085);"></div>
<div style="left:166.2px;top:1992px;width:1px;height:28px;background:#3a3a3a;"></div>
<div class="t" style="left:71.2px;top:1994.00px;color:#e6e6e6;font-size:17px;letter-spacing:0.175px;">Playback</div>
<svg style="left:149.5px;top:1998.9px;" width="16" height="16" viewBox="0 0 16 16"><path d="M3.5999999999999996 5.8 L8 10.2 L12.4 5.8" fill="none" stroke="#e6e6e6" stroke-width="1.55" stroke-linecap="round" stroke-linejoin="round"/></svg>
<div class="t" style="left:178.1px;top:1994.00px;color:#e6e6e6;font-size:17px;letter-spacing:0.165px;">Keying</div>
<svg style="left:240.6px;top:1998.9px;" width="16" height="16" viewBox="0 0 16 16"><path d="M3.5999999999999996 5.8 L8 10.2 L12.4 5.8" fill="none" stroke="#e6e6e6" stroke-width="1.55" stroke-linecap="round" stroke-linejoin="round"/></svg>
<div class="t" style="left:272px;top:1994.00px;color:#e6e6e6;font-size:17px;letter-spacing:0.320px;">View</div>
<div class="t" style="left:333.1px;top:1994.00px;color:#e6e6e6;font-size:17px;letter-spacing:0.263px;">Marker</div>
<div style="left:680.1px;top:1992px;width:56px;height:28px;background:#282828;border-radius:5px;box-shadow:0 0 0 1px rgba(255,255,255,0.085);"></div>
<div style="left:680.1px;top:1992px;width:27.4px;height:28px;background:#545454;border-radius:5px 0 0 5px;"></div>
<svg style="left:682.5px;top:1995.4px;" width="21" height="21" viewBox="0 0 20 20"><circle cx="10" cy="10" r="6.6" fill="none" stroke="#bdbdbd" stroke-width="1.3"/></svg>
<svg style="left:713.8px;top:1998.7px;" width="16" height="16" viewBox="0 0 16 16"><path d="M3.5999999999999996 5.8 L8 10.2 L12.4 5.8" fill="none" stroke="#5a5a5a" stroke-width="1.55" stroke-linecap="round" stroke-linejoin="round"/></svg>
<div style="left:745px;top:1992px;width:172.2px;height:28px;background:#545454;border-radius:5px;"></div>
<div style="left:772.0px;top:1992px;width:1px;height:28px;background:rgba(40,40,40,0.55);"></div>
<div style="left:801.2px;top:1992px;width:1px;height:28px;background:rgba(40,40,40,0.55);"></div>
<div style="left:830.1px;top:1992px;width:1px;height:28px;background:rgba(40,40,40,0.55);"></div>
<div style="left:859.1px;top:1992px;width:1px;height:28px;background:rgba(40,40,40,0.55);"></div>
<div style="left:888.0px;top:1992px;width:1px;height:28px;background:rgba(40,40,40,0.55);"></div>
<svg style="left:747.8px;top:1995.3px;" width="22" height="22" viewBox="0 0 20 20"><rect x="3.6" y="3.6" width="2" height="12.8" fill="#e6e6e6"/><path d="M16.4 3.6 V16.4 L7 10 Z" fill="#e6e6e6"/></svg>
<svg style="left:776.1px;top:1995.3px;" width="22" height="22" viewBox="0 0 20 20"><path d="M7 3 L12.2 10 L7 17 L1.8 10 Z" fill="#e6e6e6"/><path d="M18.6 4.6 V15.4 L12.6 10 Z" fill="#e6e6e6"/></svg>
<svg style="left:805.2px;top:1995.3px;" width="22" height="22" viewBox="0 0 20 20"><path d="M16 2.6 V17.4 L3.6 10 Z" fill="#e6e6e6"/></svg>
<svg style="left:834.1px;top:1995.3px;" width="22" height="22" viewBox="0 0 20 20"><path d="M4 2.6 V17.4 L16.4 10 Z" fill="#e6e6e6"/></svg>
<svg style="left:863.0px;top:1995.3px;" width="22" height="22" viewBox="0 0 20 20"><path d="M13 3 L18.2 10 L13 17 L7.8 10 Z" fill="#e6e6e6"/><path d="M1.4 4.6 V15.4 L7.4 10 Z" fill="#e6e6e6"/></svg>
<svg style="left:891.8px;top:1995.3px;" width="22" height="22" viewBox="0 0 20 20"><rect x="14.4" y="3.6" width="2" height="12.8" fill="#e6e6e6"/><path d="M3.6 3.6 V16.4 L13 10 Z" fill="#e6e6e6"/></svg>
<div style="left:1223.1px;top:1992px;width:106px;height:28px;background:#545454;border-radius:5px;"></div>
<div class="t" style="left:1270.50px;top:1994.00px;color:#e6e6e6;font-size:17px;letter-spacing:0.150px;">1</div>
<div style="left:1338.5px;top:1992px;width:280.1px;height:28px;background:#545454;border-radius:5px;"></div>
<div style="left:1338.5px;top:1992px;width:26.5px;height:28px;background:#282828;border-radius:5px 0 0 5px;box-shadow:0 0 0 1px rgba(255,255,255,0.085);"></div>
<svg style="left:1341.5px;top:1995.0px;" width="21" height="21" viewBox="0 0 20 20"><circle cx="10" cy="11.4" r="7" fill="none" stroke="#e6e6e6" stroke-width="1.4"/><path d="M10 7.4 V11.6 H13.4" fill="none" stroke="#e6e6e6" stroke-width="1.3"/><path d="M7.4 2 H12.6 M10 2 V4.4 M15.6 5.4 L17.4 3.6" stroke="#e6e6e6" stroke-width="1.4" fill="none"/></svg>
<div style="left:1495px;top:1992px;width:1px;height:28px;background:rgba(40,40,40,0.55);"></div>
<div class="t" style="left:1389.3px;top:1994.00px;color:#e6e6e6;font-size:17px;letter-spacing:-0.075px;">Start</div>
<div class="t" style="left:1464.00px;top:1994.00px;color:#e6e6e6;font-size:17px;letter-spacing:0.150px;">1</div>
<div class="t" style="left:1519.7px;top:1994.00px;color:#e6e6e6;font-size:17px;letter-spacing:-1.023px;">End</div>
<div class="t" style="left:1566.8px;top:1994.00px;color:#e6e6e6;font-size:17px;letter-spacing:1.320px;">250</div>
</div></div>
<div style="left:2078px;top:1997px;width:59px;height:20px;background:#f0f0f6;box-shadow:inset 0 0 0 1.5px #8c8c8c;"></div>
<div class="t" style="left:2089px;top:2003.2px;color:#111;font-size:17px;font-weight:bold;">save</div>
<div style="left:-8px;top:42px;width:916px;height:988px;background:transparent;border-radius:6px;box-shadow:inset 0 0 0 1px rgba(255,255,255,0.075);pointer-events:none;"></div>
<div style="left:-8px;top:1033px;width:916px;height:950px;background:transparent;border-radius:6px;box-shadow:inset 0 0 0 1px rgba(255,255,255,0.075);pointer-events:none;"></div>
<div style="left:911px;top:42px;width:720px;height:1941px;background:transparent;border-radius:6px;box-shadow:inset 0 0 0 1px rgba(255,255,255,0.075);pointer-events:none;"></div>
<div style="left:1634px;top:42px;width:601px;height:633.7px;background:transparent;border-radius:6px;box-shadow:inset 0 0 0 1px rgba(255,255,255,0.075);pointer-events:none;"></div>
<div style="left:1634px;top:679.4px;width:601px;height:1350px;background:transparent;border-radius:6px;box-shadow:inset 0 0 0 1px rgba(255,255,255,0.075);pointer-events:none;"></div>
<div style="left:-8px;top:1987px;width:1639px;height:40px;background:transparent;border-radius:6px;box-shadow:inset 0 0 0 1px rgba(255,255,255,0.075);pointer-events:none;"></div>
</div></body></html>
